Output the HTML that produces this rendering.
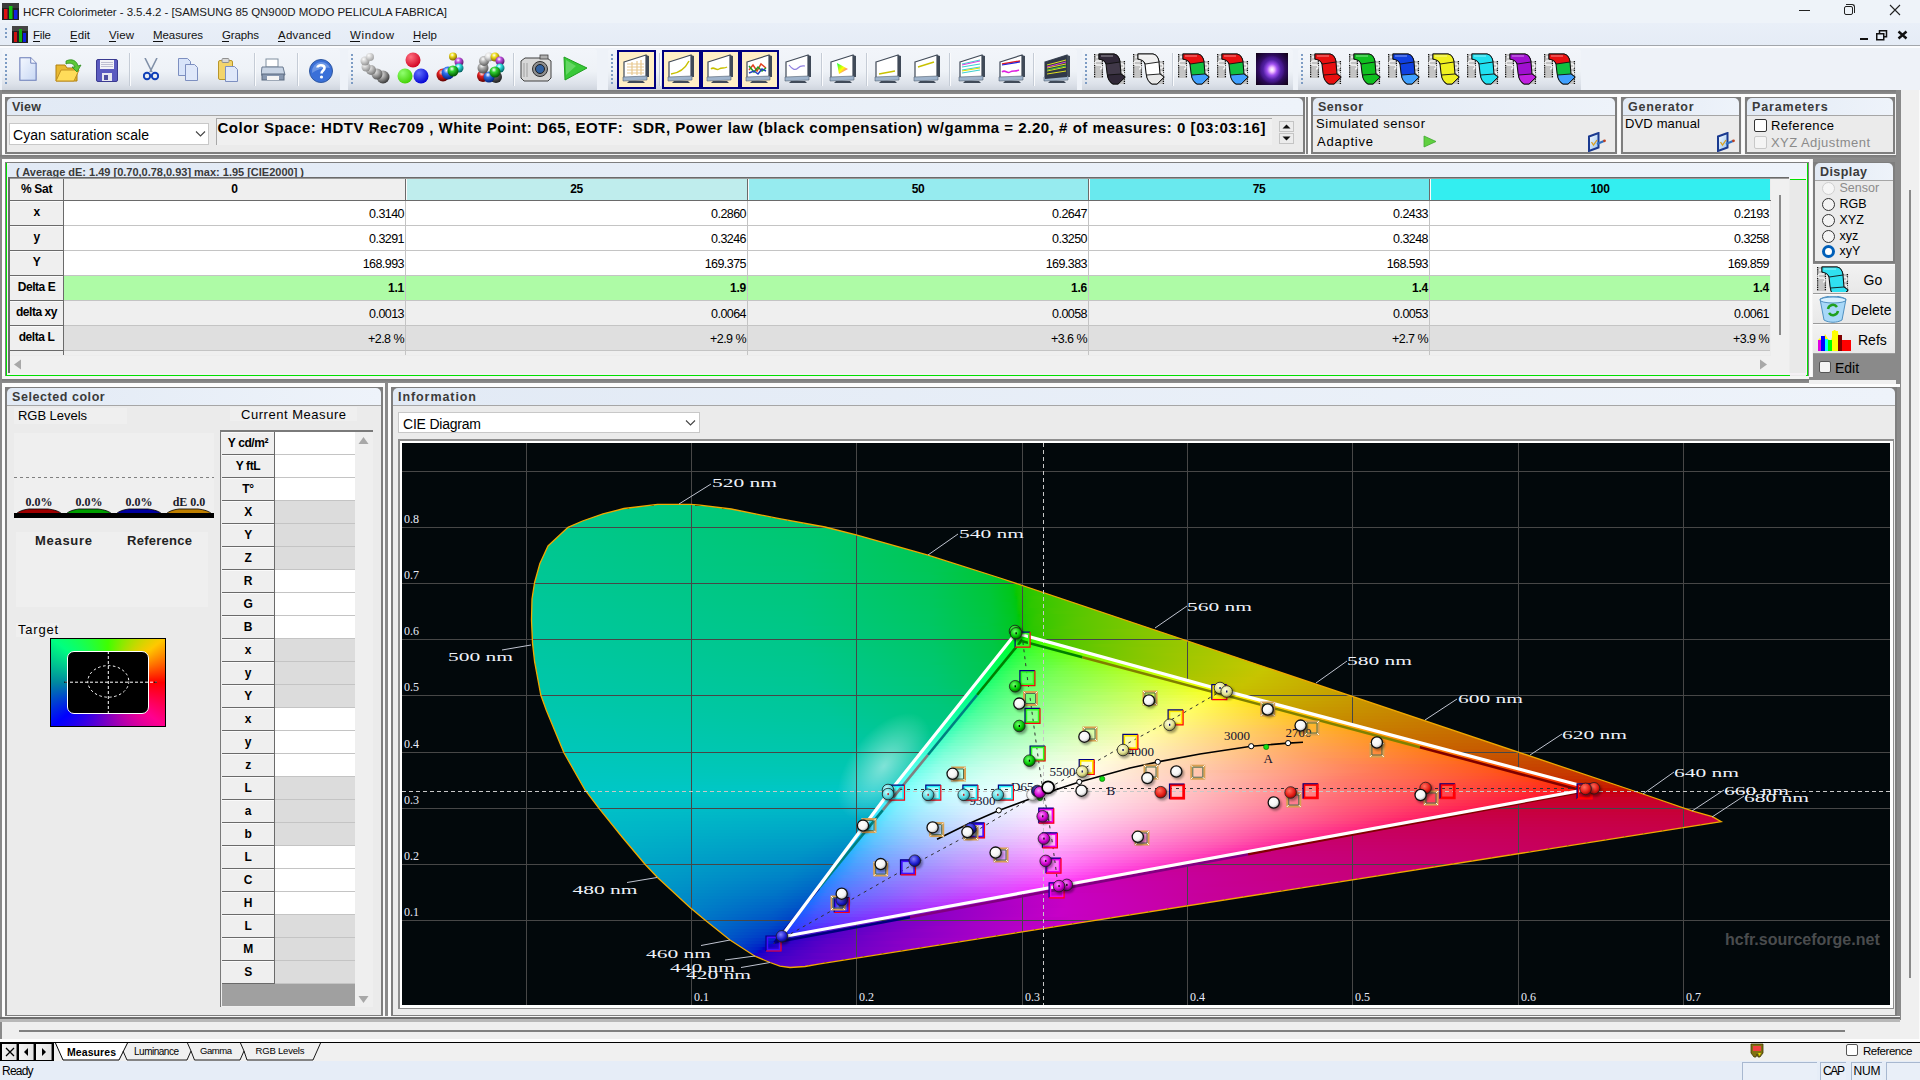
<!DOCTYPE html>
<html><head><meta charset="utf-8"><style>
html,body{margin:0;padding:0;}
body{width:1920px;height:1080px;overflow:hidden;position:relative;background:#f0f0f0;font-family:"Liberation Sans",sans-serif;}
</style></head><body>
<div style="position:absolute;left:0px;top:0px;width:1920px;height:23px;background:#eef3f9"></div><svg style="position:absolute;left:2px;top:3px" width="17" height="17" viewBox="0 0 17 17"><rect x="0" y="0" width="17" height="17" fill="#202020"/><rect x="0" y="0" width="17" height="5" fill="#3a3a3a"/><rect x="2" y="6" width="3.5" height="10" fill="#e01010"/><rect x="7" y="3" width="3.5" height="13" fill="#10c010"/><rect x="12" y="7" width="3.5" height="9" fill="#1020e0"/></svg><div style="position:absolute;left:23px;top:6.09px;white-space:nowrap;font-family:'Liberation Sans', sans-serif;font-size:11.5px;color:#1a1a1a;letter-spacing:-0.060px;line-height:13.22px;">HCFR Colorimeter - 3.5.4.2 - [SAMSUNG 85 QN900D MODO PELICULA FABRICA]</div><div style="position:absolute;left:1799px;top:10px;width:11px;height:1px;background:#222"></div><div style="position:absolute;left:1844px;top:6px;width:8px;height:8px;border:1px solid #222;border-radius:2px;box-sizing:border-box;width:9px;height:9px"></div><div style="position:absolute;left:1846px;top:4px;width:9px;height:9px;border-top:1px solid #222;border-right:1px solid #222;border-radius:0 3px 0 0;box-sizing:border-box"></div><svg style="position:absolute;left:1889px;top:4px" width="12" height="12" viewBox="0 0 12 12"><path d="M1 1L11 11M11 1L1 11" stroke="#222" stroke-width="1.1"/></svg><div style="position:absolute;left:0px;top:23px;width:1920px;height:22px;background:linear-gradient(#e9eff8,#e5ecf6)"></div><div style="position:absolute;left:5px;top:28px;width:2px;height:2px;background:#7d9cc4"></div><div style="position:absolute;left:5px;top:32px;width:2px;height:2px;background:#7d9cc4"></div><div style="position:absolute;left:5px;top:36px;width:2px;height:2px;background:#7d9cc4"></div><svg style="position:absolute;left:12px;top:26px" width="16" height="17" viewBox="0 0 16 17"><rect width="16" height="17" fill="#202020"/><rect x="0" y="0" width="16" height="5" fill="#444"/><rect x="2" y="6" width="3" height="10" fill="#d01010"/><rect x="7" y="3" width="3" height="13" fill="#10b010"/><rect x="11" y="7" width="3" height="9" fill="#1020e0"/></svg><div style="position:absolute;left:33px;top:28.59px;white-space:nowrap;font-family:'Liberation Sans', sans-serif;font-size:11.5px;color:#111;letter-spacing:-0.177px;line-height:13.22px;">File</div><div style="position:absolute;left:33px;top:41px;width:7px;height:1px;background:#111"></div><div style="position:absolute;left:70px;top:28.59px;white-space:nowrap;font-family:'Liberation Sans', sans-serif;font-size:11.5px;color:#111;letter-spacing:0.061px;line-height:13.22px;">Edit</div><div style="position:absolute;left:70px;top:41px;width:7px;height:1px;background:#111"></div><div style="position:absolute;left:109px;top:28.59px;white-space:nowrap;font-family:'Liberation Sans', sans-serif;font-size:11.5px;color:#111;letter-spacing:0.094px;line-height:13.22px;">View</div><div style="position:absolute;left:109px;top:41px;width:7px;height:1px;background:#111"></div><div style="position:absolute;left:153px;top:28.59px;white-space:nowrap;font-family:'Liberation Sans', sans-serif;font-size:11.5px;color:#111;letter-spacing:-0.070px;line-height:13.22px;">Measures</div><div style="position:absolute;left:153px;top:41px;width:10px;height:1px;background:#111"></div><div style="position:absolute;left:222px;top:28.59px;white-space:nowrap;font-family:'Liberation Sans', sans-serif;font-size:11.5px;color:#111;letter-spacing:-0.142px;line-height:13.22px;">Graphs</div><div style="position:absolute;left:222px;top:41px;width:7px;height:1px;background:#111"></div><div style="position:absolute;left:278px;top:28.59px;white-space:nowrap;font-family:'Liberation Sans', sans-serif;font-size:11.5px;color:#111;letter-spacing:0.265px;line-height:13.22px;">Advanced</div><div style="position:absolute;left:278px;top:41px;width:7px;height:1px;background:#111"></div><div style="position:absolute;left:350px;top:28.59px;white-space:nowrap;font-family:'Liberation Sans', sans-serif;font-size:11.5px;color:#111;letter-spacing:0.620px;line-height:13.22px;">Window</div><div style="position:absolute;left:350px;top:41px;width:10px;height:1px;background:#111"></div><div style="position:absolute;left:413px;top:28.59px;white-space:nowrap;font-family:'Liberation Sans', sans-serif;font-size:11.5px;color:#111;letter-spacing:0.117px;line-height:13.22px;">Help</div><div style="position:absolute;left:413px;top:41px;width:7px;height:1px;background:#111"></div><div style="position:absolute;left:1860px;top:38px;width:8px;height:2px;background:#111"></div><svg style="position:absolute;left:1876px;top:30px" width="12" height="11" viewBox="0 0 12 11"><rect x="0.75" y="3.75" width="7" height="6" fill="none" stroke="#111" stroke-width="1.5"/><path d="M3.5 3.5V0.75h7v6H8" fill="none" stroke="#111" stroke-width="1.5"/></svg><svg style="position:absolute;left:1897px;top:30px" width="11" height="10" viewBox="0 0 11 10"><path d="M1.5 1.5L9.5 8.5M9.5 1.5L1.5 8.5" stroke="#111" stroke-width="2.4"/></svg><div style="position:absolute;left:0px;top:45px;width:1920px;height:1px;background:#a2a6ab"></div><div style="position:absolute;left:0px;top:46px;width:1920px;height:2px;background:#fbfcfe"></div><div style="position:absolute;left:0px;top:48px;width:1920px;height:42px;background:#eef2f8"></div><div style="position:absolute;left:2px;top:49px;width:338px;height:41px;background:linear-gradient(#f2f5fa 0%,#eef2f7 55%,#dde2ea 85%,#cfd5de 100%);border-radius:3px 3px 0 0"></div><div style="position:absolute;left:5px;top:54px;width:2px;height:2px;background:#7d9cc4"></div><div style="position:absolute;left:5px;top:58px;width:2px;height:2px;background:#7d9cc4"></div><div style="position:absolute;left:5px;top:62px;width:2px;height:2px;background:#7d9cc4"></div><div style="position:absolute;left:5px;top:66px;width:2px;height:2px;background:#7d9cc4"></div><div style="position:absolute;left:5px;top:70px;width:2px;height:2px;background:#7d9cc4"></div><div style="position:absolute;left:5px;top:74px;width:2px;height:2px;background:#7d9cc4"></div><div style="position:absolute;left:5px;top:78px;width:2px;height:2px;background:#7d9cc4"></div><div style="position:absolute;left:5px;top:82px;width:2px;height:2px;background:#7d9cc4"></div><div style="position:absolute;left:348px;top:49px;width:249px;height:41px;background:linear-gradient(#f2f5fa 0%,#eef2f7 55%,#dde2ea 85%,#cfd5de 100%);border-radius:3px 3px 0 0"></div><div style="position:absolute;left:351px;top:54px;width:2px;height:2px;background:#7d9cc4"></div><div style="position:absolute;left:351px;top:58px;width:2px;height:2px;background:#7d9cc4"></div><div style="position:absolute;left:351px;top:62px;width:2px;height:2px;background:#7d9cc4"></div><div style="position:absolute;left:351px;top:66px;width:2px;height:2px;background:#7d9cc4"></div><div style="position:absolute;left:351px;top:70px;width:2px;height:2px;background:#7d9cc4"></div><div style="position:absolute;left:351px;top:74px;width:2px;height:2px;background:#7d9cc4"></div><div style="position:absolute;left:351px;top:78px;width:2px;height:2px;background:#7d9cc4"></div><div style="position:absolute;left:351px;top:82px;width:2px;height:2px;background:#7d9cc4"></div><div style="position:absolute;left:608px;top:49px;width:469px;height:41px;background:linear-gradient(#f2f5fa 0%,#eef2f7 55%,#dde2ea 85%,#cfd5de 100%);border-radius:3px 3px 0 0"></div><div style="position:absolute;left:611px;top:54px;width:2px;height:2px;background:#7d9cc4"></div><div style="position:absolute;left:611px;top:58px;width:2px;height:2px;background:#7d9cc4"></div><div style="position:absolute;left:611px;top:62px;width:2px;height:2px;background:#7d9cc4"></div><div style="position:absolute;left:611px;top:66px;width:2px;height:2px;background:#7d9cc4"></div><div style="position:absolute;left:611px;top:70px;width:2px;height:2px;background:#7d9cc4"></div><div style="position:absolute;left:611px;top:74px;width:2px;height:2px;background:#7d9cc4"></div><div style="position:absolute;left:611px;top:78px;width:2px;height:2px;background:#7d9cc4"></div><div style="position:absolute;left:611px;top:82px;width:2px;height:2px;background:#7d9cc4"></div><div style="position:absolute;left:1082px;top:49px;width:211px;height:41px;background:linear-gradient(#f2f5fa 0%,#eef2f7 55%,#dde2ea 85%,#cfd5de 100%);border-radius:3px 3px 0 0"></div><div style="position:absolute;left:1085px;top:54px;width:2px;height:2px;background:#7d9cc4"></div><div style="position:absolute;left:1085px;top:58px;width:2px;height:2px;background:#7d9cc4"></div><div style="position:absolute;left:1085px;top:62px;width:2px;height:2px;background:#7d9cc4"></div><div style="position:absolute;left:1085px;top:66px;width:2px;height:2px;background:#7d9cc4"></div><div style="position:absolute;left:1085px;top:70px;width:2px;height:2px;background:#7d9cc4"></div><div style="position:absolute;left:1085px;top:74px;width:2px;height:2px;background:#7d9cc4"></div><div style="position:absolute;left:1085px;top:78px;width:2px;height:2px;background:#7d9cc4"></div><div style="position:absolute;left:1085px;top:82px;width:2px;height:2px;background:#7d9cc4"></div><div style="position:absolute;left:1298px;top:49px;width:283px;height:41px;background:linear-gradient(#f2f5fa 0%,#eef2f7 55%,#dde2ea 85%,#cfd5de 100%);border-radius:3px 3px 0 0"></div><div style="position:absolute;left:1301px;top:54px;width:2px;height:2px;background:#7d9cc4"></div><div style="position:absolute;left:1301px;top:58px;width:2px;height:2px;background:#7d9cc4"></div><div style="position:absolute;left:1301px;top:62px;width:2px;height:2px;background:#7d9cc4"></div><div style="position:absolute;left:1301px;top:66px;width:2px;height:2px;background:#7d9cc4"></div><div style="position:absolute;left:1301px;top:70px;width:2px;height:2px;background:#7d9cc4"></div><div style="position:absolute;left:1301px;top:74px;width:2px;height:2px;background:#7d9cc4"></div><div style="position:absolute;left:1301px;top:78px;width:2px;height:2px;background:#7d9cc4"></div><div style="position:absolute;left:1301px;top:82px;width:2px;height:2px;background:#7d9cc4"></div><div style="position:absolute;left:129px;top:53px;width:1px;height:33px;background:#c5ccd6"></div><div style="position:absolute;left:130px;top:53px;width:1px;height:33px;background:#fafbfd"></div><div style="position:absolute;left:254px;top:53px;width:1px;height:33px;background:#c5ccd6"></div><div style="position:absolute;left:255px;top:53px;width:1px;height:33px;background:#fafbfd"></div><div style="position:absolute;left:297px;top:53px;width:1px;height:33px;background:#c5ccd6"></div><div style="position:absolute;left:298px;top:53px;width:1px;height:33px;background:#fafbfd"></div><div style="position:absolute;left:513px;top:53px;width:1px;height:33px;background:#c5ccd6"></div><div style="position:absolute;left:514px;top:53px;width:1px;height:33px;background:#fafbfd"></div><div style="position:absolute;left:659px;top:53px;width:1px;height:33px;background:#c5ccd6"></div><div style="position:absolute;left:660px;top:53px;width:1px;height:33px;background:#fafbfd"></div><div style="position:absolute;left:821px;top:53px;width:1px;height:33px;background:#c5ccd6"></div><div style="position:absolute;left:822px;top:53px;width:1px;height:33px;background:#fafbfd"></div><div style="position:absolute;left:866px;top:53px;width:1px;height:33px;background:#c5ccd6"></div><div style="position:absolute;left:867px;top:53px;width:1px;height:33px;background:#fafbfd"></div><div style="position:absolute;left:949px;top:53px;width:1px;height:33px;background:#c5ccd6"></div><div style="position:absolute;left:950px;top:53px;width:1px;height:33px;background:#fafbfd"></div><div style="position:absolute;left:1033px;top:53px;width:1px;height:33px;background:#c5ccd6"></div><div style="position:absolute;left:1034px;top:53px;width:1px;height:33px;background:#fafbfd"></div><div style="position:absolute;left:1172px;top:53px;width:1px;height:33px;background:#c5ccd6"></div><div style="position:absolute;left:1173px;top:53px;width:1px;height:33px;background:#fafbfd"></div><svg style="position:absolute;left:18px;top:57px" width="20" height="24" viewBox="0 0 23 31"><defs><linearGradient id="pg" x1="0" y1="0" x2="1" y2="1"><stop offset="0" stop-color="#f4f8ff"/><stop offset="1" stop-color="#c8d8f4"/></linearGradient></defs><path d="M1 1h14l7 7v22H1z" fill="url(#pg)" stroke="#6a7cb8" stroke-width="1.4"/><path d="M15 1v7h7" fill="#f4f7fd" stroke="#6a7cb8" stroke-width="1.2"/></svg><svg style="position:absolute;left:55px;top:57px" width="28" height="26" viewBox="0 0 28 26"><path d="M1 8h9l2 3h10v13H1z" fill="#e8b830" stroke="#b08010"/><path d="M1 24l5-11h18l-5 11z" fill="#ffdc5a" stroke="#c09020"/><path d="M11 4c6-3 11 0 12 5l3-1-4 7-5-5 3 0c-1-3-5-5-9-3z" fill="#5cc838" stroke="#2e8a20" stroke-width="0.8"/></svg><svg style="position:absolute;left:96px;top:59px" width="22" height="23" viewBox="0 0 22 23"><rect x="0.5" y="0.5" width="21" height="22" rx="1.5" fill="#5b5bc0" stroke="#3a3a90"/><rect x="4" y="1" width="14" height="9" fill="#f2f2f8"/><path d="M5 3.5h12M5 5.5h12M5 7.5h12" stroke="#b0b0c8" stroke-width="0.8"/><rect x="6" y="14" width="10" height="8" fill="#e8e8f0"/><rect x="8" y="16" width="4" height="5" fill="#5050a0"/></svg><svg style="position:absolute;left:143px;top:58px" width="16" height="23" viewBox="0 0 16 23"><path d="M2 0l7 14M14 0L7 14" stroke="#8090a8" stroke-width="1.6"/><circle cx="4" cy="18" r="3.2" fill="none" stroke="#1040b8" stroke-width="2"/><circle cx="12" cy="18" r="3.2" fill="none" stroke="#1040b8" stroke-width="2"/></svg><svg style="position:absolute;left:178px;top:58px" width="21" height="24" viewBox="0 0 21 24"><path d="M0.5 0.5h9l3 3v14H0.5z" fill="#d8e4fa" stroke="#7d8fc0"/><path d="M7.5 6.5h9l3 3v13H7.5z" fill="#dfe8fa" stroke="#7d8fc0"/></svg><svg style="position:absolute;left:218px;top:58px" width="20" height="25" viewBox="0 0 20 25"><rect x="0.5" y="2.5" width="14" height="19" rx="1.5" fill="#f3d46a" stroke="#b8962a"/><rect x="4" y="0.5" width="7" height="4" rx="1" fill="#d8d8d8" stroke="#909090"/><path d="M7.5 8.5h9l3 3v12H7.5z" fill="#dfe8fa" stroke="#7d8fc0"/></svg><svg style="position:absolute;left:261px;top:58px" width="25" height="24" viewBox="0 0 25 24"><rect x="5" y="1" width="12" height="8" fill="#fff" stroke="#8090a0"/><path d="M1 9h21l2 8H0z" fill="#c8d4e4" stroke="#6a7a90"/><rect x="1" y="16" width="22" height="6" fill="#8898b0" stroke="#5a6a80"/><rect x="6" y="18" width="12" height="4" fill="#f4f4f4"/></svg><svg style="position:absolute;left:309px;top:59px" width="24" height="24" viewBox="0 0 24 24"><circle cx="12" cy="12" r="11.5" fill="#3a70d8" stroke="#3058a0"/><path d="M12 3 a10 9 0 0 1 9 6 c-6 -1 -12 1 -18 5 a10 10 0 0 1 9 -11z" fill="#8eb0ee" opacity="0.6"/><path d="M8.5 8.5c0-3 7-3 7 0.5 0 2.5-3 2.5-3 5.5" fill="none" stroke="#fff" stroke-width="2.6"/><circle cx="12.5" cy="18" r="1.6" fill="#fff"/></svg><svg style="position:absolute;left:357px;top:53px" width="33" height="32" viewBox="0 0 33 32"><defs><radialGradient id="gb0" cx="0.35" cy="0.3" r="0.75"><stop offset="0" stop-color="#f0f0f0"/><stop offset="1" stop-color="#303030"/></radialGradient></defs><circle cx="26" cy="24" r="6.5" fill="url(#gb0)"/><defs><radialGradient id="gb1" cx="0.35" cy="0.3" r="0.75"><stop offset="0" stop-color="#e8e8e8"/><stop offset="1" stop-color="#505050"/></radialGradient></defs><circle cx="20" cy="21" r="5.5" fill="url(#gb1)"/><defs><radialGradient id="gb2" cx="0.35" cy="0.3" r="0.75"><stop offset="0" stop-color="#f4f4f4"/><stop offset="1" stop-color="#707070"/></radialGradient></defs><circle cx="14" cy="17" r="5" fill="url(#gb2)"/><defs><radialGradient id="gb3" cx="0.35" cy="0.3" r="0.75"><stop offset="0" stop-color="#fafafa"/><stop offset="1" stop-color="#8a8a8a"/></radialGradient></defs><circle cx="9" cy="14" r="4.5" fill="url(#gb3)"/><defs><radialGradient id="gb4" cx="0.35" cy="0.3" r="0.75"><stop offset="0" stop-color="#fafafa"/><stop offset="1" stop-color="#909090"/></radialGradient></defs><circle cx="8" cy="8" r="4.5" fill="url(#gb4)"/><defs><radialGradient id="gb5" cx="0.35" cy="0.3" r="0.75"><stop offset="0" stop-color="#fcfcfc"/><stop offset="1" stop-color="#a0a0a0"/></radialGradient></defs><circle cx="13" cy="4" r="4" fill="url(#gb5)"/></svg><svg style="position:absolute;left:397px;top:52px" width="32" height="32" viewBox="0 0 32 32"><defs><radialGradient id="rg1" cx="0.35" cy="0.3" r="0.75"><stop offset="0" stop-color="#ff7080"/><stop offset="1" stop-color="#d00020"/></radialGradient></defs><circle cx="16" cy="8" r="7.5" fill="url(#rg1)"/><defs><radialGradient id="rg2" cx="0.35" cy="0.3" r="0.75"><stop offset="0" stop-color="#90ff70"/><stop offset="1" stop-color="#40d000"/></radialGradient></defs><circle cx="8" cy="24" r="7.5" fill="url(#rg2)"/><defs><radialGradient id="rg3" cx="0.35" cy="0.3" r="0.75"><stop offset="0" stop-color="#6070ff"/><stop offset="1" stop-color="#0000d0"/></radialGradient></defs><circle cx="24" cy="24" r="7.5" fill="url(#rg3)"/></svg><svg style="position:absolute;left:436px;top:52px" width="32" height="32" viewBox="0 0 32 32"><defs><radialGradient id="m10" cx="0.4" cy="0.3" r="0.7"><stop offset="0" stop-color="#ffffff"/><stop offset="0.35" stop-color="#f0e020"/><stop offset="1" stop-color="#806000"/></radialGradient></defs><circle cx="17" cy="4.5" r="4" fill="url(#m10)"/><defs><radialGradient id="m11" cx="0.4" cy="0.3" r="0.7"><stop offset="0" stop-color="#ffffff"/><stop offset="0.35" stop-color="#c050e0"/><stop offset="1" stop-color="#501060"/></radialGradient></defs><circle cx="23" cy="10" r="4.5" fill="url(#m11)"/><defs><radialGradient id="m12" cx="0.4" cy="0.3" r="0.7"><stop offset="0" stop-color="#ffffff"/><stop offset="0.35" stop-color="#30e0e0"/><stop offset="1" stop-color="#006060"/></radialGradient></defs><circle cx="23" cy="16" r="4.5" fill="url(#m12)"/><defs><radialGradient id="m13" cx="0.4" cy="0.3" r="0.7"><stop offset="0" stop-color="#ffffff"/><stop offset="0.35" stop-color="#e02020"/><stop offset="1" stop-color="#600000"/></radialGradient></defs><circle cx="7" cy="23" r="6.5" fill="url(#m13)"/><defs><radialGradient id="m14" cx="0.4" cy="0.3" r="0.7"><stop offset="0" stop-color="#ffffff"/><stop offset="0.35" stop-color="#3070f0"/><stop offset="1" stop-color="#002080"/></radialGradient></defs><circle cx="12" cy="21" r="6.5" fill="url(#m14)"/><defs><radialGradient id="m15" cx="0.4" cy="0.3" r="0.7"><stop offset="0" stop-color="#ffffff"/><stop offset="0.35" stop-color="#30d030"/><stop offset="1" stop-color="#005000"/></radialGradient></defs><circle cx="17" cy="19" r="5.5" fill="url(#m15)"/></svg><svg style="position:absolute;left:475px;top:52px" width="32" height="32" viewBox="0 0 32 32"><defs><radialGradient id="m20" cx="0.4" cy="0.3" r="0.7"><stop offset="0" stop-color="#ffffff"/><stop offset="0.35" stop-color="#e02020"/><stop offset="1" stop-color="#600000"/></radialGradient></defs><circle cx="8" cy="24" r="6" fill="url(#m20)"/><defs><radialGradient id="m21" cx="0.4" cy="0.3" r="0.7"><stop offset="0" stop-color="#ffffff"/><stop offset="0.35" stop-color="#606060"/><stop offset="1" stop-color="#202020"/></radialGradient></defs><circle cx="21" cy="25" r="6" fill="url(#m21)"/><defs><radialGradient id="m22" cx="0.4" cy="0.3" r="0.7"><stop offset="0" stop-color="#ffffff"/><stop offset="0.35" stop-color="#3070e0"/><stop offset="1" stop-color="#002080"/></radialGradient></defs><circle cx="14" cy="25" r="5.5" fill="url(#m22)"/><defs><radialGradient id="m23" cx="0.4" cy="0.3" r="0.7"><stop offset="0" stop-color="#ffffff"/><stop offset="0.35" stop-color="#b0b0b0"/><stop offset="1" stop-color="#505050"/></radialGradient></defs><circle cx="8" cy="16" r="5.5" fill="url(#m23)"/><defs><radialGradient id="m24" cx="0.4" cy="0.3" r="0.7"><stop offset="0" stop-color="#ffffff"/><stop offset="0.35" stop-color="#c0c0c0"/><stop offset="1" stop-color="#606060"/></radialGradient></defs><circle cx="9" cy="9" r="5" fill="url(#m24)"/><defs><radialGradient id="m25" cx="0.4" cy="0.3" r="0.7"><stop offset="0" stop-color="#ffffff"/><stop offset="0.35" stop-color="#e8e8e8"/><stop offset="1" stop-color="#909090"/></radialGradient></defs><circle cx="14" cy="5" r="4.5" fill="url(#m25)"/><defs><radialGradient id="m26" cx="0.4" cy="0.3" r="0.7"><stop offset="0" stop-color="#ffffff"/><stop offset="0.35" stop-color="#f0e020"/><stop offset="1" stop-color="#806000"/></radialGradient></defs><circle cx="20" cy="5" r="4.5" fill="url(#m26)"/><defs><radialGradient id="m27" cx="0.4" cy="0.3" r="0.7"><stop offset="0" stop-color="#ffffff"/><stop offset="0.35" stop-color="#c050e0"/><stop offset="1" stop-color="#501060"/></radialGradient></defs><circle cx="25" cy="9" r="4.5" fill="url(#m27)"/><defs><radialGradient id="m28" cx="0.4" cy="0.3" r="0.7"><stop offset="0" stop-color="#ffffff"/><stop offset="0.35" stop-color="#30e0e0"/><stop offset="1" stop-color="#006060"/></radialGradient></defs><circle cx="25" cy="16" r="4.5" fill="url(#m28)"/><defs><radialGradient id="m29" cx="0.4" cy="0.3" r="0.7"><stop offset="0" stop-color="#ffffff"/><stop offset="0.35" stop-color="#30d030"/><stop offset="1" stop-color="#005000"/></radialGradient></defs><circle cx="20" cy="20" r="5.5" fill="url(#m29)"/></svg><svg style="position:absolute;left:520px;top:53px" width="32" height="30" viewBox="0 0 32 30"><path d="M1 8l4-3h22l4 3v17l-3 3H4l-3-3z" fill="#d8d8d8" stroke="#404040"/><rect x="20" y="2" width="8" height="4" fill="#b0b0b0" stroke="#404040" stroke-width="0.8"/><circle cx="20" cy="16" r="7.5" fill="#909090" stroke="#303030"/><circle cx="20" cy="16" r="4.5" fill="#3060a0" stroke="#202020"/><path d="M4 10v14M7 10v14" stroke="#a0a0a0"/></svg><svg style="position:absolute;left:562px;top:55px" width="27" height="27" viewBox="0 0 27 27"><path d="M2 2L25 13L3 25z" fill="#38c838" stroke="#20a020"/><path d="M4 5L14 11L4 20z" fill="#80e080" opacity="0.6"/></svg><svg width="0" height="0" style="position:absolute"><defs><linearGradient id="ciegrad" x1="0" y1="0" x2="1" y2="1"><stop offset="0" stop-color="#00ff40"/><stop offset="0.5" stop-color="#ffff00"/><stop offset="1" stop-color="#ff00ff"/></linearGradient></defs></svg><div style="position:absolute;left:617px;top:50px;width:39px;height:39px;background:#ffefc6;border:2px solid #000080;box-sizing:border-box"></div><div style="position:absolute;left:662px;top:50px;width:39px;height:39px;background:#ffefc6;border:2px solid #000080;box-sizing:border-box"></div><div style="position:absolute;left:701px;top:50px;width:39px;height:39px;background:#ffefc6;border:2px solid #000080;box-sizing:border-box"></div><div style="position:absolute;left:740px;top:50px;width:39px;height:39px;background:#ffefc6;border:2px solid #000080;box-sizing:border-box"></div><svg style="position:absolute;left:620px;top:53px" width="32" height="32" viewBox="0 0 32 32"><path d="M4 9l22-7v22l-22 2z" fill="#fff" stroke="#404a58" stroke-width="1.2"/><path d="M26 2l3 1v21l-3 0z" fill="#404a58"/><path d="M3 24l24-1v4l-24 1z" fill="#9fb4cc" stroke="#506070" stroke-width="0.6"/><path d="M9 28h14l2 2H7z" fill="#404a58"/><path d="M7 11h17M7 14h17M7 17h17M7 20h17M12 9v13M17 8v14M21 7v15" stroke="#e8c890" stroke-width="1.2"/></svg><svg style="position:absolute;left:665px;top:53px" width="32" height="32" viewBox="0 0 32 32"><path d="M4 9l22-7v22l-22 2z" fill="#fff" stroke="#404a58" stroke-width="1.2"/><path d="M26 2l3 1v21l-3 0z" fill="#404a58"/><path d="M3 24l24-1v4l-24 1z" fill="#9fb4cc" stroke="#506070" stroke-width="0.6"/><path d="M9 28h14l2 2H7z" fill="#404a58"/><path d="M6 21c8-1 14-5 18-13" fill="none" stroke="#c8c000" stroke-width="1.5"/></svg><svg style="position:absolute;left:704px;top:53px" width="32" height="32" viewBox="0 0 32 32"><path d="M4 9l22-7v22l-22 2z" fill="#fff" stroke="#404a58" stroke-width="1.2"/><path d="M26 2l3 1v21l-3 0z" fill="#404a58"/><path d="M3 24l24-1v4l-24 1z" fill="#9fb4cc" stroke="#506070" stroke-width="0.6"/><path d="M9 28h14l2 2H7z" fill="#404a58"/><path d="M7 16c3-3 5 2 8 0 3-2 5 0 8-2" fill="none" stroke="#c8c000" stroke-width="1.5"/></svg><svg style="position:absolute;left:743px;top:53px" width="32" height="32" viewBox="0 0 32 32"><path d="M4 9l22-7v22l-22 2z" fill="#fff" stroke="#404a58" stroke-width="1.2"/><path d="M26 2l3 1v21l-3 0z" fill="#404a58"/><path d="M3 24l24-1v4l-24 1z" fill="#9fb4cc" stroke="#506070" stroke-width="0.6"/><path d="M9 28h14l2 2H7z" fill="#404a58"/><path d="M6 17l4-5 4 6 4-7 5 4" fill="none" stroke="#e04020" stroke-width="1.5"/><path d="M6 13l5 6 4-5 4 4 4-3" fill="none" stroke="#20a020" stroke-width="1.5"/><path d="M6 20l5-2 4 3 4-5 4 2" fill="none" stroke="#2040c0" stroke-width="1.5"/></svg><svg style="position:absolute;left:782px;top:53px" width="32" height="32" viewBox="0 0 32 32"><path d="M4 9l22-7v22l-22 2z" fill="#fff" stroke="#404a58" stroke-width="1.2"/><path d="M26 2l3 1v21l-3 0z" fill="#404a58"/><path d="M3 24l24-1v4l-24 1z" fill="#9fb4cc" stroke="#506070" stroke-width="0.6"/><path d="M9 28h14l2 2H7z" fill="#404a58"/><path d="M7 12c3 4 6 6 9 3 3-3 5-2 7-2" fill="none" stroke="#9080e0" stroke-width="1.2"/></svg><svg style="position:absolute;left:827px;top:53px" width="32" height="32" viewBox="0 0 32 32"><path d="M4 9l22-7v22l-22 2z" fill="#fff" stroke="#404a58" stroke-width="1.2"/><path d="M26 2l3 1v21l-3 0z" fill="#404a58"/><path d="M3 24l24-1v4l-24 1z" fill="#9fb4cc" stroke="#506070" stroke-width="0.6"/><path d="M9 28h14l2 2H7z" fill="#404a58"/><path d="M10 10l11 6-9 5z" fill="url(#ciegrad)"/></svg><svg style="position:absolute;left:872px;top:53px" width="32" height="32" viewBox="0 0 32 32"><path d="M4 9l22-7v22l-22 2z" fill="#fff" stroke="#404a58" stroke-width="1.2"/><path d="M26 2l3 1v21l-3 0z" fill="#404a58"/><path d="M3 24l24-1v4l-24 1z" fill="#9fb4cc" stroke="#506070" stroke-width="0.6"/><path d="M9 28h14l2 2H7z" fill="#404a58"/><path d="M7 21l16-3" fill="none" stroke="#c8c000" stroke-width="1.5"/></svg><svg style="position:absolute;left:911px;top:53px" width="32" height="32" viewBox="0 0 32 32"><path d="M4 9l22-7v22l-22 2z" fill="#fff" stroke="#404a58" stroke-width="1.2"/><path d="M26 2l3 1v21l-3 0z" fill="#404a58"/><path d="M3 24l24-1v4l-24 1z" fill="#9fb4cc" stroke="#506070" stroke-width="0.6"/><path d="M9 28h14l2 2H7z" fill="#404a58"/><path d="M7 14l16-5" fill="none" stroke="#c8c000" stroke-width="1.5"/></svg><svg style="position:absolute;left:956px;top:53px" width="32" height="32" viewBox="0 0 32 32"><path d="M4 9l22-7v22l-22 2z" fill="#fff" stroke="#404a58" stroke-width="1.2"/><path d="M26 2l3 1v21l-3 0z" fill="#404a58"/><path d="M3 24l24-1v4l-24 1z" fill="#9fb4cc" stroke="#506070" stroke-width="0.6"/><path d="M9 28h14l2 2H7z" fill="#404a58"/><path d="M6 11l18-4M6 14l18-3M6 17l18-3M6 20l18-3" stroke="#40d0d0" stroke-width="1.2"/><path d="M6 12l18-4" stroke="#e040e0"/><path d="M6 18l18-3" stroke="#e0e000"/></svg><svg style="position:absolute;left:996px;top:53px" width="32" height="32" viewBox="0 0 32 32"><path d="M4 9l22-7v22l-22 2z" fill="#fff" stroke="#404a58" stroke-width="1.2"/><path d="M26 2l3 1v21l-3 0z" fill="#404a58"/><path d="M3 24l24-1v4l-24 1z" fill="#9fb4cc" stroke="#506070" stroke-width="0.6"/><path d="M9 28h14l2 2H7z" fill="#404a58"/><path d="M6 11l18-3" stroke="#e02020" stroke-width="1.5"/><path d="M6 12l18-3" stroke="#2020e0" stroke-width="1.2"/><path d="M6 19c3-3 5 2 8 0 3-2 5 0 9-2" fill="none" stroke="#e020e0" stroke-width="1.5"/></svg><svg style="position:absolute;left:1041px;top:53px" width="32" height="32" viewBox="0 0 32 32"><path d="M4 9l22-7v22l-22 2z" fill="#fff" stroke="#404a58" stroke-width="1.2"/><path d="M26 2l3 1v21l-3 0z" fill="#404a58"/><path d="M3 24l24-1v4l-24 1z" fill="#9fb4cc" stroke="#506070" stroke-width="0.6"/><path d="M9 28h14l2 2H7z" fill="#404a58"/><path d="M4 9l22-7v22l-22 2z" fill="#303848"/><path d="M6 12l19-5M6 15l19-4M6 18l19-4M6 21l19-3" stroke="#e0e020"/><path d="M6 14l19-5" stroke="#e040e0"/><path d="M6 17l19-4" stroke="#40c040"/></svg><svg style="position:absolute;left:1094px;top:53px" width="32" height="32" viewBox="0 0 32 32"><rect x="0" y="1" width="9" height="24" fill="#c4c4c4"/><path d="M0.6 1v24M8.4 1v24" stroke="#101010" stroke-width="1.3" stroke-dasharray="1.2 1"/><path d="M2 4h4a2 2 0 0 1 0 4h-3a2 2 0 0 0 0 4h3a2 2 0 0 1 0 4" fill="none" stroke="#f4f4f4" stroke-width="1.3"/><rect x="22" y="8" width="9" height="23" fill="#c4c4c4"/><path d="M22.6 8v23M30.4 8v23" stroke="#101010" stroke-width="1.3" stroke-dasharray="1.2 1"/><path d="M24 11h4a2 2 0 0 1 0 4h-3a2 2 0 0 0 0 4h3a2 2 0 0 1 0 4" fill="none" stroke="#f4f4f4" stroke-width="1.3"/><path d="M5 1 H20 Q25 2 26 9 L27 21 L31 24 L24 31 H19 Q14 28 13 20 L12 11 Q11 7 5 6 Z" fill="#403848" stroke="#101010" stroke-width="1.1"/><path d="M5 1 H20 Q25 2 26 9 L12.3 11 Q11 7 5 6 Z" fill="#302838" stroke="#101010" stroke-width="0.9"/><path d="M27 21 L31 24 L24 31 H19 Q14 28 13.5 22 Z" fill="#302838" stroke="#101010" stroke-width="0.9"/><path d="M7 3 H19" stroke="#ffffff" stroke-opacity="0.35" stroke-width="1.5"/></svg><svg style="position:absolute;left:1133px;top:53px" width="32" height="32" viewBox="0 0 32 32"><rect x="0" y="1" width="9" height="24" fill="#c4c4c4"/><path d="M0.6 1v24M8.4 1v24" stroke="#101010" stroke-width="1.3" stroke-dasharray="1.2 1"/><path d="M2 4h4a2 2 0 0 1 0 4h-3a2 2 0 0 0 0 4h3a2 2 0 0 1 0 4" fill="none" stroke="#f4f4f4" stroke-width="1.3"/><rect x="22" y="8" width="9" height="23" fill="#c4c4c4"/><path d="M22.6 8v23M30.4 8v23" stroke="#101010" stroke-width="1.3" stroke-dasharray="1.2 1"/><path d="M24 11h4a2 2 0 0 1 0 4h-3a2 2 0 0 0 0 4h3a2 2 0 0 1 0 4" fill="none" stroke="#f4f4f4" stroke-width="1.3"/><path d="M5 1 H20 Q25 2 26 9 L27 21 L31 24 L24 31 H19 Q14 28 13 20 L12 11 Q11 7 5 6 Z" fill="#ffffff" stroke="#101010" stroke-width="1.1"/><path d="M5 1 H20 Q25 2 26 9 L12.3 11 Q11 7 5 6 Z" fill="#f0f0f0" stroke="#101010" stroke-width="0.9"/><path d="M27 21 L31 24 L24 31 H19 Q14 28 13.5 22 Z" fill="#e8e8e8" stroke="#101010" stroke-width="0.9"/><path d="M7 3 H19" stroke="#ffffff" stroke-opacity="0.35" stroke-width="1.5"/></svg><svg style="position:absolute;left:1178px;top:53px" width="32" height="32" viewBox="0 0 32 32"><rect x="0" y="1" width="9" height="24" fill="#c4c4c4"/><path d="M0.6 1v24M8.4 1v24" stroke="#101010" stroke-width="1.3" stroke-dasharray="1.2 1"/><path d="M2 4h4a2 2 0 0 1 0 4h-3a2 2 0 0 0 0 4h3a2 2 0 0 1 0 4" fill="none" stroke="#f4f4f4" stroke-width="1.3"/><rect x="22" y="8" width="9" height="23" fill="#c4c4c4"/><path d="M22.6 8v23M30.4 8v23" stroke="#101010" stroke-width="1.3" stroke-dasharray="1.2 1"/><path d="M24 11h4a2 2 0 0 1 0 4h-3a2 2 0 0 0 0 4h3a2 2 0 0 1 0 4" fill="none" stroke="#f4f4f4" stroke-width="1.3"/><path d="M5 1 H20 Q25 2 26 9 L27 21 L31 24 L24 31 H19 Q14 28 13 20 L12 11 Q11 7 5 6 Z" fill="#10c040" stroke="#101010" stroke-width="1.1"/><path d="M5 1 H20 Q25 2 26 9 L12.3 11 Q11 7 5 6 Z" fill="#e81010" stroke="#101010" stroke-width="0.9"/><path d="M27 21 L31 24 L24 31 H19 Q14 28 13.5 22 Z" fill="#40a0ff" stroke="#101010" stroke-width="0.9"/><path d="M7 3 H19" stroke="#ffffff" stroke-opacity="0.35" stroke-width="1.5"/></svg><svg style="position:absolute;left:1217px;top:53px" width="32" height="32" viewBox="0 0 32 32"><rect x="0" y="1" width="9" height="24" fill="#c4c4c4"/><path d="M0.6 1v24M8.4 1v24" stroke="#101010" stroke-width="1.3" stroke-dasharray="1.2 1"/><path d="M2 4h4a2 2 0 0 1 0 4h-3a2 2 0 0 0 0 4h3a2 2 0 0 1 0 4" fill="none" stroke="#f4f4f4" stroke-width="1.3"/><rect x="22" y="8" width="9" height="23" fill="#c4c4c4"/><path d="M22.6 8v23M30.4 8v23" stroke="#101010" stroke-width="1.3" stroke-dasharray="1.2 1"/><path d="M24 11h4a2 2 0 0 1 0 4h-3a2 2 0 0 0 0 4h3a2 2 0 0 1 0 4" fill="none" stroke="#f4f4f4" stroke-width="1.3"/><path d="M5 1 H20 Q25 2 26 9 L27 21 L31 24 L24 31 H19 Q14 28 13 20 L12 11 Q11 7 5 6 Z" fill="#10c040" stroke="#101010" stroke-width="1.1"/><path d="M5 1 H20 Q25 2 26 9 L12.3 11 Q11 7 5 6 Z" fill="#e81010" stroke="#101010" stroke-width="0.9"/><path d="M27 21 L31 24 L24 31 H19 Q14 28 13.5 22 Z" fill="#40a0ff" stroke="#101010" stroke-width="0.9"/><path d="M7 3 H19" stroke="#ffffff" stroke-opacity="0.35" stroke-width="1.5"/></svg><div style="position:absolute;left:1256px;top:53px;width:32px;height:32px;background:radial-gradient(ellipse 40% 45% at 50% 52%,#ffffff 0,#f0c0ff 18%,#a050f0 40%,#5020a0 70%,transparent 100%),radial-gradient(circle at 50% 50%,#7030c0 0,#401080 45%,#200840 75%,#100010 100%)"></div><svg style="position:absolute;left:1310px;top:53px" width="32" height="32" viewBox="0 0 32 32"><rect x="0" y="1" width="9" height="24" fill="#c4c4c4"/><path d="M0.6 1v24M8.4 1v24" stroke="#101010" stroke-width="1.3" stroke-dasharray="1.2 1"/><path d="M2 4h4a2 2 0 0 1 0 4h-3a2 2 0 0 0 0 4h3a2 2 0 0 1 0 4" fill="none" stroke="#f4f4f4" stroke-width="1.3"/><rect x="22" y="8" width="9" height="23" fill="#c4c4c4"/><path d="M22.6 8v23M30.4 8v23" stroke="#101010" stroke-width="1.3" stroke-dasharray="1.2 1"/><path d="M24 11h4a2 2 0 0 1 0 4h-3a2 2 0 0 0 0 4h3a2 2 0 0 1 0 4" fill="none" stroke="#f4f4f4" stroke-width="1.3"/><path d="M5 1 H20 Q25 2 26 9 L27 21 L31 24 L24 31 H19 Q14 28 13 20 L12 11 Q11 7 5 6 Z" fill="#e81010" stroke="#101010" stroke-width="1.1"/><path d="M5 1 H20 Q25 2 26 9 L12.3 11 Q11 7 5 6 Z" fill="#e81010" stroke="#101010" stroke-width="0.9"/><path d="M27 21 L31 24 L24 31 H19 Q14 28 13.5 22 Z" fill="#e81010" stroke="#101010" stroke-width="0.9"/><path d="M7 3 H19" stroke="#ffffff" stroke-opacity="0.35" stroke-width="1.5"/></svg><svg style="position:absolute;left:1349px;top:53px" width="32" height="32" viewBox="0 0 32 32"><rect x="0" y="1" width="9" height="24" fill="#c4c4c4"/><path d="M0.6 1v24M8.4 1v24" stroke="#101010" stroke-width="1.3" stroke-dasharray="1.2 1"/><path d="M2 4h4a2 2 0 0 1 0 4h-3a2 2 0 0 0 0 4h3a2 2 0 0 1 0 4" fill="none" stroke="#f4f4f4" stroke-width="1.3"/><rect x="22" y="8" width="9" height="23" fill="#c4c4c4"/><path d="M22.6 8v23M30.4 8v23" stroke="#101010" stroke-width="1.3" stroke-dasharray="1.2 1"/><path d="M24 11h4a2 2 0 0 1 0 4h-3a2 2 0 0 0 0 4h3a2 2 0 0 1 0 4" fill="none" stroke="#f4f4f4" stroke-width="1.3"/><path d="M5 1 H20 Q25 2 26 9 L27 21 L31 24 L24 31 H19 Q14 28 13 20 L12 11 Q11 7 5 6 Z" fill="#10c020" stroke="#101010" stroke-width="1.1"/><path d="M5 1 H20 Q25 2 26 9 L12.3 11 Q11 7 5 6 Z" fill="#10c020" stroke="#101010" stroke-width="0.9"/><path d="M27 21 L31 24 L24 31 H19 Q14 28 13.5 22 Z" fill="#10c020" stroke="#101010" stroke-width="0.9"/><path d="M7 3 H19" stroke="#ffffff" stroke-opacity="0.35" stroke-width="1.5"/></svg><svg style="position:absolute;left:1388px;top:53px" width="32" height="32" viewBox="0 0 32 32"><rect x="0" y="1" width="9" height="24" fill="#c4c4c4"/><path d="M0.6 1v24M8.4 1v24" stroke="#101010" stroke-width="1.3" stroke-dasharray="1.2 1"/><path d="M2 4h4a2 2 0 0 1 0 4h-3a2 2 0 0 0 0 4h3a2 2 0 0 1 0 4" fill="none" stroke="#f4f4f4" stroke-width="1.3"/><rect x="22" y="8" width="9" height="23" fill="#c4c4c4"/><path d="M22.6 8v23M30.4 8v23" stroke="#101010" stroke-width="1.3" stroke-dasharray="1.2 1"/><path d="M24 11h4a2 2 0 0 1 0 4h-3a2 2 0 0 0 0 4h3a2 2 0 0 1 0 4" fill="none" stroke="#f4f4f4" stroke-width="1.3"/><path d="M5 1 H20 Q25 2 26 9 L27 21 L31 24 L24 31 H19 Q14 28 13 20 L12 11 Q11 7 5 6 Z" fill="#1040e0" stroke="#101010" stroke-width="1.1"/><path d="M5 1 H20 Q25 2 26 9 L12.3 11 Q11 7 5 6 Z" fill="#1040e0" stroke="#101010" stroke-width="0.9"/><path d="M27 21 L31 24 L24 31 H19 Q14 28 13.5 22 Z" fill="#40a0ff" stroke="#101010" stroke-width="0.9"/><path d="M7 3 H19" stroke="#ffffff" stroke-opacity="0.35" stroke-width="1.5"/></svg><svg style="position:absolute;left:1428px;top:53px" width="32" height="32" viewBox="0 0 32 32"><rect x="0" y="1" width="9" height="24" fill="#c4c4c4"/><path d="M0.6 1v24M8.4 1v24" stroke="#101010" stroke-width="1.3" stroke-dasharray="1.2 1"/><path d="M2 4h4a2 2 0 0 1 0 4h-3a2 2 0 0 0 0 4h3a2 2 0 0 1 0 4" fill="none" stroke="#f4f4f4" stroke-width="1.3"/><rect x="22" y="8" width="9" height="23" fill="#c4c4c4"/><path d="M22.6 8v23M30.4 8v23" stroke="#101010" stroke-width="1.3" stroke-dasharray="1.2 1"/><path d="M24 11h4a2 2 0 0 1 0 4h-3a2 2 0 0 0 0 4h3a2 2 0 0 1 0 4" fill="none" stroke="#f4f4f4" stroke-width="1.3"/><path d="M5 1 H20 Q25 2 26 9 L27 21 L31 24 L24 31 H19 Q14 28 13 20 L12 11 Q11 7 5 6 Z" fill="#f0f020" stroke="#101010" stroke-width="1.1"/><path d="M5 1 H20 Q25 2 26 9 L12.3 11 Q11 7 5 6 Z" fill="#f0f020" stroke="#101010" stroke-width="0.9"/><path d="M27 21 L31 24 L24 31 H19 Q14 28 13.5 22 Z" fill="#f0f020" stroke="#101010" stroke-width="0.9"/><path d="M7 3 H19" stroke="#ffffff" stroke-opacity="0.35" stroke-width="1.5"/></svg><svg style="position:absolute;left:1467px;top:53px" width="32" height="32" viewBox="0 0 32 32"><rect x="0" y="1" width="9" height="24" fill="#c4c4c4"/><path d="M0.6 1v24M8.4 1v24" stroke="#101010" stroke-width="1.3" stroke-dasharray="1.2 1"/><path d="M2 4h4a2 2 0 0 1 0 4h-3a2 2 0 0 0 0 4h3a2 2 0 0 1 0 4" fill="none" stroke="#f4f4f4" stroke-width="1.3"/><rect x="22" y="8" width="9" height="23" fill="#c4c4c4"/><path d="M22.6 8v23M30.4 8v23" stroke="#101010" stroke-width="1.3" stroke-dasharray="1.2 1"/><path d="M24 11h4a2 2 0 0 1 0 4h-3a2 2 0 0 0 0 4h3a2 2 0 0 1 0 4" fill="none" stroke="#f4f4f4" stroke-width="1.3"/><path d="M5 1 H20 Q25 2 26 9 L27 21 L31 24 L24 31 H19 Q14 28 13 20 L12 11 Q11 7 5 6 Z" fill="#20e0f0" stroke="#101010" stroke-width="1.1"/><path d="M5 1 H20 Q25 2 26 9 L12.3 11 Q11 7 5 6 Z" fill="#20e0f0" stroke="#101010" stroke-width="0.9"/><path d="M27 21 L31 24 L24 31 H19 Q14 28 13.5 22 Z" fill="#20e0f0" stroke="#101010" stroke-width="0.9"/><path d="M7 3 H19" stroke="#ffffff" stroke-opacity="0.35" stroke-width="1.5"/></svg><svg style="position:absolute;left:1505px;top:53px" width="32" height="32" viewBox="0 0 32 32"><rect x="0" y="1" width="9" height="24" fill="#c4c4c4"/><path d="M0.6 1v24M8.4 1v24" stroke="#101010" stroke-width="1.3" stroke-dasharray="1.2 1"/><path d="M2 4h4a2 2 0 0 1 0 4h-3a2 2 0 0 0 0 4h3a2 2 0 0 1 0 4" fill="none" stroke="#f4f4f4" stroke-width="1.3"/><rect x="22" y="8" width="9" height="23" fill="#c4c4c4"/><path d="M22.6 8v23M30.4 8v23" stroke="#101010" stroke-width="1.3" stroke-dasharray="1.2 1"/><path d="M24 11h4a2 2 0 0 1 0 4h-3a2 2 0 0 0 0 4h3a2 2 0 0 1 0 4" fill="none" stroke="#f4f4f4" stroke-width="1.3"/><path d="M5 1 H20 Q25 2 26 9 L27 21 L31 24 L24 31 H19 Q14 28 13 20 L12 11 Q11 7 5 6 Z" fill="#a010d0" stroke="#101010" stroke-width="1.1"/><path d="M5 1 H20 Q25 2 26 9 L12.3 11 Q11 7 5 6 Z" fill="#a010d0" stroke="#101010" stroke-width="0.9"/><path d="M27 21 L31 24 L24 31 H19 Q14 28 13.5 22 Z" fill="#c020e0" stroke="#101010" stroke-width="0.9"/><path d="M7 3 H19" stroke="#ffffff" stroke-opacity="0.35" stroke-width="1.5"/></svg><svg style="position:absolute;left:1544px;top:53px" width="32" height="32" viewBox="0 0 32 32"><rect x="0" y="1" width="9" height="24" fill="#c4c4c4"/><path d="M0.6 1v24M8.4 1v24" stroke="#101010" stroke-width="1.3" stroke-dasharray="1.2 1"/><path d="M2 4h4a2 2 0 0 1 0 4h-3a2 2 0 0 0 0 4h3a2 2 0 0 1 0 4" fill="none" stroke="#f4f4f4" stroke-width="1.3"/><rect x="22" y="8" width="9" height="23" fill="#c4c4c4"/><path d="M22.6 8v23M30.4 8v23" stroke="#101010" stroke-width="1.3" stroke-dasharray="1.2 1"/><path d="M24 11h4a2 2 0 0 1 0 4h-3a2 2 0 0 0 0 4h3a2 2 0 0 1 0 4" fill="none" stroke="#f4f4f4" stroke-width="1.3"/><path d="M5 1 H20 Q25 2 26 9 L27 21 L31 24 L24 31 H19 Q14 28 13 20 L12 11 Q11 7 5 6 Z" fill="#10c040" stroke="#101010" stroke-width="1.1"/><path d="M5 1 H20 Q25 2 26 9 L12.3 11 Q11 7 5 6 Z" fill="#e81010" stroke="#101010" stroke-width="0.9"/><path d="M27 21 L31 24 L24 31 H19 Q14 28 13.5 22 Z" fill="#40a0ff" stroke="#101010" stroke-width="0.9"/><path d="M7 3 H19" stroke="#ffffff" stroke-opacity="0.35" stroke-width="1.5"/></svg><div style="position:absolute;left:0px;top:90px;width:1920px;height:4px;background:linear-gradient(#7a7a7a,#8c8c8c)"></div><div style="position:absolute;left:0px;top:94px;width:1920px;height:3px;background:#fdfdfd"></div><div style="position:absolute;left:0px;top:90px;width:2px;height:952px;background:#8a8a8a"></div><div style="position:absolute;left:2px;top:94px;width:3px;height:945px;background:#fdfdfd"></div><div style="position:absolute;left:5px;top:97px;width:1300px;height:57px;background:#7e7e7e"></div><div style="position:absolute;left:7px;top:98px;width:1296px;height:17px;background:linear-gradient(90deg,#e2eaf5,#eef3fa);border-radius:5px 5px 0 0"></div><div style="position:absolute;left:7px;top:115px;width:1296px;height:1px;background:#a6a6a6"></div><div style="position:absolute;left:7px;top:116px;width:1296px;height:36px;background:#ebebeb"></div><div style="position:absolute;left:12px;top:100.4px;white-space:nowrap;font-family:'Liberation Sans', sans-serif;font-size:12.5px;font-weight:bold;color:#3a3a3a;letter-spacing:0.247px;line-height:14.37px;">View</div><div style="position:absolute;left:9px;top:123px;width:200px;height:22px;background:#fff;border:1px solid #c8c8c8;box-sizing:border-box"></div><div style="position:absolute;left:13px;top:126.7px;white-space:nowrap;font-family:'Liberation Sans', sans-serif;font-size:14px;color:#000;letter-spacing:0.069px;line-height:16.1px;">Cyan saturation scale</div><svg style="position:absolute;left:195px;top:130px" width="11" height="8" viewBox="0 0 11 8"><path d="M1 1.5L5.5 6L10 1.5" fill="none" stroke="#444" stroke-width="1.1"/></svg><div style="position:absolute;left:216px;top:118px;width:1056px;height:27px;background:#f0f0f0;border-left:1px solid #a8a8a8;border-top:1px solid #a8a8a8;box-sizing:border-box"></div><div style="position:absolute;left:217.5px;top:118.81px;white-space:nowrap;font-family:'Liberation Sans', sans-serif;font-size:15px;font-weight:bold;color:#000;line-height:17.25px;letter-spacing:0.53px">Color Space: HDTV Rec709 , White Point: D65, EOTF:&nbsp; SDR, Power law (black compensation) w/gamma = 2.20, # of measures: 0 [03:03:16]</div><div style="position:absolute;left:1279px;top:121px;width:15px;height:11px;background:#ececec;border:1px solid #c4c4c4;box-sizing:border-box"></div><div style="position:absolute;left:1279px;top:133px;width:15px;height:11px;background:#ececec;border:1px solid #c4c4c4;box-sizing:border-box"></div><svg style="position:absolute;left:1282px;top:124px" width="9" height="5" viewBox="0 0 9 5"><path d="M0.5 4.5L4.5 0.5L8.5 4.5z" fill="#111"/></svg><svg style="position:absolute;left:1282px;top:136px" width="9" height="5" viewBox="0 0 9 5"><path d="M0.5 0.5L4.5 4.5L8.5 0.5z" fill="#111"/></svg><div style="position:absolute;left:1305px;top:97px;width:6px;height:57px;background:linear-gradient(90deg,#f6f6f6 0,#f6f6f6 1px,#858585 1px,#858585 3px,#fdfdfd 3px)"></div><div style="position:absolute;left:1311px;top:97px;width:306px;height:57px;background:#7e7e7e"></div><div style="position:absolute;left:1313px;top:98px;width:302px;height:17px;background:linear-gradient(90deg,#e2eaf5,#eef3fa);border-radius:5px 5px 0 0"></div><div style="position:absolute;left:1313px;top:115px;width:302px;height:1px;background:#a6a6a6"></div><div style="position:absolute;left:1313px;top:116px;width:302px;height:36px;background:#ebebeb"></div><div style="position:absolute;left:1318px;top:100.4px;white-space:nowrap;font-family:'Liberation Sans', sans-serif;font-size:12.5px;font-weight:bold;color:#3a3a3a;letter-spacing:0.525px;line-height:14.37px;">Sensor</div><div style="position:absolute;left:1316px;top:116.9px;white-space:nowrap;font-family:'Liberation Sans', sans-serif;font-size:13px;color:#000;letter-spacing:0.571px;line-height:14.95px;">Simulated sensor</div><div style="position:absolute;left:1317px;top:134.7px;white-space:nowrap;font-family:'Liberation Sans', sans-serif;font-size:13px;color:#000;letter-spacing:0.773px;line-height:14.95px;">Adaptive</div><svg style="position:absolute;left:1423px;top:135px" width="14" height="13" viewBox="0 0 14 13"><path d="M1 1L13 6.5L1 12z" fill="#60d040" stroke="#40a830" stroke-width="0.8"/></svg><svg style="position:absolute;left:1587px;top:132px" width="20" height="20" viewBox="0 0 20 20"><defs><linearGradient id="eg" x1="0" y1="0" x2="1" y2="1"><stop offset="0" stop-color="#ffffff"/><stop offset="1" stop-color="#90c0f0"/></linearGradient></defs><path d="M2 4.5l9.5-3.5v14.5l-9.5 3.5z" fill="url(#eg)" stroke="#1a3a90" stroke-width="2"/><path d="M4.5 10l2 3 3.5-5" fill="none" stroke="#d8a020" stroke-width="1.3"/><path d="M10 12l7-3" stroke="#3070c0" stroke-width="2.2"/><circle cx="17.5" cy="8.8" r="1.4" fill="#c04020"/></svg><div style="position:absolute;left:1617px;top:97px;width:4px;height:57px;background:linear-gradient(90deg,#f2f2f2,#fff,#f2f2f2)"></div><div style="position:absolute;left:1621px;top:97px;width:120px;height:57px;background:#7e7e7e"></div><div style="position:absolute;left:1623px;top:98px;width:116px;height:17px;background:linear-gradient(90deg,#e2eaf5,#eef3fa);border-radius:5px 5px 0 0"></div><div style="position:absolute;left:1623px;top:115px;width:116px;height:1px;background:#a6a6a6"></div><div style="position:absolute;left:1623px;top:116px;width:116px;height:36px;background:#ebebeb"></div><div style="position:absolute;left:1628px;top:100.4px;white-space:nowrap;font-family:'Liberation Sans', sans-serif;font-size:12.5px;font-weight:bold;color:#3a3a3a;letter-spacing:0.732px;line-height:14.37px;">Generator</div><div style="position:absolute;left:1625px;top:116.9px;white-space:nowrap;font-family:'Liberation Sans', sans-serif;font-size:13px;color:#000;letter-spacing:0.145px;line-height:14.95px;">DVD manual</div><svg style="position:absolute;left:1716px;top:132px" width="20" height="20" viewBox="0 0 20 20"><defs><linearGradient id="eg" x1="0" y1="0" x2="1" y2="1"><stop offset="0" stop-color="#ffffff"/><stop offset="1" stop-color="#90c0f0"/></linearGradient></defs><path d="M2 4.5l9.5-3.5v14.5l-9.5 3.5z" fill="url(#eg)" stroke="#1a3a90" stroke-width="2"/><path d="M4.5 10l2 3 3.5-5" fill="none" stroke="#d8a020" stroke-width="1.3"/><path d="M10 12l7-3" stroke="#3070c0" stroke-width="2.2"/><circle cx="17.5" cy="8.8" r="1.4" fill="#c04020"/></svg><div style="position:absolute;left:1741px;top:97px;width:4px;height:57px;background:linear-gradient(90deg,#f2f2f2,#fff,#f2f2f2)"></div><div style="position:absolute;left:1745px;top:97px;width:150px;height:57px;background:#7e7e7e"></div><div style="position:absolute;left:1747px;top:98px;width:146px;height:17px;background:linear-gradient(90deg,#e2eaf5,#eef3fa);border-radius:5px 5px 0 0"></div><div style="position:absolute;left:1747px;top:115px;width:146px;height:1px;background:#a6a6a6"></div><div style="position:absolute;left:1747px;top:116px;width:146px;height:36px;background:#ebebeb"></div><div style="position:absolute;left:1752px;top:100.4px;white-space:nowrap;font-family:'Liberation Sans', sans-serif;font-size:12.5px;font-weight:bold;color:#3a3a3a;letter-spacing:0.844px;line-height:14.37px;">Parameters</div><div style="position:absolute;left:1754px;top:119px;width:13px;height:13px;background:#fff;border:1px solid #333;border-radius:2px;box-sizing:border-box"></div><div style="position:absolute;left:1771px;top:119.0px;white-space:nowrap;font-family:'Liberation Sans', sans-serif;font-size:13px;color:#000;letter-spacing:0.378px;line-height:14.95px;">Reference</div><div style="position:absolute;left:1754px;top:136px;width:13px;height:13px;background:#f4f4f4;border:1px solid #c8c8c8;border-radius:2px;box-sizing:border-box"></div><div style="position:absolute;left:1771px;top:136.0px;white-space:nowrap;font-family:'Liberation Sans', sans-serif;font-size:13px;color:#8a8a8a;letter-spacing:0.446px;line-height:14.95px;">XYZ Adjustment</div><div style="position:absolute;left:2px;top:154px;width:1898px;height:2px;background:#f4f4f4"></div><div style="position:absolute;left:0px;top:155px;width:1900px;height:4px;background:linear-gradient(#7a7a7a,#8e8e8e)"></div><div style="position:absolute;left:2px;top:159px;width:1898px;height:3px;background:#fdfdfd"></div><div style="position:absolute;left:1896px;top:90px;width:5px;height:930px;background:#8a8a8a"></div><div style="position:absolute;left:1901px;top:90px;width:19px;height:950px;background:#f0f0f0"></div><div style="position:absolute;left:1909px;top:190px;width:2px;height:788px;background:#8a8a8a"></div><div style="position:absolute;left:1919px;top:90px;width:1px;height:950px;background:#fafafa"></div><div style="position:absolute;left:5px;top:162px;width:1804px;height:215px;background:#7e7e7e"></div><div style="position:absolute;left:6px;top:163px;width:1802px;height:213px;background:#00e000"></div><div style="position:absolute;left:7px;top:163px;width:1800px;height:212px;background:#f6f2f6"></div><div style="position:absolute;left:7px;top:163px;width:1800px;height:14px;background:linear-gradient(90deg,#e2eaf5,#eef3fa);border-radius:5px 5px 0 0"></div><div style="position:absolute;left:16px;top:165.88px;white-space:nowrap;font-family:'Liberation Sans', sans-serif;font-size:11px;font-weight:bold;color:#3a3a3a;letter-spacing:-0.007px;line-height:12.65px;">( Average dE: 1.49 [0.70,0.78,0.93] max: 1.95 [CIE2000] )</div><div style="position:absolute;left:8px;top:177px;width:1798px;height:198px;background:#ececec"></div><div style="position:absolute;left:8px;top:177px;width:1781px;height:1px;background:#6a6a6a"></div><div style="position:absolute;left:8px;top:178px;width:1781px;height:1px;background:#9a9a9a"></div><div style="position:absolute;left:8px;top:177px;width:2px;height:196px;background:#6a6a6a"></div><div style="position:absolute;left:10px;top:179px;width:53px;height:174px;background:#efefef"></div><div style="position:absolute;left:63px;top:179px;width:1px;height:174px;background:#6a6a6a"></div><div style="position:absolute;left:10px;top:182.69px;white-space:nowrap;font-family:'Liberation Sans', sans-serif;font-size:12px;font-weight:bold;color:#000;line-height:13.8px;"><div style="width:53px;text-align:center;letter-spacing:-0.3px">% Sat</div></div><div style="position:absolute;left:64px;top:179px;width:341px;height:21px;background:#efefef"></div><div style="position:absolute;left:64px;top:182.69px;white-space:nowrap;font-family:'Liberation Sans', sans-serif;font-size:12px;font-weight:bold;color:#000;line-height:13.8px;"><div style="width:341px;text-align:center;letter-spacing:-0.3px">0</div></div><div style="position:absolute;left:406px;top:179px;width:341px;height:21px;background:#bfeded"></div><div style="position:absolute;left:405px;top:179px;width:1px;height:22px;background:#6a6a6a"></div><div style="position:absolute;left:406px;top:179px;width:1px;height:21px;background:#fafafa"></div><div style="position:absolute;left:406px;top:182.69px;white-space:nowrap;font-family:'Liberation Sans', sans-serif;font-size:12px;font-weight:bold;color:#000;line-height:13.8px;"><div style="width:341px;text-align:center;letter-spacing:-0.3px">25</div></div><div style="position:absolute;left:748px;top:179px;width:340px;height:21px;background:#96ebef"></div><div style="position:absolute;left:747px;top:179px;width:1px;height:22px;background:#6a6a6a"></div><div style="position:absolute;left:748px;top:179px;width:1px;height:21px;background:#fafafa"></div><div style="position:absolute;left:748px;top:182.69px;white-space:nowrap;font-family:'Liberation Sans', sans-serif;font-size:12px;font-weight:bold;color:#000;line-height:13.8px;"><div style="width:340px;text-align:center;letter-spacing:-0.3px">50</div></div><div style="position:absolute;left:1089px;top:179px;width:340px;height:21px;background:#69e9ee"></div><div style="position:absolute;left:1088px;top:179px;width:1px;height:22px;background:#6a6a6a"></div><div style="position:absolute;left:1089px;top:179px;width:1px;height:21px;background:#fafafa"></div><div style="position:absolute;left:1089px;top:182.69px;white-space:nowrap;font-family:'Liberation Sans', sans-serif;font-size:12px;font-weight:bold;color:#000;line-height:13.8px;"><div style="width:340px;text-align:center;letter-spacing:-0.3px">75</div></div><div style="position:absolute;left:1430px;top:179px;width:340px;height:21px;background:#33eef0"></div><div style="position:absolute;left:1429px;top:179px;width:1px;height:22px;background:#6a6a6a"></div><div style="position:absolute;left:1430px;top:179px;width:1px;height:21px;background:#fafafa"></div><div style="position:absolute;left:1430px;top:182.69px;white-space:nowrap;font-family:'Liberation Sans', sans-serif;font-size:12px;font-weight:bold;color:#000;line-height:13.8px;"><div style="width:340px;text-align:center;letter-spacing:-0.3px">100</div></div><div style="position:absolute;left:10px;top:200px;width:1761px;height:1px;background:#6a6a6a"></div><div style="position:absolute;left:64px;top:201px;width:1706px;height:24px;background:#ffffff"></div><div style="position:absolute;left:10px;top:201px;width:53px;height:1px;background:#fafafa"></div><div style="position:absolute;left:10px;top:225px;width:53px;height:1px;background:#6a6a6a"></div><div style="position:absolute;left:64px;top:225px;width:1706px;height:1px;background:#c4c4c4"></div><div style="position:absolute;left:10px;top:205.69px;white-space:nowrap;font-family:'Liberation Sans', sans-serif;font-size:12px;font-weight:bold;color:#000;line-height:13.8px;"><div style="width:53px;text-align:center;letter-spacing:-0.45px">x</div></div><div style="position:absolute;left:63px;top:206.6px;white-space:nowrap;font-family:'Liberation Sans', sans-serif;font-size:12.5px;color:#000;line-height:14.37px;"><div style="width:341px;text-align:right;letter-spacing:-0.55px">0.3140</div></div><div style="position:absolute;left:405px;top:201px;width:1px;height:25px;background:#c4c4c4"></div><div style="position:absolute;left:405px;top:206.6px;white-space:nowrap;font-family:'Liberation Sans', sans-serif;font-size:12.5px;color:#000;line-height:14.37px;"><div style="width:341px;text-align:right;letter-spacing:-0.55px">0.2860</div></div><div style="position:absolute;left:747px;top:201px;width:1px;height:25px;background:#c4c4c4"></div><div style="position:absolute;left:747px;top:206.6px;white-space:nowrap;font-family:'Liberation Sans', sans-serif;font-size:12.5px;color:#000;line-height:14.37px;"><div style="width:340px;text-align:right;letter-spacing:-0.55px">0.2647</div></div><div style="position:absolute;left:1088px;top:201px;width:1px;height:25px;background:#c4c4c4"></div><div style="position:absolute;left:1088px;top:206.6px;white-space:nowrap;font-family:'Liberation Sans', sans-serif;font-size:12.5px;color:#000;line-height:14.37px;"><div style="width:340px;text-align:right;letter-spacing:-0.55px">0.2433</div></div><div style="position:absolute;left:1429px;top:201px;width:1px;height:25px;background:#c4c4c4"></div><div style="position:absolute;left:1429px;top:206.6px;white-space:nowrap;font-family:'Liberation Sans', sans-serif;font-size:12.5px;color:#000;line-height:14.37px;"><div style="width:340px;text-align:right;letter-spacing:-0.55px">0.2193</div></div><div style="position:absolute;left:64px;top:226px;width:1706px;height:24px;background:#ffffff"></div><div style="position:absolute;left:10px;top:226px;width:53px;height:1px;background:#fafafa"></div><div style="position:absolute;left:10px;top:250px;width:53px;height:1px;background:#6a6a6a"></div><div style="position:absolute;left:64px;top:250px;width:1706px;height:1px;background:#c4c4c4"></div><div style="position:absolute;left:10px;top:230.69px;white-space:nowrap;font-family:'Liberation Sans', sans-serif;font-size:12px;font-weight:bold;color:#000;line-height:13.8px;"><div style="width:53px;text-align:center;letter-spacing:-0.45px">y</div></div><div style="position:absolute;left:63px;top:231.6px;white-space:nowrap;font-family:'Liberation Sans', sans-serif;font-size:12.5px;color:#000;line-height:14.37px;"><div style="width:341px;text-align:right;letter-spacing:-0.55px">0.3291</div></div><div style="position:absolute;left:405px;top:226px;width:1px;height:25px;background:#c4c4c4"></div><div style="position:absolute;left:405px;top:231.6px;white-space:nowrap;font-family:'Liberation Sans', sans-serif;font-size:12.5px;color:#000;line-height:14.37px;"><div style="width:341px;text-align:right;letter-spacing:-0.55px">0.3246</div></div><div style="position:absolute;left:747px;top:226px;width:1px;height:25px;background:#c4c4c4"></div><div style="position:absolute;left:747px;top:231.6px;white-space:nowrap;font-family:'Liberation Sans', sans-serif;font-size:12.5px;color:#000;line-height:14.37px;"><div style="width:340px;text-align:right;letter-spacing:-0.55px">0.3250</div></div><div style="position:absolute;left:1088px;top:226px;width:1px;height:25px;background:#c4c4c4"></div><div style="position:absolute;left:1088px;top:231.6px;white-space:nowrap;font-family:'Liberation Sans', sans-serif;font-size:12.5px;color:#000;line-height:14.37px;"><div style="width:340px;text-align:right;letter-spacing:-0.55px">0.3248</div></div><div style="position:absolute;left:1429px;top:226px;width:1px;height:25px;background:#c4c4c4"></div><div style="position:absolute;left:1429px;top:231.6px;white-space:nowrap;font-family:'Liberation Sans', sans-serif;font-size:12.5px;color:#000;line-height:14.37px;"><div style="width:340px;text-align:right;letter-spacing:-0.55px">0.3258</div></div><div style="position:absolute;left:64px;top:251px;width:1706px;height:24px;background:#ffffff"></div><div style="position:absolute;left:10px;top:251px;width:53px;height:1px;background:#fafafa"></div><div style="position:absolute;left:10px;top:275px;width:53px;height:1px;background:#6a6a6a"></div><div style="position:absolute;left:64px;top:275px;width:1706px;height:1px;background:#c4c4c4"></div><div style="position:absolute;left:10px;top:255.69px;white-space:nowrap;font-family:'Liberation Sans', sans-serif;font-size:12px;font-weight:bold;color:#000;line-height:13.8px;"><div style="width:53px;text-align:center;letter-spacing:-0.45px">Y</div></div><div style="position:absolute;left:63px;top:256.6px;white-space:nowrap;font-family:'Liberation Sans', sans-serif;font-size:12.5px;color:#000;line-height:14.37px;"><div style="width:341px;text-align:right;letter-spacing:-0.55px">168.993</div></div><div style="position:absolute;left:405px;top:251px;width:1px;height:25px;background:#c4c4c4"></div><div style="position:absolute;left:405px;top:256.6px;white-space:nowrap;font-family:'Liberation Sans', sans-serif;font-size:12.5px;color:#000;line-height:14.37px;"><div style="width:341px;text-align:right;letter-spacing:-0.55px">169.375</div></div><div style="position:absolute;left:747px;top:251px;width:1px;height:25px;background:#c4c4c4"></div><div style="position:absolute;left:747px;top:256.6px;white-space:nowrap;font-family:'Liberation Sans', sans-serif;font-size:12.5px;color:#000;line-height:14.37px;"><div style="width:340px;text-align:right;letter-spacing:-0.55px">169.383</div></div><div style="position:absolute;left:1088px;top:251px;width:1px;height:25px;background:#c4c4c4"></div><div style="position:absolute;left:1088px;top:256.6px;white-space:nowrap;font-family:'Liberation Sans', sans-serif;font-size:12.5px;color:#000;line-height:14.37px;"><div style="width:340px;text-align:right;letter-spacing:-0.55px">168.593</div></div><div style="position:absolute;left:1429px;top:251px;width:1px;height:25px;background:#c4c4c4"></div><div style="position:absolute;left:1429px;top:256.6px;white-space:nowrap;font-family:'Liberation Sans', sans-serif;font-size:12.5px;color:#000;line-height:14.37px;"><div style="width:340px;text-align:right;letter-spacing:-0.55px">169.859</div></div><div style="position:absolute;left:64px;top:276px;width:1706px;height:24px;background:#aefba6"></div><div style="position:absolute;left:10px;top:276px;width:53px;height:1px;background:#fafafa"></div><div style="position:absolute;left:10px;top:300px;width:53px;height:1px;background:#6a6a6a"></div><div style="position:absolute;left:64px;top:300px;width:1706px;height:1px;background:#c4c4c4"></div><div style="position:absolute;left:10px;top:280.69px;white-space:nowrap;font-family:'Liberation Sans', sans-serif;font-size:12px;font-weight:bold;color:#000;line-height:13.8px;"><div style="width:53px;text-align:center;letter-spacing:-0.45px">Delta E</div></div><div style="position:absolute;left:63px;top:281.69px;white-space:nowrap;font-family:'Liberation Sans', sans-serif;font-size:12px;font-weight:bold;color:#000;line-height:13.8px;"><div style="width:341px;text-align:right;letter-spacing:-0.2px">1.1</div></div><div style="position:absolute;left:405px;top:276px;width:1px;height:25px;background:#c4c4c4"></div><div style="position:absolute;left:405px;top:281.69px;white-space:nowrap;font-family:'Liberation Sans', sans-serif;font-size:12px;font-weight:bold;color:#000;line-height:13.8px;"><div style="width:341px;text-align:right;letter-spacing:-0.2px">1.9</div></div><div style="position:absolute;left:747px;top:276px;width:1px;height:25px;background:#c4c4c4"></div><div style="position:absolute;left:747px;top:281.69px;white-space:nowrap;font-family:'Liberation Sans', sans-serif;font-size:12px;font-weight:bold;color:#000;line-height:13.8px;"><div style="width:340px;text-align:right;letter-spacing:-0.2px">1.6</div></div><div style="position:absolute;left:1088px;top:276px;width:1px;height:25px;background:#c4c4c4"></div><div style="position:absolute;left:1088px;top:281.69px;white-space:nowrap;font-family:'Liberation Sans', sans-serif;font-size:12px;font-weight:bold;color:#000;line-height:13.8px;"><div style="width:340px;text-align:right;letter-spacing:-0.2px">1.4</div></div><div style="position:absolute;left:1429px;top:276px;width:1px;height:25px;background:#c4c4c4"></div><div style="position:absolute;left:1429px;top:281.69px;white-space:nowrap;font-family:'Liberation Sans', sans-serif;font-size:12px;font-weight:bold;color:#000;line-height:13.8px;"><div style="width:340px;text-align:right;letter-spacing:-0.2px">1.4</div></div><div style="position:absolute;left:64px;top:301px;width:1706px;height:24px;background:#efefef"></div><div style="position:absolute;left:10px;top:301px;width:53px;height:1px;background:#fafafa"></div><div style="position:absolute;left:10px;top:325px;width:53px;height:1px;background:#6a6a6a"></div><div style="position:absolute;left:64px;top:325px;width:1706px;height:1px;background:#c4c4c4"></div><div style="position:absolute;left:10px;top:305.69px;white-space:nowrap;font-family:'Liberation Sans', sans-serif;font-size:12px;font-weight:bold;color:#000;line-height:13.8px;"><div style="width:53px;text-align:center;letter-spacing:-0.45px">delta xy</div></div><div style="position:absolute;left:63px;top:306.6px;white-space:nowrap;font-family:'Liberation Sans', sans-serif;font-size:12.5px;color:#000;line-height:14.37px;"><div style="width:341px;text-align:right;letter-spacing:-0.55px">0.0013</div></div><div style="position:absolute;left:405px;top:301px;width:1px;height:25px;background:#c4c4c4"></div><div style="position:absolute;left:405px;top:306.6px;white-space:nowrap;font-family:'Liberation Sans', sans-serif;font-size:12.5px;color:#000;line-height:14.37px;"><div style="width:341px;text-align:right;letter-spacing:-0.55px">0.0064</div></div><div style="position:absolute;left:747px;top:301px;width:1px;height:25px;background:#c4c4c4"></div><div style="position:absolute;left:747px;top:306.6px;white-space:nowrap;font-family:'Liberation Sans', sans-serif;font-size:12.5px;color:#000;line-height:14.37px;"><div style="width:340px;text-align:right;letter-spacing:-0.55px">0.0058</div></div><div style="position:absolute;left:1088px;top:301px;width:1px;height:25px;background:#c4c4c4"></div><div style="position:absolute;left:1088px;top:306.6px;white-space:nowrap;font-family:'Liberation Sans', sans-serif;font-size:12.5px;color:#000;line-height:14.37px;"><div style="width:340px;text-align:right;letter-spacing:-0.55px">0.0053</div></div><div style="position:absolute;left:1429px;top:301px;width:1px;height:25px;background:#c4c4c4"></div><div style="position:absolute;left:1429px;top:306.6px;white-space:nowrap;font-family:'Liberation Sans', sans-serif;font-size:12.5px;color:#000;line-height:14.37px;"><div style="width:340px;text-align:right;letter-spacing:-0.55px">0.0061</div></div><div style="position:absolute;left:64px;top:326px;width:1706px;height:24px;background:#dfdfdf"></div><div style="position:absolute;left:10px;top:326px;width:53px;height:1px;background:#fafafa"></div><div style="position:absolute;left:10px;top:350px;width:53px;height:1px;background:#6a6a6a"></div><div style="position:absolute;left:64px;top:350px;width:1706px;height:1px;background:#c4c4c4"></div><div style="position:absolute;left:10px;top:330.69px;white-space:nowrap;font-family:'Liberation Sans', sans-serif;font-size:12px;font-weight:bold;color:#000;line-height:13.8px;"><div style="width:53px;text-align:center;letter-spacing:-0.45px">delta L</div></div><div style="position:absolute;left:63px;top:331.6px;white-space:nowrap;font-family:'Liberation Sans', sans-serif;font-size:12.5px;color:#000;line-height:14.37px;"><div style="width:341px;text-align:right;letter-spacing:-0.55px">+2.8 %</div></div><div style="position:absolute;left:405px;top:326px;width:1px;height:25px;background:#c4c4c4"></div><div style="position:absolute;left:405px;top:331.6px;white-space:nowrap;font-family:'Liberation Sans', sans-serif;font-size:12.5px;color:#000;line-height:14.37px;"><div style="width:341px;text-align:right;letter-spacing:-0.55px">+2.9 %</div></div><div style="position:absolute;left:747px;top:326px;width:1px;height:25px;background:#c4c4c4"></div><div style="position:absolute;left:747px;top:331.6px;white-space:nowrap;font-family:'Liberation Sans', sans-serif;font-size:12.5px;color:#000;line-height:14.37px;"><div style="width:340px;text-align:right;letter-spacing:-0.55px">+3.6 %</div></div><div style="position:absolute;left:1088px;top:326px;width:1px;height:25px;background:#c4c4c4"></div><div style="position:absolute;left:1088px;top:331.6px;white-space:nowrap;font-family:'Liberation Sans', sans-serif;font-size:12.5px;color:#000;line-height:14.37px;"><div style="width:340px;text-align:right;letter-spacing:-0.55px">+2.7 %</div></div><div style="position:absolute;left:1429px;top:326px;width:1px;height:25px;background:#c4c4c4"></div><div style="position:absolute;left:1429px;top:331.6px;white-space:nowrap;font-family:'Liberation Sans', sans-serif;font-size:12.5px;color:#000;line-height:14.37px;"><div style="width:340px;text-align:right;letter-spacing:-0.55px">+3.9 %</div></div><div style="position:absolute;left:64px;top:351px;width:1706px;height:4px;background:#efefef"></div><div style="position:absolute;left:10px;top:351px;width:53px;height:4px;background:#efefef"></div><div style="position:absolute;left:63px;top:351px;width:1px;height:4px;background:#6a6a6a"></div><div style="position:absolute;left:405px;top:351px;width:1px;height:4px;background:#c4c4c4"></div><div style="position:absolute;left:747px;top:351px;width:1px;height:4px;background:#c4c4c4"></div><div style="position:absolute;left:1088px;top:351px;width:1px;height:4px;background:#c4c4c4"></div><div style="position:absolute;left:1429px;top:351px;width:1px;height:4px;background:#c4c4c4"></div><div style="position:absolute;left:10px;top:356px;width:1761px;height:17px;background:#f0f0f0"></div><svg style="position:absolute;left:13px;top:359px" width="9" height="11" viewBox="0 0 9 11"><path d="M8 0.5L1 5.5L8 10.5z" fill="#a8a8a8"/></svg><svg style="position:absolute;left:1759px;top:359px" width="9" height="11" viewBox="0 0 9 11"><path d="M1 0.5L8 5.5L1 10.5z" fill="#a8a8a8"/></svg><div style="position:absolute;left:1771px;top:179px;width:18px;height:194px;background:#f0f0f0"></div><div style="position:absolute;left:1779px;top:195px;width:2px;height:140px;background:#8a8a8a"></div><div style="position:absolute;left:1789px;top:177px;width:18px;height:2px;background:#f6f6f6"></div><div style="position:absolute;left:1790px;top:179px;width:16px;height:1px;background:#00e000"></div><div style="position:absolute;left:1790px;top:180px;width:16px;height:196px;background:#e9e9e9"></div><div style="position:absolute;left:7px;top:373px;width:1800px;height:2px;background:#f4f0f4"></div><div style="position:absolute;left:1809px;top:159px;width:91px;height:221px;background:#8a8a8a"></div><div style="position:absolute;left:1809px;top:159px;width:4px;height:218px;background:linear-gradient(90deg,#f0f0f0,#fff,#f0f0f0)"></div><div style="position:absolute;left:1813px;top:162px;width:82px;height:101px;background:#7e7e7e"></div><div style="position:absolute;left:1815px;top:163px;width:78px;height:17px;background:linear-gradient(90deg,#e2eaf5,#eef3fa);border-radius:5px 5px 0 0"></div><div style="position:absolute;left:1815px;top:180px;width:78px;height:1px;background:#a6a6a6"></div><div style="position:absolute;left:1815px;top:181px;width:78px;height:80px;background:#ebebeb"></div><div style="position:absolute;left:1820px;top:165.4px;white-space:nowrap;font-family:'Liberation Sans', sans-serif;font-size:12.5px;font-weight:bold;color:#3a3a3a;letter-spacing:0.423px;line-height:14.37px;">Display</div><div style="position:absolute;left:1822px;top:182px;width:13px;height:13px;background:#f6f6f6;border:1px solid #cfcfcf;border-radius:50%;box-sizing:border-box"></div><div style="position:absolute;left:1839.5px;top:181.3px;white-space:nowrap;font-family:'Liberation Sans', sans-serif;font-size:12.5px;color:#8c8c8c;line-height:14.37px;">Sensor</div><div style="position:absolute;left:1822px;top:197.5px;width:13px;height:13px;background:#f4f4f4;border:1px solid #333;border-radius:50%;box-sizing:border-box"></div><div style="position:absolute;left:1839.5px;top:196.8px;white-space:nowrap;font-family:'Liberation Sans', sans-serif;font-size:12.5px;color:#000;line-height:14.37px;">RGB</div><div style="position:absolute;left:1822px;top:213.5px;width:13px;height:13px;background:#f4f4f4;border:1px solid #333;border-radius:50%;box-sizing:border-box"></div><div style="position:absolute;left:1839.5px;top:212.8px;white-space:nowrap;font-family:'Liberation Sans', sans-serif;font-size:12.5px;color:#000;line-height:14.37px;">XYZ</div><div style="position:absolute;left:1822px;top:229.5px;width:13px;height:13px;background:#f4f4f4;border:1px solid #333;border-radius:50%;box-sizing:border-box"></div><div style="position:absolute;left:1839.5px;top:228.8px;white-space:nowrap;font-family:'Liberation Sans', sans-serif;font-size:12.5px;color:#000;line-height:14.37px;">xyz</div><div style="position:absolute;left:1822px;top:245px;width:13px;height:13px;background:#fff;border:3.5px solid #005fb8;border-radius:50%;box-sizing:border-box"></div><div style="position:absolute;left:1839.5px;top:244.3px;white-space:nowrap;font-family:'Liberation Sans', sans-serif;font-size:12.5px;color:#000;line-height:14.37px;">xyY</div><div style="position:absolute;left:1813px;top:264px;width:82px;height:30px;background:linear-gradient(#f2f2f2,#e8e8e8);border-top:1px solid #fafafa;border-bottom:1px solid #9a9a9a;box-sizing:border-box"></div><div style="position:absolute;left:1863.5px;top:272.31px;white-space:nowrap;font-family:'Liberation Sans', sans-serif;font-size:14px;color:#000;line-height:16.1px;">Go</div><div style="position:absolute;left:1813px;top:294px;width:82px;height:30px;background:linear-gradient(#f2f2f2,#e8e8e8);border-top:1px solid #fafafa;border-bottom:1px solid #9a9a9a;box-sizing:border-box"></div><div style="position:absolute;left:1851px;top:302.31px;white-space:nowrap;font-family:'Liberation Sans', sans-serif;font-size:14px;color:#000;line-height:16.1px;">Delete</div><div style="position:absolute;left:1813px;top:324px;width:82px;height:30px;background:linear-gradient(#f2f2f2,#e8e8e8);border-top:1px solid #fafafa;border-bottom:1px solid #9a9a9a;box-sizing:border-box"></div><div style="position:absolute;left:1858px;top:332.31px;white-space:nowrap;font-family:'Liberation Sans', sans-serif;font-size:14px;color:#000;line-height:16.1px;">Refs</div><svg style="position:absolute;left:1817px;top:266px" width="32" height="26" viewBox="0 0 32 26"><rect x="0" y="1" width="9" height="24" fill="#c4c4c4"/><path d="M0.6 1v24M8.4 1v24" stroke="#101010" stroke-width="1.3" stroke-dasharray="1.2 1"/><path d="M2 4h4a2 2 0 0 1 0 4h-3a2 2 0 0 0 0 4h3a2 2 0 0 1 0 4" fill="none" stroke="#f4f4f4" stroke-width="1.3"/><rect x="22" y="8" width="9" height="23" fill="#c4c4c4"/><path d="M22.6 8v23M30.4 8v23" stroke="#101010" stroke-width="1.3" stroke-dasharray="1.2 1"/><path d="M24 11h4a2 2 0 0 1 0 4h-3a2 2 0 0 0 0 4h3a2 2 0 0 1 0 4" fill="none" stroke="#f4f4f4" stroke-width="1.3"/><path d="M5 1 H20 Q25 2 26 9 L27 21 L31 24 L24 31 H19 Q14 28 13 20 L12 11 Q11 7 5 6 Z" fill="#30e0f0" stroke="#101010" stroke-width="1.1"/><path d="M5 1 H20 Q25 2 26 9 L12.3 11 Q11 7 5 6 Z" fill="#30e0f0" stroke="#101010" stroke-width="0.9"/><path d="M27 21 L31 24 L24 31 H19 Q14 28 13.5 22 Z" fill="#30e0f0" stroke="#101010" stroke-width="0.9"/><path d="M7 3 H19" stroke="#ffffff" stroke-opacity="0.35" stroke-width="1.5"/></svg><svg style="position:absolute;left:1819px;top:296px" width="28" height="27" viewBox="0 0 28 27"><path d="M1 3c8-4 18-4 26 0l-4 21c-5 3-13 3-18 0z" fill="#a8d8f8" stroke="#5090c0"/><ellipse cx="14" cy="4" rx="13" ry="3" fill="#d8f0ff" stroke="#5090c0"/><path d="M9 13a5 5 0 0 1 9-2M19 15a5 5 0 0 1-9 2" fill="none" stroke="#20a020" stroke-width="2.5"/></svg><svg style="position:absolute;left:1818px;top:330px" width="33" height="21" viewBox="0 0 33 21"><path d="M0 21V10l2-2 3 3 2-7 3 5 3 2 3-12 4 4 2 6 3 3 4 0 3 2v7z" fill="#ffff00"/><rect x="0" y="10" width="3" height="11" fill="#e000e0"/><rect x="3" y="6" width="4" height="15" fill="#0000ff"/><rect x="7" y="9" width="3" height="12" fill="#00ffff"/><rect x="10" y="10" width="4" height="11" fill="#00ff00"/><rect x="14" y="1" width="6" height="20" fill="#ffff00"/><rect x="20" y="5" width="4" height="16" fill="#800000"/><rect x="24" y="10" width="9" height="11" fill="#ff0000"/></svg><div style="position:absolute;left:1819px;top:361px;width:12px;height:12px;background:#f4f4f4;border:1px solid #555;border-radius:2px;box-sizing:border-box"></div><div style="position:absolute;left:1835px;top:360.31px;white-space:nowrap;font-family:'Liberation Sans', sans-serif;font-size:14px;color:#000;line-height:16.1px;">Edit</div><div style="position:absolute;left:2px;top:376px;width:1807px;height:8px;background:linear-gradient(#f4f4f4 0,#f4f4f4 3px,#7a7a7a 3px,#8e8e8e 7px,#fdfdfd 7px)"></div><div style="position:absolute;left:2px;top:384px;width:1898px;height:3px;background:#fdfdfd"></div><div style="position:absolute;left:5px;top:387px;width:378px;height:630px;background:#7e7e7e"></div><div style="position:absolute;left:7px;top:388px;width:374px;height:17px;background:linear-gradient(90deg,#e2eaf5,#eef3fa);border-radius:5px 5px 0 0"></div><div style="position:absolute;left:7px;top:405px;width:374px;height:1px;background:#a6a6a6"></div><div style="position:absolute;left:7px;top:406px;width:374px;height:609px;background:#ebebeb"></div><div style="position:absolute;left:12px;top:390.4px;white-space:nowrap;font-family:'Liberation Sans', sans-serif;font-size:12.5px;font-weight:bold;color:#3a3a3a;letter-spacing:0.558px;line-height:14.37px;">Selected color</div><div style="position:absolute;left:383px;top:387px;width:2px;height:630px;background:#f8f8f8"></div><div style="position:absolute;left:385px;top:383px;width:3px;height:638px;background:#8a8a8a"></div><div style="position:absolute;left:388px;top:387px;width:3px;height:630px;background:#fdfdfd"></div><div style="position:absolute;left:14px;top:408px;width:113px;height:16px;background:#efefef"></div><div style="position:absolute;left:18px;top:409.0px;white-space:nowrap;font-family:'Liberation Sans', sans-serif;font-size:13px;color:#000;letter-spacing:-0.040px;line-height:14.95px;">RGB Levels</div><div style="position:absolute;left:230px;top:407px;width:127px;height:14px;background:#efefef"></div><div style="position:absolute;left:241px;top:407.7px;white-space:nowrap;font-family:'Liberation Sans', sans-serif;font-size:13px;color:#000;letter-spacing:0.533px;line-height:14.95px;">Current Measure</div><div style="position:absolute;left:14px;top:433px;width:200px;height:87px;background:#efefef"></div><div style="position:absolute;left:16px;top:532px;width:192px;height:75px;background:#efefef"></div><div style="position:absolute;left:14px;top:477px;width:200px;height:1px;background:repeating-linear-gradient(90deg,#808080 0,#808080 3px,transparent 3px,transparent 6px)"></div><div style="position:absolute;left:25.5px;top:494.5px;white-space:nowrap;font-family:'Liberation Serif', serif;font-size:12px;font-weight:bold;color:#1a1a2a;line-height:14px;">0.0%</div><svg style="position:absolute;left:14px;top:508px" width="50" height="6" viewBox="0 0 50 6"><path d="M2 6 Q6 2 15 1 H34 Q44 2 48 6z" fill="#a00000" stroke="#000" stroke-width="0.8"/></svg><div style="position:absolute;left:75.5px;top:494.5px;white-space:nowrap;font-family:'Liberation Serif', serif;font-size:12px;font-weight:bold;color:#1a1a2a;line-height:14px;">0.0%</div><svg style="position:absolute;left:64px;top:508px" width="50" height="6" viewBox="0 0 50 6"><path d="M2 6 Q6 2 15 1 H34 Q44 2 48 6z" fill="#00a000" stroke="#000" stroke-width="0.8"/></svg><div style="position:absolute;left:125.5px;top:494.5px;white-space:nowrap;font-family:'Liberation Serif', serif;font-size:12px;font-weight:bold;color:#1a1a2a;line-height:14px;">0.0%</div><svg style="position:absolute;left:114px;top:508px" width="50" height="6" viewBox="0 0 50 6"><path d="M2 6 Q6 2 15 1 H34 Q44 2 48 6z" fill="#0000a0" stroke="#000" stroke-width="0.8"/></svg><div style="position:absolute;left:172.6609375px;top:494.5px;white-space:nowrap;font-family:'Liberation Serif', serif;font-size:12px;font-weight:bold;color:#1a1a2a;line-height:14px;">dE 0.0</div><svg style="position:absolute;left:164px;top:508px" width="50" height="6" viewBox="0 0 50 6"><path d="M2 6 Q6 2 15 1 H34 Q44 2 48 6z" fill="#c08000" stroke="#000" stroke-width="0.8"/></svg><div style="position:absolute;left:14px;top:513px;width:200px;height:5px;background:#000"></div><div style="position:absolute;left:35px;top:534.0px;white-space:nowrap;font-family:'Liberation Sans', sans-serif;font-size:13px;font-weight:bold;color:#222;letter-spacing:0.709px;line-height:14.95px;">Measure</div><div style="position:absolute;left:127px;top:534.0px;white-space:nowrap;font-family:'Liberation Sans', sans-serif;font-size:13px;font-weight:bold;color:#222;letter-spacing:0.267px;line-height:14.95px;">Reference</div><div style="position:absolute;left:16px;top:623px;width:43px;height:14px;background:#efefef"></div><div style="position:absolute;left:18px;top:622.5px;white-space:nowrap;font-family:'Liberation Sans', sans-serif;font-size:13px;color:#000;letter-spacing:0.774px;line-height:14.95px;">Target</div><div style="position:absolute;left:50px;top:638px;width:116px;height:89px;background:conic-gradient(from 0deg at 50% 50%, #40ff00 0deg,#ffc800 52deg,#ff0000 90deg,#ff0090 128deg,#8000c0 180deg,#0000ff 232deg,#0088a0 270deg,#00ff80 308deg,#40ff00 360deg);border:1px solid #000;box-sizing:border-box"></div><div style="position:absolute;left:67px;top:651px;width:82px;height:63px;background:#000;border:1px solid #fff;border-radius:7px;box-sizing:border-box"></div><svg style="position:absolute;left:50px;top:638px" width="116" height="89" viewBox="0 0 116 89"><ellipse cx="58.3" cy="43.4" rx="20.5" ry="15.8" fill="none" stroke="#fff" stroke-width="1" stroke-dasharray="2.5 2.5"/><path d="M15 44.2h92" stroke="#fff" stroke-width="1" stroke-dasharray="3 2"/><path d="M58.3 13v63" stroke="#fff" stroke-width="1" stroke-dasharray="3 2"/><path d="M14 44.2h3M104 44.2h3" stroke="#000" stroke-width="1"/></svg><div style="position:absolute;left:220px;top:430px;width:153px;height:577px;background:#7a7a7a"></div><div style="position:absolute;left:221px;top:432px;width:152px;height:575px;background:#efefef"></div><div style="position:absolute;left:275px;top:432px;width:80px;height:22px;background:#ffffff"></div><div style="position:absolute;left:275px;top:454px;width:80px;height:1px;background:#c4c4c4"></div><div style="position:absolute;left:222px;top:432px;width:52px;height:1px;background:#fafafa"></div><div style="position:absolute;left:222px;top:454px;width:52px;height:1px;background:#6a6a6a"></div><div style="position:absolute;left:222px;top:436.69px;white-space:nowrap;font-family:'Liberation Sans', sans-serif;font-size:12px;font-weight:bold;color:#000;line-height:13.8px;"><div style="width:52px;text-align:center;letter-spacing:-0.4px">Y cd/m&sup2;</div></div><div style="position:absolute;left:275px;top:455px;width:80px;height:22px;background:#ffffff"></div><div style="position:absolute;left:275px;top:477px;width:80px;height:1px;background:#c4c4c4"></div><div style="position:absolute;left:222px;top:455px;width:52px;height:1px;background:#fafafa"></div><div style="position:absolute;left:222px;top:477px;width:52px;height:1px;background:#6a6a6a"></div><div style="position:absolute;left:222px;top:459.69px;white-space:nowrap;font-family:'Liberation Sans', sans-serif;font-size:12px;font-weight:bold;color:#000;line-height:13.8px;"><div style="width:52px;text-align:center;letter-spacing:-0.4px">Y ftL</div></div><div style="position:absolute;left:275px;top:478px;width:80px;height:22px;background:#ffffff"></div><div style="position:absolute;left:275px;top:500px;width:80px;height:1px;background:#c4c4c4"></div><div style="position:absolute;left:222px;top:478px;width:52px;height:1px;background:#fafafa"></div><div style="position:absolute;left:222px;top:500px;width:52px;height:1px;background:#6a6a6a"></div><div style="position:absolute;left:222px;top:482.69px;white-space:nowrap;font-family:'Liberation Sans', sans-serif;font-size:12px;font-weight:bold;color:#000;line-height:13.8px;"><div style="width:52px;text-align:center;letter-spacing:-0.4px">T&deg;</div></div><div style="position:absolute;left:275px;top:501px;width:80px;height:22px;background:#dcdcdc"></div><div style="position:absolute;left:275px;top:523px;width:80px;height:1px;background:#c4c4c4"></div><div style="position:absolute;left:222px;top:501px;width:52px;height:1px;background:#fafafa"></div><div style="position:absolute;left:222px;top:523px;width:52px;height:1px;background:#6a6a6a"></div><div style="position:absolute;left:222px;top:505.69px;white-space:nowrap;font-family:'Liberation Sans', sans-serif;font-size:12px;font-weight:bold;color:#000;line-height:13.8px;"><div style="width:52px;text-align:center;letter-spacing:-0.4px">X</div></div><div style="position:absolute;left:275px;top:524px;width:80px;height:22px;background:#dcdcdc"></div><div style="position:absolute;left:275px;top:546px;width:80px;height:1px;background:#c4c4c4"></div><div style="position:absolute;left:222px;top:524px;width:52px;height:1px;background:#fafafa"></div><div style="position:absolute;left:222px;top:546px;width:52px;height:1px;background:#6a6a6a"></div><div style="position:absolute;left:222px;top:528.69px;white-space:nowrap;font-family:'Liberation Sans', sans-serif;font-size:12px;font-weight:bold;color:#000;line-height:13.8px;"><div style="width:52px;text-align:center;letter-spacing:-0.4px">Y</div></div><div style="position:absolute;left:275px;top:547px;width:80px;height:22px;background:#dcdcdc"></div><div style="position:absolute;left:275px;top:569px;width:80px;height:1px;background:#c4c4c4"></div><div style="position:absolute;left:222px;top:547px;width:52px;height:1px;background:#fafafa"></div><div style="position:absolute;left:222px;top:569px;width:52px;height:1px;background:#6a6a6a"></div><div style="position:absolute;left:222px;top:551.69px;white-space:nowrap;font-family:'Liberation Sans', sans-serif;font-size:12px;font-weight:bold;color:#000;line-height:13.8px;"><div style="width:52px;text-align:center;letter-spacing:-0.4px">Z</div></div><div style="position:absolute;left:275px;top:570px;width:80px;height:22px;background:#ffffff"></div><div style="position:absolute;left:275px;top:592px;width:80px;height:1px;background:#c4c4c4"></div><div style="position:absolute;left:222px;top:570px;width:52px;height:1px;background:#fafafa"></div><div style="position:absolute;left:222px;top:592px;width:52px;height:1px;background:#6a6a6a"></div><div style="position:absolute;left:222px;top:574.69px;white-space:nowrap;font-family:'Liberation Sans', sans-serif;font-size:12px;font-weight:bold;color:#000;line-height:13.8px;"><div style="width:52px;text-align:center;letter-spacing:-0.4px">R</div></div><div style="position:absolute;left:275px;top:593px;width:80px;height:22px;background:#ffffff"></div><div style="position:absolute;left:275px;top:615px;width:80px;height:1px;background:#c4c4c4"></div><div style="position:absolute;left:222px;top:593px;width:52px;height:1px;background:#fafafa"></div><div style="position:absolute;left:222px;top:615px;width:52px;height:1px;background:#6a6a6a"></div><div style="position:absolute;left:222px;top:597.69px;white-space:nowrap;font-family:'Liberation Sans', sans-serif;font-size:12px;font-weight:bold;color:#000;line-height:13.8px;"><div style="width:52px;text-align:center;letter-spacing:-0.4px">G</div></div><div style="position:absolute;left:275px;top:616px;width:80px;height:22px;background:#ffffff"></div><div style="position:absolute;left:275px;top:638px;width:80px;height:1px;background:#c4c4c4"></div><div style="position:absolute;left:222px;top:616px;width:52px;height:1px;background:#fafafa"></div><div style="position:absolute;left:222px;top:638px;width:52px;height:1px;background:#6a6a6a"></div><div style="position:absolute;left:222px;top:620.69px;white-space:nowrap;font-family:'Liberation Sans', sans-serif;font-size:12px;font-weight:bold;color:#000;line-height:13.8px;"><div style="width:52px;text-align:center;letter-spacing:-0.4px">B</div></div><div style="position:absolute;left:275px;top:639px;width:80px;height:22px;background:#dcdcdc"></div><div style="position:absolute;left:275px;top:661px;width:80px;height:1px;background:#c4c4c4"></div><div style="position:absolute;left:222px;top:639px;width:52px;height:1px;background:#fafafa"></div><div style="position:absolute;left:222px;top:661px;width:52px;height:1px;background:#6a6a6a"></div><div style="position:absolute;left:222px;top:643.69px;white-space:nowrap;font-family:'Liberation Sans', sans-serif;font-size:12px;font-weight:bold;color:#000;line-height:13.8px;"><div style="width:52px;text-align:center;letter-spacing:-0.4px">x</div></div><div style="position:absolute;left:275px;top:662px;width:80px;height:22px;background:#dcdcdc"></div><div style="position:absolute;left:275px;top:684px;width:80px;height:1px;background:#c4c4c4"></div><div style="position:absolute;left:222px;top:662px;width:52px;height:1px;background:#fafafa"></div><div style="position:absolute;left:222px;top:684px;width:52px;height:1px;background:#6a6a6a"></div><div style="position:absolute;left:222px;top:666.69px;white-space:nowrap;font-family:'Liberation Sans', sans-serif;font-size:12px;font-weight:bold;color:#000;line-height:13.8px;"><div style="width:52px;text-align:center;letter-spacing:-0.4px">y</div></div><div style="position:absolute;left:275px;top:685px;width:80px;height:22px;background:#dcdcdc"></div><div style="position:absolute;left:275px;top:707px;width:80px;height:1px;background:#c4c4c4"></div><div style="position:absolute;left:222px;top:685px;width:52px;height:1px;background:#fafafa"></div><div style="position:absolute;left:222px;top:707px;width:52px;height:1px;background:#6a6a6a"></div><div style="position:absolute;left:222px;top:689.69px;white-space:nowrap;font-family:'Liberation Sans', sans-serif;font-size:12px;font-weight:bold;color:#000;line-height:13.8px;"><div style="width:52px;text-align:center;letter-spacing:-0.4px">Y</div></div><div style="position:absolute;left:275px;top:708px;width:80px;height:22px;background:#ffffff"></div><div style="position:absolute;left:275px;top:730px;width:80px;height:1px;background:#c4c4c4"></div><div style="position:absolute;left:222px;top:708px;width:52px;height:1px;background:#fafafa"></div><div style="position:absolute;left:222px;top:730px;width:52px;height:1px;background:#6a6a6a"></div><div style="position:absolute;left:222px;top:712.69px;white-space:nowrap;font-family:'Liberation Sans', sans-serif;font-size:12px;font-weight:bold;color:#000;line-height:13.8px;"><div style="width:52px;text-align:center;letter-spacing:-0.4px">x</div></div><div style="position:absolute;left:275px;top:731px;width:80px;height:22px;background:#ffffff"></div><div style="position:absolute;left:275px;top:753px;width:80px;height:1px;background:#c4c4c4"></div><div style="position:absolute;left:222px;top:731px;width:52px;height:1px;background:#fafafa"></div><div style="position:absolute;left:222px;top:753px;width:52px;height:1px;background:#6a6a6a"></div><div style="position:absolute;left:222px;top:735.69px;white-space:nowrap;font-family:'Liberation Sans', sans-serif;font-size:12px;font-weight:bold;color:#000;line-height:13.8px;"><div style="width:52px;text-align:center;letter-spacing:-0.4px">y</div></div><div style="position:absolute;left:275px;top:754px;width:80px;height:22px;background:#ffffff"></div><div style="position:absolute;left:275px;top:776px;width:80px;height:1px;background:#c4c4c4"></div><div style="position:absolute;left:222px;top:754px;width:52px;height:1px;background:#fafafa"></div><div style="position:absolute;left:222px;top:776px;width:52px;height:1px;background:#6a6a6a"></div><div style="position:absolute;left:222px;top:758.69px;white-space:nowrap;font-family:'Liberation Sans', sans-serif;font-size:12px;font-weight:bold;color:#000;line-height:13.8px;"><div style="width:52px;text-align:center;letter-spacing:-0.4px">z</div></div><div style="position:absolute;left:275px;top:777px;width:80px;height:22px;background:#dcdcdc"></div><div style="position:absolute;left:275px;top:799px;width:80px;height:1px;background:#c4c4c4"></div><div style="position:absolute;left:222px;top:777px;width:52px;height:1px;background:#fafafa"></div><div style="position:absolute;left:222px;top:799px;width:52px;height:1px;background:#6a6a6a"></div><div style="position:absolute;left:222px;top:781.69px;white-space:nowrap;font-family:'Liberation Sans', sans-serif;font-size:12px;font-weight:bold;color:#000;line-height:13.8px;"><div style="width:52px;text-align:center;letter-spacing:-0.4px">L</div></div><div style="position:absolute;left:275px;top:800px;width:80px;height:22px;background:#dcdcdc"></div><div style="position:absolute;left:275px;top:822px;width:80px;height:1px;background:#c4c4c4"></div><div style="position:absolute;left:222px;top:800px;width:52px;height:1px;background:#fafafa"></div><div style="position:absolute;left:222px;top:822px;width:52px;height:1px;background:#6a6a6a"></div><div style="position:absolute;left:222px;top:804.69px;white-space:nowrap;font-family:'Liberation Sans', sans-serif;font-size:12px;font-weight:bold;color:#000;line-height:13.8px;"><div style="width:52px;text-align:center;letter-spacing:-0.4px">a</div></div><div style="position:absolute;left:275px;top:823px;width:80px;height:22px;background:#dcdcdc"></div><div style="position:absolute;left:275px;top:845px;width:80px;height:1px;background:#c4c4c4"></div><div style="position:absolute;left:222px;top:823px;width:52px;height:1px;background:#fafafa"></div><div style="position:absolute;left:222px;top:845px;width:52px;height:1px;background:#6a6a6a"></div><div style="position:absolute;left:222px;top:827.69px;white-space:nowrap;font-family:'Liberation Sans', sans-serif;font-size:12px;font-weight:bold;color:#000;line-height:13.8px;"><div style="width:52px;text-align:center;letter-spacing:-0.4px">b</div></div><div style="position:absolute;left:275px;top:846px;width:80px;height:22px;background:#ffffff"></div><div style="position:absolute;left:275px;top:868px;width:80px;height:1px;background:#c4c4c4"></div><div style="position:absolute;left:222px;top:846px;width:52px;height:1px;background:#fafafa"></div><div style="position:absolute;left:222px;top:868px;width:52px;height:1px;background:#6a6a6a"></div><div style="position:absolute;left:222px;top:850.69px;white-space:nowrap;font-family:'Liberation Sans', sans-serif;font-size:12px;font-weight:bold;color:#000;line-height:13.8px;"><div style="width:52px;text-align:center;letter-spacing:-0.4px">L</div></div><div style="position:absolute;left:275px;top:869px;width:80px;height:22px;background:#ffffff"></div><div style="position:absolute;left:275px;top:891px;width:80px;height:1px;background:#c4c4c4"></div><div style="position:absolute;left:222px;top:869px;width:52px;height:1px;background:#fafafa"></div><div style="position:absolute;left:222px;top:891px;width:52px;height:1px;background:#6a6a6a"></div><div style="position:absolute;left:222px;top:873.69px;white-space:nowrap;font-family:'Liberation Sans', sans-serif;font-size:12px;font-weight:bold;color:#000;line-height:13.8px;"><div style="width:52px;text-align:center;letter-spacing:-0.4px">C</div></div><div style="position:absolute;left:275px;top:892px;width:80px;height:22px;background:#ffffff"></div><div style="position:absolute;left:275px;top:914px;width:80px;height:1px;background:#c4c4c4"></div><div style="position:absolute;left:222px;top:892px;width:52px;height:1px;background:#fafafa"></div><div style="position:absolute;left:222px;top:914px;width:52px;height:1px;background:#6a6a6a"></div><div style="position:absolute;left:222px;top:896.69px;white-space:nowrap;font-family:'Liberation Sans', sans-serif;font-size:12px;font-weight:bold;color:#000;line-height:13.8px;"><div style="width:52px;text-align:center;letter-spacing:-0.4px">H</div></div><div style="position:absolute;left:275px;top:915px;width:80px;height:22px;background:#dcdcdc"></div><div style="position:absolute;left:275px;top:937px;width:80px;height:1px;background:#c4c4c4"></div><div style="position:absolute;left:222px;top:915px;width:52px;height:1px;background:#fafafa"></div><div style="position:absolute;left:222px;top:937px;width:52px;height:1px;background:#6a6a6a"></div><div style="position:absolute;left:222px;top:919.69px;white-space:nowrap;font-family:'Liberation Sans', sans-serif;font-size:12px;font-weight:bold;color:#000;line-height:13.8px;"><div style="width:52px;text-align:center;letter-spacing:-0.4px">L</div></div><div style="position:absolute;left:275px;top:938px;width:80px;height:22px;background:#dcdcdc"></div><div style="position:absolute;left:275px;top:960px;width:80px;height:1px;background:#c4c4c4"></div><div style="position:absolute;left:222px;top:938px;width:52px;height:1px;background:#fafafa"></div><div style="position:absolute;left:222px;top:960px;width:52px;height:1px;background:#6a6a6a"></div><div style="position:absolute;left:222px;top:942.69px;white-space:nowrap;font-family:'Liberation Sans', sans-serif;font-size:12px;font-weight:bold;color:#000;line-height:13.8px;"><div style="width:52px;text-align:center;letter-spacing:-0.4px">M</div></div><div style="position:absolute;left:275px;top:961px;width:80px;height:22px;background:#dcdcdc"></div><div style="position:absolute;left:275px;top:983px;width:80px;height:1px;background:#c4c4c4"></div><div style="position:absolute;left:222px;top:961px;width:52px;height:1px;background:#fafafa"></div><div style="position:absolute;left:222px;top:983px;width:52px;height:1px;background:#6a6a6a"></div><div style="position:absolute;left:222px;top:965.69px;white-space:nowrap;font-family:'Liberation Sans', sans-serif;font-size:12px;font-weight:bold;color:#000;line-height:13.8px;"><div style="width:52px;text-align:center;letter-spacing:-0.4px">S</div></div><div style="position:absolute;left:274px;top:432px;width:1px;height:552px;background:#6a6a6a"></div><div style="position:absolute;left:222px;top:984px;width:133px;height:22px;background:#a0a0a0"></div><div style="position:absolute;left:355px;top:432px;width:18px;height:575px;background:#efefef"></div><svg style="position:absolute;left:358px;top:436px" width="11" height="9" viewBox="0 0 11 9"><path d="M0.5 8L5.5 1L10.5 8z" fill="#a8a8a8"/></svg><svg style="position:absolute;left:358px;top:995px" width="11" height="9" viewBox="0 0 11 9"><path d="M0.5 1L5.5 8L10.5 1z" fill="#a8a8a8"/></svg><div style="position:absolute;left:391px;top:387px;width:1506px;height:630px;background:#7e7e7e"></div><div style="position:absolute;left:393px;top:388px;width:1502px;height:17px;background:linear-gradient(90deg,#e2eaf5,#eef3fa);border-radius:5px 5px 0 0"></div><div style="position:absolute;left:393px;top:405px;width:1502px;height:1px;background:#a6a6a6"></div><div style="position:absolute;left:393px;top:406px;width:1502px;height:609px;background:#ebebeb"></div><div style="position:absolute;left:398px;top:390.4px;white-space:nowrap;font-family:'Liberation Sans', sans-serif;font-size:12.5px;font-weight:bold;color:#3a3a3a;letter-spacing:0.925px;line-height:14.37px;">Information</div><div style="position:absolute;left:398px;top:412px;width:302px;height:21px;background:#fff;border:1px solid #c8c8c8;box-sizing:border-box"></div><div style="position:absolute;left:403px;top:415.81px;white-space:nowrap;font-family:'Liberation Sans', sans-serif;font-size:14px;color:#000;letter-spacing:-0.213px;line-height:16.1px;">CIE Diagram</div><svg style="position:absolute;left:685px;top:419px" width="11" height="8" viewBox="0 0 11 8"><path d="M1 1.5L5.5 6L10 1.5" fill="none" stroke="#444" stroke-width="1.1"/></svg><div style="position:absolute;left:398px;top:439px;width:1496px;height:570px;background:#8e8e8e"></div><div style="position:absolute;left:400px;top:441px;width:1493px;height:567px;background:#fff"></div><svg style="position:absolute;left:402px;top:443px" width="1488" height="562" viewBox="402 443 1488 562"><defs><filter id="blur1" x="-50%" y="-50%" width="200%" height="200%"><feGaussianBlur stdDeviation="1.2"/></filter><radialGradient id="sc" cx="0.4" cy="0.35" r="0.7"><stop offset="0" stop-color="#c8ffff"/><stop offset="0.6" stop-color="#58d8e0"/><stop offset="1" stop-color="#1a7880"/></radialGradient><radialGradient id="sg" cx="0.4" cy="0.35" r="0.7"><stop offset="0" stop-color="#70ff70"/><stop offset="0.6" stop-color="#00c800"/><stop offset="1" stop-color="#004800"/></radialGradient><radialGradient id="sy" cx="0.4" cy="0.35" r="0.7"><stop offset="0" stop-color="#ffffe0"/><stop offset="0.6" stop-color="#e0e090"/><stop offset="1" stop-color="#808040"/></radialGradient><radialGradient id="sr" cx="0.4" cy="0.35" r="0.7"><stop offset="0" stop-color="#ff7060"/><stop offset="0.6" stop-color="#e82018"/><stop offset="1" stop-color="#900000"/></radialGradient><radialGradient id="sb" cx="0.4" cy="0.35" r="0.7"><stop offset="0" stop-color="#8080ff"/><stop offset="0.6" stop-color="#2020d0"/><stop offset="1" stop-color="#000060"/></radialGradient><radialGradient id="sm" cx="0.4" cy="0.35" r="0.7"><stop offset="0" stop-color="#ff90ff"/><stop offset="0.6" stop-color="#d000d0"/><stop offset="1" stop-color="#600060"/></radialGradient><radialGradient id="sw" cx="0.4" cy="0.35" r="0.7"><stop offset="0" stop-color="#ffffff"/><stop offset="0.6" stop-color="#f4f4f4"/><stop offset="1" stop-color="#a0a0a0"/></radialGradient><radialGradient id="sn" cx="0.4" cy="0.35" r="0.7"><stop offset="0" stop-color="#6060c0"/><stop offset="0.6" stop-color="#101080"/><stop offset="1" stop-color="#000030"/></radialGradient><radialGradient id="glow" cx="0.5" cy="0.5" r="0.5"><stop offset="0" stop-color="#fff" stop-opacity="0.5"/><stop offset="1" stop-color="#fff" stop-opacity="0"/></radialGradient><clipPath id="clipL"><polygon points="790.0,967.5 780.0,966.2 770.0,962.5 755.0,956.2 730.0,940.0 705.0,920.0 690.0,907.5 657.5,877.5 645.0,864.2 622.5,837.5 598.8,808.2 585.0,790.0 563.8,752.5 546.2,710.0 540.8,695.0 534.6,661.7 532.5,643.0 531.5,620.0 532.0,599.0 534.6,582.5 539.8,563.8 548.0,546.0 568.0,527.3 582.5,521.0 603.0,513.8 624.0,508.5 657.5,504.4 690.8,504.4 700.0,505.2 731.2,509.0 778.0,518.4 825.0,527.0 856.2,534.8 928.0,555.2 1000.0,578.0 1643.0,794.0 1692.0,810.9 1712.4,816.6 1721.2,821.7 820.0,963.8 805.0,966.5"/></clipPath><clipPath id="clipT"><polygon points="1016.0,633.0 1226.7,691.2 1592.0,788.5 1063.0,885.3 781.0,937.0 887.5,794.5"/></clipPath><linearGradient id="o0" gradientUnits="userSpaceOnUse" x1="653.7" y1="0" x2="695.0" y2="0"><stop offset="0.000" stop-color="#00c781"/><stop offset="1.000" stop-color="#00c77d"/></linearGradient><linearGradient id="o1" gradientUnits="userSpaceOnUse" x1="629.2" y1="0" x2="721.9" y2="0"><stop offset="0.000" stop-color="#00c784"/><stop offset="1.000" stop-color="#00c77a"/></linearGradient><linearGradient id="o2" gradientUnits="userSpaceOnUse" x1="613.0" y1="0" x2="741.7" y2="0"><stop offset="0.000" stop-color="#00c786"/><stop offset="1.000" stop-color="#00c778"/></linearGradient><linearGradient id="o3" gradientUnits="userSpaceOnUse" x1="601.0" y1="0" x2="756.6" y2="0"><stop offset="0.000" stop-color="#00c788"/><stop offset="1.000" stop-color="#00c776"/></linearGradient><linearGradient id="o4" gradientUnits="userSpaceOnUse" x1="592.2" y1="0" x2="771.6" y2="0"><stop offset="0.000" stop-color="#00c789"/><stop offset="1.000" stop-color="#00c774"/></linearGradient><linearGradient id="o5" gradientUnits="userSpaceOnUse" x1="583.7" y1="0" x2="787.0" y2="0"><stop offset="0.000" stop-color="#00c78a"/><stop offset="1.000" stop-color="#00c772"/></linearGradient><linearGradient id="o6" gradientUnits="userSpaceOnUse" x1="576.0" y1="0" x2="803.4" y2="0"><stop offset="0.000" stop-color="#00c78b"/><stop offset="1.000" stop-color="#00c770"/></linearGradient><linearGradient id="o7" gradientUnits="userSpaceOnUse" x1="569.1" y1="0" x2="819.8" y2="0"><stop offset="0.000" stop-color="#00c78c"/><stop offset="1.000" stop-color="#00c76d"/></linearGradient><linearGradient id="o8" gradientUnits="userSpaceOnUse" x1="563.7" y1="0" x2="834.0" y2="0"><stop offset="0.000" stop-color="#00c78d"/><stop offset="0.945" stop-color="#00c76e"/><stop offset="1.000" stop-color="#00c76b"/></linearGradient><linearGradient id="o9" gradientUnits="userSpaceOnUse" x1="560.5" y1="0" x2="846.0" y2="0"><stop offset="0.000" stop-color="#00c78d"/><stop offset="0.875" stop-color="#00c770"/><stop offset="1.000" stop-color="#00c769"/></linearGradient><linearGradient id="o10" gradientUnits="userSpaceOnUse" x1="557.3" y1="0" x2="858.0" y2="0"><stop offset="0.000" stop-color="#00c78e"/><stop offset="0.832" stop-color="#00c771"/><stop offset="1.000" stop-color="#00c766"/></linearGradient><linearGradient id="o11" gradientUnits="userSpaceOnUse" x1="554.1" y1="0" x2="868.7" y2="0"><stop offset="0.000" stop-color="#00c78f"/><stop offset="0.838" stop-color="#00c770"/><stop offset="1.000" stop-color="#00c764"/></linearGradient><linearGradient id="o12" gradientUnits="userSpaceOnUse" x1="550.9" y1="0" x2="879.3" y2="0"><stop offset="0.000" stop-color="#00c78f"/><stop offset="0.782" stop-color="#00c772"/><stop offset="1.000" stop-color="#00c762"/></linearGradient><linearGradient id="o13" gradientUnits="userSpaceOnUse" x1="547.7" y1="0" x2="889.8" y2="0"><stop offset="0.000" stop-color="#00c790"/><stop offset="0.783" stop-color="#00c771"/><stop offset="1.000" stop-color="#00c760"/></linearGradient><linearGradient id="o14" gradientUnits="userSpaceOnUse" x1="544.8" y1="0" x2="900.4" y2="0"><stop offset="0.000" stop-color="#00c791"/><stop offset="0.739" stop-color="#00c773"/><stop offset="1.000" stop-color="#00c75d"/></linearGradient><linearGradient id="o15" gradientUnits="userSpaceOnUse" x1="543.4" y1="0" x2="911.0" y2="0"><stop offset="0.000" stop-color="#00c791"/><stop offset="0.715" stop-color="#00c774"/><stop offset="1.000" stop-color="#00c75a"/></linearGradient><linearGradient id="o16" gradientUnits="userSpaceOnUse" x1="542.0" y1="0" x2="921.5" y2="0"><stop offset="0.000" stop-color="#00c792"/><stop offset="0.701" stop-color="#00c774"/><stop offset="1.000" stop-color="#00c757"/></linearGradient><linearGradient id="o17" gradientUnits="userSpaceOnUse" x1="540.6" y1="0" x2="931.9" y2="0"><stop offset="0.000" stop-color="#00c792"/><stop offset="0.695" stop-color="#00c774"/><stop offset="1.000" stop-color="#00c753"/></linearGradient><linearGradient id="o18" gradientUnits="userSpaceOnUse" x1="539.2" y1="0" x2="941.4" y2="0"><stop offset="0.000" stop-color="#00c793"/><stop offset="0.674" stop-color="#00c775"/><stop offset="0.985" stop-color="#00c753"/><stop offset="1.000" stop-color="#00c750"/></linearGradient><linearGradient id="o19" gradientUnits="userSpaceOnUse" x1="537.8" y1="0" x2="950.9" y2="0"><stop offset="0.000" stop-color="#00c793"/><stop offset="0.638" stop-color="#00c777"/><stop offset="0.949" stop-color="#00c755"/><stop offset="1.000" stop-color="#00c74c"/></linearGradient><linearGradient id="o20" gradientUnits="userSpaceOnUse" x1="536.6" y1="0" x2="960.4" y2="0"><stop offset="0.000" stop-color="#00c794"/><stop offset="0.655" stop-color="#00c775"/><stop offset="0.937" stop-color="#00c755"/><stop offset="1.000" stop-color="#00c748"/></linearGradient><linearGradient id="o21" gradientUnits="userSpaceOnUse" x1="535.8" y1="0" x2="969.8" y2="0"><stop offset="0.000" stop-color="#00c794"/><stop offset="0.614" stop-color="#00c778"/><stop offset="0.910" stop-color="#00c756"/><stop offset="1.000" stop-color="#00c742"/></linearGradient><linearGradient id="o22" gradientUnits="userSpaceOnUse" x1="534.9" y1="0" x2="979.3" y2="0"><stop offset="0.000" stop-color="#00c795"/><stop offset="0.624" stop-color="#00c777"/><stop offset="0.913" stop-color="#00c753"/><stop offset="1.000" stop-color="#00c73c"/></linearGradient><linearGradient id="o23" gradientUnits="userSpaceOnUse" x1="534.1" y1="0" x2="988.8" y2="0"><stop offset="0.000" stop-color="#00c795"/><stop offset="0.579" stop-color="#00c77a"/><stop offset="0.868" stop-color="#00c758"/><stop offset="0.993" stop-color="#00c738"/><stop offset="1.000" stop-color="#00c735"/></linearGradient><linearGradient id="o24" gradientUnits="userSpaceOnUse" x1="533.3" y1="0" x2="998.3" y2="0"><stop offset="0.000" stop-color="#00c796"/><stop offset="0.574" stop-color="#00c77a"/><stop offset="0.858" stop-color="#00c758"/><stop offset="0.981" stop-color="#00c735"/><stop offset="1.000" stop-color="#00c72c"/></linearGradient><linearGradient id="o25" gradientUnits="userSpaceOnUse" x1="532.4" y1="0" x2="1007.5" y2="0"><stop offset="0.000" stop-color="#00c796"/><stop offset="0.560" stop-color="#00c77b"/><stop offset="0.836" stop-color="#00c759"/><stop offset="0.956" stop-color="#00c739"/><stop offset="1.000" stop-color="#00c71e"/></linearGradient><linearGradient id="o26" gradientUnits="userSpaceOnUse" x1="531.6" y1="0" x2="1016.4" y2="0"><stop offset="0.000" stop-color="#00c797"/><stop offset="0.556" stop-color="#00c77b"/><stop offset="0.827" stop-color="#00c759"/><stop offset="0.944" stop-color="#00c737"/><stop offset="0.981" stop-color="#00c71f"/><stop offset="0.994" stop-color="#00c70d"/><stop offset="1.000" stop-color="#12c700"/></linearGradient><linearGradient id="o27" gradientUnits="userSpaceOnUse" x1="531.1" y1="0" x2="1025.3" y2="0"><stop offset="0.000" stop-color="#00c797"/><stop offset="0.545" stop-color="#00c77c"/><stop offset="0.806" stop-color="#00c75b"/><stop offset="0.921" stop-color="#00c73a"/><stop offset="0.964" stop-color="#00c720"/><stop offset="0.976" stop-color="#00c710"/><stop offset="0.982" stop-color="#10c700"/><stop offset="1.000" stop-color="#26c700"/></linearGradient><linearGradient id="o28" gradientUnits="userSpaceOnUse" x1="530.7" y1="0" x2="1034.3" y2="0"><stop offset="0.000" stop-color="#00c798"/><stop offset="0.542" stop-color="#00c77c"/><stop offset="0.804" stop-color="#00c759"/><stop offset="0.911" stop-color="#00c738"/><stop offset="0.952" stop-color="#00c71b"/><stop offset="0.958" stop-color="#00c712"/><stop offset="0.964" stop-color="#0dc700"/><stop offset="0.982" stop-color="#26c700"/><stop offset="1.000" stop-color="#32c700"/></linearGradient><linearGradient id="o29" gradientUnits="userSpaceOnUse" x1="530.2" y1="0" x2="1043.2" y2="0"><stop offset="0.000" stop-color="#00c798"/><stop offset="0.529" stop-color="#00c77d"/><stop offset="0.785" stop-color="#00c75b"/><stop offset="0.895" stop-color="#00c739"/><stop offset="0.936" stop-color="#00c71c"/><stop offset="0.942" stop-color="#00c713"/><stop offset="0.948" stop-color="#0bc700"/><stop offset="0.959" stop-color="#1fc700"/><stop offset="1.000" stop-color="#3cc700"/></linearGradient><linearGradient id="o30" gradientUnits="userSpaceOnUse" x1="529.7" y1="0" x2="1052.1" y2="0"><stop offset="0.000" stop-color="#00c799"/><stop offset="0.526" stop-color="#00c77d"/><stop offset="0.771" stop-color="#00c75b"/><stop offset="0.880" stop-color="#00c73a"/><stop offset="0.920" stop-color="#00c71d"/><stop offset="0.926" stop-color="#00c715"/><stop offset="0.931" stop-color="#07c700"/><stop offset="0.943" stop-color="#1fc700"/><stop offset="0.994" stop-color="#42c700"/><stop offset="1.000" stop-color="#44c700"/></linearGradient><linearGradient id="o31" gradientUnits="userSpaceOnUse" x1="529.2" y1="0" x2="1061.0" y2="0"><stop offset="0.000" stop-color="#00c79a"/><stop offset="0.511" stop-color="#00c77e"/><stop offset="0.753" stop-color="#00c75d"/><stop offset="0.865" stop-color="#00c73b"/><stop offset="0.904" stop-color="#00c71f"/><stop offset="0.910" stop-color="#00c717"/><stop offset="0.916" stop-color="#00c707"/><stop offset="0.921" stop-color="#15c700"/><stop offset="0.949" stop-color="#32c700"/><stop offset="1.000" stop-color="#4cc700"/></linearGradient><linearGradient id="o32" gradientUnits="userSpaceOnUse" x1="529.0" y1="0" x2="1070.0" y2="0"><stop offset="0.000" stop-color="#00c79a"/><stop offset="0.514" stop-color="#00c77e"/><stop offset="0.751" stop-color="#00c75c"/><stop offset="0.856" stop-color="#00c739"/><stop offset="0.895" stop-color="#00c719"/><stop offset="0.901" stop-color="#00c70c"/><stop offset="0.906" stop-color="#14c700"/><stop offset="0.934" stop-color="#31c700"/><stop offset="1.000" stop-color="#53c700"/></linearGradient><linearGradient id="o33" gradientUnits="userSpaceOnUse" x1="528.9" y1="0" x2="1078.9" y2="0"><stop offset="0.000" stop-color="#00c79b"/><stop offset="0.511" stop-color="#00c77e"/><stop offset="0.734" stop-color="#00c75d"/><stop offset="0.837" stop-color="#00c73c"/><stop offset="0.875" stop-color="#00c721"/><stop offset="0.886" stop-color="#00c70f"/><stop offset="0.891" stop-color="#12c700"/><stop offset="0.913" stop-color="#2dc700"/><stop offset="0.989" stop-color="#55c700"/><stop offset="1.000" stop-color="#59c700"/></linearGradient><linearGradient id="o34" gradientUnits="userSpaceOnUse" x1="528.8" y1="0" x2="1087.8" y2="0"><stop offset="0.000" stop-color="#00c79b"/><stop offset="0.487" stop-color="#00c780"/><stop offset="0.717" stop-color="#00c75f"/><stop offset="0.824" stop-color="#00c73d"/><stop offset="0.861" stop-color="#00c722"/><stop offset="0.872" stop-color="#00c711"/><stop offset="0.877" stop-color="#10c700"/><stop offset="0.898" stop-color="#2dc700"/><stop offset="0.973" stop-color="#55c700"/><stop offset="1.000" stop-color="#5fc700"/></linearGradient><linearGradient id="o35" gradientUnits="userSpaceOnUse" x1="528.8" y1="0" x2="1096.8" y2="0"><stop offset="0.000" stop-color="#00c79c"/><stop offset="0.489" stop-color="#00c780"/><stop offset="0.716" stop-color="#00c75e"/><stop offset="0.816" stop-color="#00c73b"/><stop offset="0.853" stop-color="#00c71d"/><stop offset="0.858" stop-color="#00c713"/><stop offset="0.863" stop-color="#0dc700"/><stop offset="0.874" stop-color="#21c700"/><stop offset="0.916" stop-color="#42c700"/><stop offset="1.000" stop-color="#65c700"/></linearGradient><linearGradient id="o36" gradientUnits="userSpaceOnUse" x1="528.7" y1="0" x2="1105.7" y2="0"><stop offset="0.000" stop-color="#00c79c"/><stop offset="0.466" stop-color="#00c782"/><stop offset="0.699" stop-color="#00c760"/><stop offset="0.803" stop-color="#00c73c"/><stop offset="0.839" stop-color="#00c71e"/><stop offset="0.845" stop-color="#00c715"/><stop offset="0.850" stop-color="#0ac700"/><stop offset="0.860" stop-color="#21c700"/><stop offset="0.912" stop-color="#48c700"/><stop offset="1.000" stop-color="#6bc700"/></linearGradient><linearGradient id="o37" gradientUnits="userSpaceOnUse" x1="528.6" y1="0" x2="1114.6" y2="0"><stop offset="0.000" stop-color="#00c79d"/><stop offset="0.464" stop-color="#00c782"/><stop offset="0.689" stop-color="#00c761"/><stop offset="0.791" stop-color="#00c73d"/><stop offset="0.827" stop-color="#00c720"/><stop offset="0.832" stop-color="#00c717"/><stop offset="0.837" stop-color="#00c702"/><stop offset="0.842" stop-color="#17c700"/><stop offset="0.872" stop-color="#38c700"/><stop offset="0.964" stop-color="#64c700"/><stop offset="1.000" stop-color="#70c700"/></linearGradient><linearGradient id="o38" gradientUnits="userSpaceOnUse" x1="528.5" y1="0" x2="1123.6" y2="0"><stop offset="0.000" stop-color="#00c79d"/><stop offset="0.457" stop-color="#00c783"/><stop offset="0.673" stop-color="#00c762"/><stop offset="0.769" stop-color="#00c743"/><stop offset="0.809" stop-color="#00c727"/><stop offset="0.819" stop-color="#00c719"/><stop offset="0.824" stop-color="#00c70a"/><stop offset="0.829" stop-color="#16c700"/><stop offset="0.854" stop-color="#34c700"/><stop offset="0.930" stop-color="#5dc700"/><stop offset="1.000" stop-color="#75c700"/></linearGradient><linearGradient id="o39" gradientUnits="userSpaceOnUse" x1="528.6" y1="0" x2="1132.5" y2="0"><stop offset="0.000" stop-color="#00c79e"/><stop offset="0.455" stop-color="#00c783"/><stop offset="0.668" stop-color="#00c762"/><stop offset="0.767" stop-color="#00c73f"/><stop offset="0.802" stop-color="#00c722"/><stop offset="0.812" stop-color="#00c70e"/><stop offset="0.817" stop-color="#14c700"/><stop offset="0.837" stop-color="#30c700"/><stop offset="0.906" stop-color="#59c700"/><stop offset="1.000" stop-color="#7bc700"/></linearGradient><linearGradient id="o40" gradientUnits="userSpaceOnUse" x1="528.7" y1="0" x2="1141.4" y2="0"><stop offset="0.000" stop-color="#00c79e"/><stop offset="0.434" stop-color="#00c785"/><stop offset="0.649" stop-color="#00c765"/><stop offset="0.746" stop-color="#00c745"/><stop offset="0.790" stop-color="#00c723"/><stop offset="0.800" stop-color="#00c710"/><stop offset="0.805" stop-color="#12c700"/><stop offset="0.824" stop-color="#2fc700"/><stop offset="0.888" stop-color="#57c700"/><stop offset="1.000" stop-color="#80c700"/></linearGradient><linearGradient id="o41" gradientUnits="userSpaceOnUse" x1="528.8" y1="0" x2="1150.4" y2="0"><stop offset="0.000" stop-color="#00c79f"/><stop offset="0.447" stop-color="#00c784"/><stop offset="0.649" stop-color="#00c764"/><stop offset="0.745" stop-color="#00c740"/><stop offset="0.779" stop-color="#00c724"/><stop offset="0.788" stop-color="#00c713"/><stop offset="0.793" stop-color="#10c700"/><stop offset="0.808" stop-color="#2ac700"/><stop offset="0.865" stop-color="#53c700"/><stop offset="1.000" stop-color="#85c700"/></linearGradient><linearGradient id="o42" gradientUnits="userSpaceOnUse" x1="529.0" y1="0" x2="1159.3" y2="0"><stop offset="0.000" stop-color="#00c79f"/><stop offset="0.427" stop-color="#00c786"/><stop offset="0.635" stop-color="#00c766"/><stop offset="0.730" stop-color="#00c744"/><stop offset="0.768" stop-color="#00c726"/><stop offset="0.777" stop-color="#00c715"/><stop offset="0.782" stop-color="#0dc700"/><stop offset="0.791" stop-color="#23c700"/><stop offset="0.829" stop-color="#46c700"/><stop offset="0.938" stop-color="#77c700"/><stop offset="1.000" stop-color="#8ac700"/></linearGradient><linearGradient id="o43" gradientUnits="userSpaceOnUse" x1="529.1" y1="0" x2="1168.2" y2="0"><stop offset="0.000" stop-color="#00c7a0"/><stop offset="0.439" stop-color="#00c785"/><stop offset="0.640" stop-color="#00c763"/><stop offset="0.724" stop-color="#00c742"/><stop offset="0.757" stop-color="#00c727"/><stop offset="0.766" stop-color="#00c717"/><stop offset="0.771" stop-color="#0ac700"/><stop offset="0.780" stop-color="#22c700"/><stop offset="0.822" stop-color="#49c700"/><stop offset="0.944" stop-color="#7ec700"/><stop offset="1.000" stop-color="#8fc700"/></linearGradient><linearGradient id="o44" gradientUnits="userSpaceOnUse" x1="529.2" y1="0" x2="1177.1" y2="0"><stop offset="0.000" stop-color="#00c7a0"/><stop offset="0.421" stop-color="#00c787"/><stop offset="0.620" stop-color="#00c767"/><stop offset="0.713" stop-color="#00c744"/><stop offset="0.750" stop-color="#00c723"/><stop offset="0.759" stop-color="#00c70d"/><stop offset="0.764" stop-color="#16c700"/><stop offset="0.782" stop-color="#32c700"/><stop offset="0.847" stop-color="#5dc700"/><stop offset="0.995" stop-color="#93c700"/><stop offset="1.000" stop-color="#94c700"/></linearGradient><linearGradient id="o45" gradientUnits="userSpaceOnUse" x1="529.3" y1="0" x2="1186.1" y2="0"><stop offset="0.000" stop-color="#00c7a1"/><stop offset="0.420" stop-color="#00c787"/><stop offset="0.607" stop-color="#00c769"/><stop offset="0.703" stop-color="#00c745"/><stop offset="0.740" stop-color="#00c724"/><stop offset="0.749" stop-color="#00c710"/><stop offset="0.753" stop-color="#14c700"/><stop offset="0.772" stop-color="#32c700"/><stop offset="0.826" stop-color="#59c700"/><stop offset="0.959" stop-color="#8dc700"/><stop offset="1.000" stop-color="#99c700"/></linearGradient><linearGradient id="o46" gradientUnits="userSpaceOnUse" x1="529.5" y1="0" x2="1195.0" y2="0"><stop offset="0.000" stop-color="#00c7a1"/><stop offset="0.405" stop-color="#00c789"/><stop offset="0.604" stop-color="#00c768"/><stop offset="0.694" stop-color="#00c746"/><stop offset="0.730" stop-color="#00c726"/><stop offset="0.734" stop-color="#00c71e"/><stop offset="0.748" stop-color="#21c711"/><stop offset="0.757" stop-color="#2cc700"/><stop offset="0.802" stop-color="#52c700"/><stop offset="0.923" stop-color="#87c700"/><stop offset="1.000" stop-color="#9ec700"/></linearGradient><linearGradient id="o47" gradientUnits="userSpaceOnUse" x1="529.8" y1="0" x2="1203.9" y2="0"><stop offset="0.000" stop-color="#00c7a2"/><stop offset="0.404" stop-color="#00c789"/><stop offset="0.600" stop-color="#00c768"/><stop offset="0.689" stop-color="#00c744"/><stop offset="0.720" stop-color="#00c727"/><stop offset="0.733" stop-color="#20c71d"/><stop offset="0.760" stop-color="#3bc70a"/><stop offset="0.764" stop-color="#3fc700"/><stop offset="0.849" stop-color="#70c700"/><stop offset="1.000" stop-color="#a3c700"/></linearGradient><linearGradient id="o48" gradientUnits="userSpaceOnUse" x1="530.1" y1="0" x2="1212.9" y2="0"><stop offset="0.000" stop-color="#00c7a3"/><stop offset="0.417" stop-color="#00c788"/><stop offset="0.596" stop-color="#00c768"/><stop offset="0.680" stop-color="#00c745"/><stop offset="0.706" stop-color="#00c72e"/><stop offset="0.711" stop-color="#07c728"/><stop offset="0.719" stop-color="#1fc726"/><stop offset="0.750" stop-color="#3ec719"/><stop offset="0.768" stop-color="#4ac708"/><stop offset="0.776" stop-color="#50c700"/><stop offset="0.882" stop-color="#82c700"/><stop offset="1.000" stop-color="#a8c700"/></linearGradient><linearGradient id="o49" gradientUnits="userSpaceOnUse" x1="530.5" y1="0" x2="1221.8" y2="0"><stop offset="0.000" stop-color="#00c7a3"/><stop offset="0.390" stop-color="#00c78b"/><stop offset="0.580" stop-color="#00c76b"/><stop offset="0.667" stop-color="#00c748"/><stop offset="0.697" stop-color="#00c72f"/><stop offset="0.701" stop-color="#16c72d"/><stop offset="0.727" stop-color="#37c725"/><stop offset="0.771" stop-color="#53c70d"/><stop offset="0.779" stop-color="#58c700"/><stop offset="0.896" stop-color="#8dc700"/><stop offset="1.000" stop-color="#adc700"/></linearGradient><linearGradient id="o50" gradientUnits="userSpaceOnUse" x1="530.8" y1="0" x2="1230.7" y2="0"><stop offset="0.000" stop-color="#00c7a4"/><stop offset="0.402" stop-color="#00c78a"/><stop offset="0.577" stop-color="#00c76b"/><stop offset="0.658" stop-color="#00c749"/><stop offset="0.684" stop-color="#00c735"/><stop offset="0.688" stop-color="#14c733"/><stop offset="0.709" stop-color="#33c72d"/><stop offset="0.769" stop-color="#5ac714"/><stop offset="0.778" stop-color="#5ec70c"/><stop offset="0.782" stop-color="#61c700"/><stop offset="0.910" stop-color="#97c700"/><stop offset="1.000" stop-color="#b2c700"/></linearGradient><linearGradient id="o51" gradientUnits="userSpaceOnUse" x1="531.1" y1="0" x2="1239.7" y2="0"><stop offset="0.000" stop-color="#00c7a4"/><stop offset="0.388" stop-color="#00c78c"/><stop offset="0.570" stop-color="#00c76c"/><stop offset="0.650" stop-color="#00c74a"/><stop offset="0.671" stop-color="#00c73a"/><stop offset="0.679" stop-color="#1cc737"/><stop offset="0.709" stop-color="#3dc730"/><stop offset="0.776" stop-color="#65c714"/><stop offset="0.789" stop-color="#6bc700"/><stop offset="0.937" stop-color="#a5c700"/><stop offset="1.000" stop-color="#b7c700"/></linearGradient><linearGradient id="o52" gradientUnits="userSpaceOnUse" x1="531.5" y1="0" x2="1248.6" y2="0"><stop offset="0.000" stop-color="#00c7a5"/><stop offset="0.388" stop-color="#00c78c"/><stop offset="0.562" stop-color="#00c76d"/><stop offset="0.642" stop-color="#00c74b"/><stop offset="0.658" stop-color="#00c73f"/><stop offset="0.667" stop-color="#1bc73b"/><stop offset="0.692" stop-color="#3ac736"/><stop offset="0.775" stop-color="#6bc719"/><stop offset="0.792" stop-color="#72c706"/><stop offset="0.804" stop-color="#78c700"/><stop offset="0.967" stop-color="#b3c700"/><stop offset="1.000" stop-color="#bcc700"/></linearGradient><linearGradient id="o53" gradientUnits="userSpaceOnUse" x1="531.9" y1="0" x2="1257.5" y2="0"><stop offset="0.000" stop-color="#00c7a5"/><stop offset="0.372" stop-color="#00c78e"/><stop offset="0.545" stop-color="#00c770"/><stop offset="0.628" stop-color="#00c750"/><stop offset="0.649" stop-color="#00c741"/><stop offset="0.653" stop-color="#17c740"/><stop offset="0.674" stop-color="#34c73c"/><stop offset="0.736" stop-color="#5ec72d"/><stop offset="0.789" stop-color="#77c713"/><stop offset="0.802" stop-color="#7dc700"/><stop offset="0.979" stop-color="#bcc700"/><stop offset="1.000" stop-color="#c2c700"/></linearGradient><linearGradient id="o54" gradientUnits="userSpaceOnUse" x1="532.5" y1="0" x2="1266.5" y2="0"><stop offset="0.000" stop-color="#00c7a6"/><stop offset="0.376" stop-color="#00c78e"/><stop offset="0.551" stop-color="#00c76e"/><stop offset="0.629" stop-color="#00c74b"/><stop offset="0.637" stop-color="#00c745"/><stop offset="0.641" stop-color="#16c744"/><stop offset="0.665" stop-color="#38c740"/><stop offset="0.743" stop-color="#69c72d"/><stop offset="0.792" stop-color="#7ec715"/><stop offset="0.800" stop-color="#82c70c"/><stop offset="0.804" stop-color="#83c700"/><stop offset="0.971" stop-color="#bfc700"/><stop offset="1.000" stop-color="#c7c700"/></linearGradient><linearGradient id="o55" gradientUnits="userSpaceOnUse" x1="533.1" y1="0" x2="1275.4" y2="0"><stop offset="0.000" stop-color="#00c7a7"/><stop offset="0.379" stop-color="#00c78e"/><stop offset="0.544" stop-color="#00c76f"/><stop offset="0.621" stop-color="#00c74c"/><stop offset="0.625" stop-color="#00c749"/><stop offset="0.629" stop-color="#14c748"/><stop offset="0.645" stop-color="#2fc745"/><stop offset="0.702" stop-color="#5ac73a"/><stop offset="0.790" stop-color="#84c71b"/><stop offset="0.806" stop-color="#8ac70a"/><stop offset="0.810" stop-color="#8cc700"/><stop offset="0.984" stop-color="#c7c600"/><stop offset="1.000" stop-color="#c7c200"/></linearGradient><linearGradient id="o56" gradientUnits="userSpaceOnUse" x1="533.6" y1="0" x2="1284.3" y2="0"><stop offset="0.000" stop-color="#00c7a7"/><stop offset="0.363" stop-color="#00c790"/><stop offset="0.530" stop-color="#00c772"/><stop offset="0.610" stop-color="#00c750"/><stop offset="0.614" stop-color="#00c74d"/><stop offset="0.618" stop-color="#13c74c"/><stop offset="0.637" stop-color="#34c749"/><stop offset="0.701" stop-color="#61c73c"/><stop offset="0.793" stop-color="#8bc71d"/><stop offset="0.809" stop-color="#91c70f"/><stop offset="0.817" stop-color="#94c700"/><stop offset="0.968" stop-color="#c7c500"/><stop offset="1.000" stop-color="#c7bc00"/></linearGradient><linearGradient id="o57" gradientUnits="userSpaceOnUse" x1="534.2" y1="0" x2="1293.2" y2="0"><stop offset="0.000" stop-color="#00c7a8"/><stop offset="0.366" stop-color="#00c790"/><stop offset="0.531" stop-color="#00c771"/><stop offset="0.602" stop-color="#00c751"/><stop offset="0.610" stop-color="#1cc74f"/><stop offset="0.634" stop-color="#3bc74b"/><stop offset="0.709" stop-color="#6cc73d"/><stop offset="0.795" stop-color="#92c71f"/><stop offset="0.815" stop-color="#99c70d"/><stop offset="0.819" stop-color="#9bc700"/><stop offset="0.953" stop-color="#c7c400"/><stop offset="1.000" stop-color="#c7b800"/></linearGradient><linearGradient id="o58" gradientUnits="userSpaceOnUse" x1="534.7" y1="0" x2="1302.2" y2="0"><stop offset="0.000" stop-color="#00c7a8"/><stop offset="0.352" stop-color="#00c792"/><stop offset="0.516" stop-color="#00c775"/><stop offset="0.594" stop-color="#00c753"/><stop offset="0.598" stop-color="#17c752"/><stop offset="0.617" stop-color="#36c750"/><stop offset="0.680" stop-color="#63c745"/><stop offset="0.789" stop-color="#95c725"/><stop offset="0.820" stop-color="#a1c70c"/><stop offset="0.824" stop-color="#a3c700"/><stop offset="0.934" stop-color="#c7c400"/><stop offset="1.000" stop-color="#c7b300"/></linearGradient><linearGradient id="o59" gradientUnits="userSpaceOnUse" x1="535.3" y1="0" x2="1311.1" y2="0"><stop offset="0.000" stop-color="#00c7a9"/><stop offset="0.355" stop-color="#00c792"/><stop offset="0.510" stop-color="#00c776"/><stop offset="0.583" stop-color="#00c757"/><stop offset="0.587" stop-color="#16c756"/><stop offset="0.602" stop-color="#31c754"/><stop offset="0.660" stop-color="#5fc74a"/><stop offset="0.780" stop-color="#97c72c"/><stop offset="0.822" stop-color="#a8c711"/><stop offset="0.830" stop-color="#abc700"/><stop offset="0.919" stop-color="#c7c300"/><stop offset="1.000" stop-color="#c7ae00"/></linearGradient><linearGradient id="o60" gradientUnits="userSpaceOnUse" x1="535.8" y1="0" x2="1320.0" y2="0"><stop offset="0.000" stop-color="#00c7aa"/><stop offset="0.359" stop-color="#00c792"/><stop offset="0.511" stop-color="#00c774"/><stop offset="0.573" stop-color="#00c75a"/><stop offset="0.576" stop-color="#15c759"/><stop offset="0.592" stop-color="#31c757"/><stop offset="0.649" stop-color="#5fc74e"/><stop offset="0.779" stop-color="#9dc72f"/><stop offset="0.821" stop-color="#adc718"/><stop offset="0.836" stop-color="#b3c700"/><stop offset="0.901" stop-color="#c7c300"/><stop offset="1.000" stop-color="#c7aa00"/></linearGradient><linearGradient id="o61" gradientUnits="userSpaceOnUse" x1="536.4" y1="0" x2="1329.0" y2="0"><stop offset="0.000" stop-color="#00c7aa"/><stop offset="0.347" stop-color="#00c794"/><stop offset="0.502" stop-color="#00c777"/><stop offset="0.562" stop-color="#00c75d"/><stop offset="0.566" stop-color="#14c75c"/><stop offset="0.585" stop-color="#35c75a"/><stop offset="0.645" stop-color="#64c751"/><stop offset="0.789" stop-color="#a6c72e"/><stop offset="0.830" stop-color="#b7c713"/><stop offset="0.834" stop-color="#b8c70e"/><stop offset="0.838" stop-color="#b9c700"/><stop offset="0.891" stop-color="#c7c100"/><stop offset="1.000" stop-color="#c7a500"/></linearGradient><linearGradient id="o62" gradientUnits="userSpaceOnUse" x1="537.0" y1="0" x2="1337.9" y2="0"><stop offset="0.000" stop-color="#00c7ab"/><stop offset="0.352" stop-color="#00c794"/><stop offset="0.506" stop-color="#00c775"/><stop offset="0.551" stop-color="#00c762"/><stop offset="0.554" stop-color="#08c760"/><stop offset="0.562" stop-color="#22c75f"/><stop offset="0.596" stop-color="#49c75a"/><stop offset="0.685" stop-color="#80c74c"/><stop offset="0.801" stop-color="#b1c72b"/><stop offset="0.835" stop-color="#bfc713"/><stop offset="0.843" stop-color="#c1c700"/><stop offset="0.888" stop-color="#c7bc00"/><stop offset="1.000" stop-color="#c7a100"/></linearGradient><linearGradient id="o63" gradientUnits="userSpaceOnUse" x1="537.5" y1="0" x2="1346.8" y2="0"><stop offset="0.000" stop-color="#00c7ac"/><stop offset="0.356" stop-color="#00c794"/><stop offset="0.500" stop-color="#00c776"/><stop offset="0.544" stop-color="#00c763"/><stop offset="0.548" stop-color="#18c762"/><stop offset="0.567" stop-color="#37c760"/><stop offset="0.626" stop-color="#66c758"/><stop offset="0.778" stop-color="#aec737"/><stop offset="0.833" stop-color="#c4c71a"/><stop offset="0.844" stop-color="#c7c60a"/><stop offset="0.848" stop-color="#c7c400"/><stop offset="1.000" stop-color="#c79d00"/></linearGradient><linearGradient id="o64" gradientUnits="userSpaceOnUse" x1="538.3" y1="0" x2="1355.8" y2="0"><stop offset="0.000" stop-color="#00c7ac"/><stop offset="0.344" stop-color="#00c796"/><stop offset="0.487" stop-color="#00c77a"/><stop offset="0.535" stop-color="#00c766"/><stop offset="0.538" stop-color="#17c765"/><stop offset="0.553" stop-color="#33c764"/><stop offset="0.604" stop-color="#5fc75d"/><stop offset="0.733" stop-color="#a1c746"/><stop offset="0.824" stop-color="#c7c725"/><stop offset="0.846" stop-color="#c7bf0f"/><stop offset="0.853" stop-color="#c7bc00"/><stop offset="1.000" stop-color="#c79900"/></linearGradient><linearGradient id="o65" gradientUnits="userSpaceOnUse" x1="539.4" y1="0" x2="1364.7" y2="0"><stop offset="0.000" stop-color="#00c7ad"/><stop offset="0.341" stop-color="#00c797"/><stop offset="0.486" stop-color="#00c779"/><stop offset="0.525" stop-color="#00c769"/><stop offset="0.529" stop-color="#17c768"/><stop offset="0.543" stop-color="#33c767"/><stop offset="0.594" stop-color="#60c761"/><stop offset="0.732" stop-color="#a7c748"/><stop offset="0.819" stop-color="#c7c32a"/><stop offset="0.851" stop-color="#c7b70d"/><stop offset="0.855" stop-color="#c7b600"/><stop offset="1.000" stop-color="#c79500"/></linearGradient><linearGradient id="o66" gradientUnits="userSpaceOnUse" x1="540.5" y1="0" x2="1373.6" y2="0"><stop offset="0.000" stop-color="#00c7ad"/><stop offset="0.327" stop-color="#00c799"/><stop offset="0.475" stop-color="#00c77c"/><stop offset="0.514" stop-color="#00c76d"/><stop offset="0.522" stop-color="#1dc76b"/><stop offset="0.543" stop-color="#3ec769"/><stop offset="0.608" stop-color="#6fc761"/><stop offset="0.770" stop-color="#bdc740"/><stop offset="0.809" stop-color="#c7c130"/><stop offset="0.849" stop-color="#c7b316"/><stop offset="0.860" stop-color="#c7af00"/><stop offset="1.000" stop-color="#c79100"/></linearGradient><linearGradient id="o67" gradientUnits="userSpaceOnUse" x1="541.6" y1="0" x2="1382.5" y2="0"><stop offset="0.000" stop-color="#00c7ae"/><stop offset="0.331" stop-color="#00c799"/><stop offset="0.470" stop-color="#00c77e"/><stop offset="0.505" stop-color="#00c770"/><stop offset="0.512" stop-color="#1dc76e"/><stop offset="0.534" stop-color="#3ec76c"/><stop offset="0.598" stop-color="#70c764"/><stop offset="0.769" stop-color="#c3c743"/><stop offset="0.847" stop-color="#c7ae1b"/><stop offset="0.861" stop-color="#c7aa08"/><stop offset="0.865" stop-color="#c7a900"/><stop offset="1.000" stop-color="#c78d00"/></linearGradient><linearGradient id="o68" gradientUnits="userSpaceOnUse" x1="542.7" y1="0" x2="1391.5" y2="0"><stop offset="0.000" stop-color="#00c7af"/><stop offset="0.336" stop-color="#00c799"/><stop offset="0.477" stop-color="#00c77b"/><stop offset="0.498" stop-color="#00c772"/><stop offset="0.502" stop-color="#18c771"/><stop offset="0.516" stop-color="#34c770"/><stop offset="0.569" stop-color="#64c76a"/><stop offset="0.703" stop-color="#acc755"/><stop offset="0.774" stop-color="#c7c342"/><stop offset="0.852" stop-color="#c7a81a"/><stop offset="0.869" stop-color="#c7a200"/><stop offset="1.000" stop-color="#c78900"/></linearGradient><linearGradient id="o69" gradientUnits="userSpaceOnUse" x1="543.9" y1="0" x2="1400.4" y2="0"><stop offset="0.000" stop-color="#00c7af"/><stop offset="0.325" stop-color="#00c79b"/><stop offset="0.462" stop-color="#00c780"/><stop offset="0.490" stop-color="#00c775"/><stop offset="0.493" stop-color="#18c774"/><stop offset="0.510" stop-color="#39c772"/><stop offset="0.570" stop-color="#6cc76c"/><stop offset="0.727" stop-color="#bdc752"/><stop offset="0.766" stop-color="#c7c046"/><stop offset="0.853" stop-color="#c7a21b"/><stop offset="0.867" stop-color="#c79e0c"/><stop offset="0.871" stop-color="#c79d00"/><stop offset="1.000" stop-color="#c78600"/></linearGradient><linearGradient id="o70" gradientUnits="userSpaceOnUse" x1="545.1" y1="0" x2="1409.3" y2="0"><stop offset="0.000" stop-color="#00c7b0"/><stop offset="0.322" stop-color="#00c79c"/><stop offset="0.460" stop-color="#00c780"/><stop offset="0.481" stop-color="#00c778"/><stop offset="0.484" stop-color="#18c777"/><stop offset="0.502" stop-color="#39c775"/><stop offset="0.557" stop-color="#6ac770"/><stop offset="0.702" stop-color="#b8c75a"/><stop offset="0.747" stop-color="#c7c24e"/><stop offset="0.858" stop-color="#c79c1a"/><stop offset="0.872" stop-color="#c79809"/><stop offset="0.875" stop-color="#c79700"/><stop offset="1.000" stop-color="#c78200"/></linearGradient><linearGradient id="o71" gradientUnits="userSpaceOnUse" x1="546.3" y1="0" x2="1418.3" y2="0"><stop offset="0.000" stop-color="#00c7b1"/><stop offset="0.330" stop-color="#00c79c"/><stop offset="0.457" stop-color="#00c780"/><stop offset="0.471" stop-color="#00c77b"/><stop offset="0.478" stop-color="#1ec77a"/><stop offset="0.498" stop-color="#40c778"/><stop offset="0.560" stop-color="#73c771"/><stop offset="0.722" stop-color="#c7c758"/><stop offset="0.856" stop-color="#c7981e"/><stop offset="0.876" stop-color="#c79307"/><stop offset="0.883" stop-color="#c79100"/><stop offset="1.000" stop-color="#c77e00"/></linearGradient><linearGradient id="o72" gradientUnits="userSpaceOnUse" x1="547.6" y1="0" x2="1427.2" y2="0"><stop offset="0.000" stop-color="#00c7b2"/><stop offset="0.327" stop-color="#00c79d"/><stop offset="0.456" stop-color="#00c781"/><stop offset="0.463" stop-color="#00c77e"/><stop offset="0.469" stop-color="#1ec77d"/><stop offset="0.490" stop-color="#40c77b"/><stop offset="0.544" stop-color="#6fc775"/><stop offset="0.690" stop-color="#bfc761"/><stop offset="0.721" stop-color="#c7c158"/><stop offset="0.861" stop-color="#c7921c"/><stop offset="0.878" stop-color="#c78e0c"/><stop offset="0.881" stop-color="#c78d00"/><stop offset="1.000" stop-color="#c77b00"/></linearGradient><linearGradient id="o73" gradientUnits="userSpaceOnUse" x1="548.8" y1="0" x2="1436.1" y2="0"><stop offset="0.000" stop-color="#00c7b2"/><stop offset="0.318" stop-color="#00c79f"/><stop offset="0.449" stop-color="#00c783"/><stop offset="0.456" stop-color="#00c780"/><stop offset="0.459" stop-color="#19c780"/><stop offset="0.476" stop-color="#3ac77e"/><stop offset="0.527" stop-color="#6ac77a"/><stop offset="0.659" stop-color="#b6c769"/><stop offset="0.703" stop-color="#c7c35f"/><stop offset="0.851" stop-color="#c79023"/><stop offset="0.882" stop-color="#c7890b"/><stop offset="0.885" stop-color="#c78800"/><stop offset="1.000" stop-color="#c77700"/></linearGradient><linearGradient id="o74" gradientUnits="userSpaceOnUse" x1="550.0" y1="0" x2="1445.1" y2="0"><stop offset="0.000" stop-color="#00c7b3"/><stop offset="0.314" stop-color="#00c7a0"/><stop offset="0.438" stop-color="#00c787"/><stop offset="0.448" stop-color="#00c783"/><stop offset="0.452" stop-color="#1ac783"/><stop offset="0.468" stop-color="#3bc781"/><stop offset="0.518" stop-color="#6bc77d"/><stop offset="0.662" stop-color="#bec76b"/><stop offset="0.696" stop-color="#c7c061"/><stop offset="0.846" stop-color="#c78d27"/><stop offset="0.883" stop-color="#c7850e"/><stop offset="0.890" stop-color="#c78300"/><stop offset="1.000" stop-color="#c77400"/></linearGradient><linearGradient id="o75" gradientUnits="userSpaceOnUse" x1="551.3" y1="0" x2="1454.0" y2="0"><stop offset="0.000" stop-color="#00c7b4"/><stop offset="0.322" stop-color="#00c7a0"/><stop offset="0.439" stop-color="#00c786"/><stop offset="0.445" stop-color="#1fc785"/><stop offset="0.465" stop-color="#42c784"/><stop offset="0.522" stop-color="#74c77f"/><stop offset="0.668" stop-color="#c7c76c"/><stop offset="0.801" stop-color="#c7953a"/><stop offset="0.877" stop-color="#c78217"/><stop offset="0.897" stop-color="#c77e00"/><stop offset="1.000" stop-color="#c77000"/></linearGradient><linearGradient id="o76" gradientUnits="userSpaceOnUse" x1="552.5" y1="0" x2="1462.9" y2="0"><stop offset="0.000" stop-color="#00c7b5"/><stop offset="0.319" stop-color="#00c7a1"/><stop offset="0.431" stop-color="#00c789"/><stop offset="0.438" stop-color="#20c788"/><stop offset="0.457" stop-color="#42c787"/><stop offset="0.507" stop-color="#70c783"/><stop offset="0.645" stop-color="#c2c773"/><stop offset="0.694" stop-color="#c7b561"/><stop offset="0.865" stop-color="#c78020"/><stop offset="0.891" stop-color="#c77b0b"/><stop offset="0.895" stop-color="#c77a00"/><stop offset="1.000" stop-color="#c76d00"/></linearGradient><linearGradient id="o77" gradientUnits="userSpaceOnUse" x1="553.8" y1="0" x2="1471.9" y2="0"><stop offset="0.000" stop-color="#00c7b5"/><stop offset="0.313" stop-color="#00c7a3"/><stop offset="0.423" stop-color="#00c78c"/><stop offset="0.430" stop-color="#20c78b"/><stop offset="0.450" stop-color="#43c78a"/><stop offset="0.508" stop-color="#78c785"/><stop offset="0.645" stop-color="#c7c574"/><stop offset="0.779" stop-color="#c79243"/><stop offset="0.883" stop-color="#c77917"/><stop offset="0.896" stop-color="#c77609"/><stop offset="0.899" stop-color="#c77500"/><stop offset="1.000" stop-color="#c76900"/></linearGradient><linearGradient id="o78" gradientUnits="userSpaceOnUse" x1="555.0" y1="0" x2="1480.8" y2="0"><stop offset="0.000" stop-color="#00c7b6"/><stop offset="0.314" stop-color="#00c7a4"/><stop offset="0.414" stop-color="#00c790"/><stop offset="0.417" stop-color="#05c78e"/><stop offset="0.421" stop-color="#1bc78e"/><stop offset="0.437" stop-color="#3dc78d"/><stop offset="0.485" stop-color="#6ec789"/><stop offset="0.618" stop-color="#c1c77c"/><stop offset="0.657" stop-color="#c7b96e"/><stop offset="0.799" stop-color="#c7883c"/><stop offset="0.887" stop-color="#c77416"/><stop offset="0.900" stop-color="#c77107"/><stop offset="0.906" stop-color="#c77000"/><stop offset="1.000" stop-color="#c76600"/></linearGradient><linearGradient id="o79" gradientUnits="userSpaceOnUse" x1="556.2" y1="0" x2="1489.7" y2="0"><stop offset="0.000" stop-color="#00c7b7"/><stop offset="0.314" stop-color="#00c7a5"/><stop offset="0.407" stop-color="#00c792"/><stop offset="0.410" stop-color="#09c791"/><stop offset="0.413" stop-color="#1cc791"/><stop offset="0.429" stop-color="#3dc790"/><stop offset="0.478" stop-color="#6fc78d"/><stop offset="0.615" stop-color="#c6c77f"/><stop offset="0.744" stop-color="#c7944e"/><stop offset="0.885" stop-color="#c7701a"/><stop offset="0.901" stop-color="#c76d0c"/><stop offset="0.907" stop-color="#c76c00"/><stop offset="1.000" stop-color="#c76200"/></linearGradient><linearGradient id="o80" gradientUnits="userSpaceOnUse" x1="557.5" y1="0" x2="1498.6" y2="0"><stop offset="0.000" stop-color="#00c7b8"/><stop offset="0.315" stop-color="#00c7a6"/><stop offset="0.401" stop-color="#00c795"/><stop offset="0.408" stop-color="#21c794"/><stop offset="0.430" stop-color="#49c793"/><stop offset="0.494" stop-color="#82c78e"/><stop offset="0.608" stop-color="#c7c582"/><stop offset="0.726" stop-color="#c79554"/><stop offset="0.885" stop-color="#c76c1b"/><stop offset="0.904" stop-color="#c7690a"/><stop offset="0.908" stop-color="#c76800"/><stop offset="1.000" stop-color="#c75e00"/></linearGradient><linearGradient id="o81" gradientUnits="userSpaceOnUse" x1="558.7" y1="0" x2="1507.6" y2="0"><stop offset="0.000" stop-color="#00c7b9"/><stop offset="0.315" stop-color="#00c7a7"/><stop offset="0.394" stop-color="#00c798"/><stop offset="0.397" stop-color="#16c797"/><stop offset="0.410" stop-color="#37c796"/><stop offset="0.451" stop-color="#67c794"/><stop offset="0.552" stop-color="#aec78c"/><stop offset="0.599" stop-color="#c7c484"/><stop offset="0.719" stop-color="#c79256"/><stop offset="0.886" stop-color="#c7681c"/><stop offset="0.909" stop-color="#c76408"/><stop offset="0.915" stop-color="#c76300"/><stop offset="1.000" stop-color="#c75b00"/></linearGradient><linearGradient id="o82" gradientUnits="userSpaceOnUse" x1="559.9" y1="0" x2="1516.5" y2="0"><stop offset="0.000" stop-color="#00c7b9"/><stop offset="0.310" stop-color="#00c7a9"/><stop offset="0.386" stop-color="#00c79b"/><stop offset="0.389" stop-color="#07c79a"/><stop offset="0.392" stop-color="#1cc79a"/><stop offset="0.404" stop-color="#3ac799"/><stop offset="0.448" stop-color="#6cc797"/><stop offset="0.558" stop-color="#b9c78e"/><stop offset="0.589" stop-color="#c7c388"/><stop offset="0.699" stop-color="#c7945c"/><stop offset="0.887" stop-color="#c7641d"/><stop offset="0.912" stop-color="#c75f07"/><stop offset="0.918" stop-color="#c75f00"/><stop offset="1.000" stop-color="#c75700"/></linearGradient><linearGradient id="o83" gradientUnits="userSpaceOnUse" x1="561.3" y1="0" x2="1525.4" y2="0"><stop offset="0.000" stop-color="#00c7ba"/><stop offset="0.311" stop-color="#00c7aa"/><stop offset="0.379" stop-color="#00c79e"/><stop offset="0.388" stop-color="#27c79d"/><stop offset="0.410" stop-color="#4dc79c"/><stop offset="0.472" stop-color="#86c798"/><stop offset="0.575" stop-color="#c7c48e"/><stop offset="0.696" stop-color="#c7905d"/><stop offset="0.891" stop-color="#c7601c"/><stop offset="0.913" stop-color="#c75b0b"/><stop offset="0.919" stop-color="#c75b00"/><stop offset="1.000" stop-color="#c75400"/></linearGradient><linearGradient id="o84" gradientUnits="userSpaceOnUse" x1="563.0" y1="0" x2="1534.4" y2="0"><stop offset="0.000" stop-color="#00c7bb"/><stop offset="0.306" stop-color="#00c7ac"/><stop offset="0.373" stop-color="#00c7a1"/><stop offset="0.377" stop-color="#18c7a0"/><stop offset="0.389" stop-color="#39c7a0"/><stop offset="0.432" stop-color="#6dc79d"/><stop offset="0.556" stop-color="#c5c794"/><stop offset="0.682" stop-color="#c79061"/><stop offset="0.895" stop-color="#c75b1b"/><stop offset="0.917" stop-color="#c75709"/><stop offset="0.920" stop-color="#c75600"/><stop offset="1.000" stop-color="#c75000"/></linearGradient><linearGradient id="o85" gradientUnits="userSpaceOnUse" x1="564.7" y1="0" x2="1543.3" y2="0"><stop offset="0.000" stop-color="#00c7bc"/><stop offset="0.312" stop-color="#00c7ad"/><stop offset="0.367" stop-color="#00c7a4"/><stop offset="0.370" stop-color="#1ac7a3"/><stop offset="0.382" stop-color="#3ac7a3"/><stop offset="0.419" stop-color="#68c7a1"/><stop offset="0.517" stop-color="#b3c79b"/><stop offset="0.554" stop-color="#c7c395"/><stop offset="0.670" stop-color="#c78f65"/><stop offset="0.896" stop-color="#c7571c"/><stop offset="0.920" stop-color="#c75207"/><stop offset="0.927" stop-color="#c75200"/><stop offset="1.000" stop-color="#c74c00"/></linearGradient><linearGradient id="o86" gradientUnits="userSpaceOnUse" x1="566.4" y1="0" x2="1552.2" y2="0"><stop offset="0.000" stop-color="#00c7bd"/><stop offset="0.316" stop-color="#00c7ae"/><stop offset="0.359" stop-color="#00c7a7"/><stop offset="0.365" stop-color="#21c7a6"/><stop offset="0.380" stop-color="#42c7a6"/><stop offset="0.429" stop-color="#79c7a3"/><stop offset="0.538" stop-color="#c7c69c"/><stop offset="0.647" stop-color="#c7926c"/><stop offset="0.857" stop-color="#c75b2c"/><stop offset="0.918" stop-color="#c74f0f"/><stop offset="0.930" stop-color="#c74d00"/><stop offset="1.000" stop-color="#c74800"/></linearGradient><linearGradient id="o87" gradientUnits="userSpaceOnUse" x1="568.1" y1="0" x2="1561.2" y2="0"><stop offset="0.000" stop-color="#00c7be"/><stop offset="0.322" stop-color="#00c7af"/><stop offset="0.352" stop-color="#00c7aa"/><stop offset="0.355" stop-color="#16c7aa"/><stop offset="0.364" stop-color="#33c7a9"/><stop offset="0.392" stop-color="#5cc7a8"/><stop offset="0.467" stop-color="#9ec7a4"/><stop offset="0.530" stop-color="#c7c49e"/><stop offset="0.630" stop-color="#c79471"/><stop offset="0.819" stop-color="#c75f38"/><stop offset="0.913" stop-color="#c74c15"/><stop offset="0.925" stop-color="#c7490a"/><stop offset="0.928" stop-color="#c74900"/><stop offset="1.000" stop-color="#c74400"/></linearGradient><linearGradient id="o88" gradientUnits="userSpaceOnUse" x1="569.8" y1="0" x2="1570.1" y2="0"><stop offset="0.000" stop-color="#00c7bf"/><stop offset="0.320" stop-color="#00c7b1"/><stop offset="0.344" stop-color="#00c7ad"/><stop offset="0.353" stop-color="#28c7ad"/><stop offset="0.371" stop-color="#4bc7ac"/><stop offset="0.422" stop-color="#82c7aa"/><stop offset="0.518" stop-color="#c7c5a3"/><stop offset="0.614" stop-color="#c79576"/><stop offset="0.784" stop-color="#c76342"/><stop offset="0.907" stop-color="#c7491a"/><stop offset="0.928" stop-color="#c74509"/><stop offset="0.931" stop-color="#c74400"/><stop offset="1.000" stop-color="#c74000"/></linearGradient><linearGradient id="o89" gradientUnits="userSpaceOnUse" x1="571.5" y1="0" x2="1579.0" y2="0"><stop offset="0.000" stop-color="#00c7c0"/><stop offset="0.327" stop-color="#00c7b2"/><stop offset="0.339" stop-color="#00c7b0"/><stop offset="0.342" stop-color="#18c7b0"/><stop offset="0.354" stop-color="#3bc7b0"/><stop offset="0.393" stop-color="#6ec7ae"/><stop offset="0.494" stop-color="#c0c7aa"/><stop offset="0.521" stop-color="#c7bc9f"/><stop offset="0.622" stop-color="#c78d72"/><stop offset="0.815" stop-color="#c7583a"/><stop offset="0.920" stop-color="#c74214"/><stop offset="0.938" stop-color="#c73f00"/><stop offset="1.000" stop-color="#c73b00"/></linearGradient><linearGradient id="o90" gradientUnits="userSpaceOnUse" x1="573.2" y1="0" x2="1588.0" y2="0"><stop offset="0.000" stop-color="#00c7c1"/><stop offset="0.330" stop-color="#00c7b4"/><stop offset="0.333" stop-color="#00c7b3"/><stop offset="0.336" stop-color="#1bc7b3"/><stop offset="0.348" stop-color="#3cc7b3"/><stop offset="0.381" stop-color="#69c7b2"/><stop offset="0.466" stop-color="#b3c7af"/><stop offset="0.499" stop-color="#c7c3aa"/><stop offset="0.602" stop-color="#c78f79"/><stop offset="0.796" stop-color="#c7583f"/><stop offset="0.917" stop-color="#c73e17"/><stop offset="0.935" stop-color="#c73a04"/><stop offset="1.000" stop-color="#c73700"/></linearGradient><linearGradient id="o91" gradientUnits="userSpaceOnUse" x1="574.9" y1="0" x2="1596.9" y2="0"><stop offset="0.000" stop-color="#00c7c2"/><stop offset="0.326" stop-color="#00c7b7"/><stop offset="0.331" stop-color="#22c7b6"/><stop offset="0.349" stop-color="#4ac7b6"/><stop offset="0.396" stop-color="#81c7b5"/><stop offset="0.487" stop-color="#c7c4af"/><stop offset="0.584" stop-color="#c7917f"/><stop offset="0.774" stop-color="#c75945"/><stop offset="0.918" stop-color="#c73918"/><stop offset="0.935" stop-color="#c73509"/><stop offset="0.938" stop-color="#c73400"/><stop offset="1.000" stop-color="#c73200"/></linearGradient><linearGradient id="o92" gradientUnits="userSpaceOnUse" x1="576.6" y1="0" x2="1605.8" y2="0"><stop offset="0.000" stop-color="#00c7c3"/><stop offset="0.320" stop-color="#00c7ba"/><stop offset="0.323" stop-color="#17c7ba"/><stop offset="0.334" stop-color="#3bc7ba"/><stop offset="0.366" stop-color="#6ac7b9"/><stop offset="0.451" stop-color="#b6c7b7"/><stop offset="0.477" stop-color="#c7c4b4"/><stop offset="0.567" stop-color="#c79384"/><stop offset="0.733" stop-color="#c75f50"/><stop offset="0.910" stop-color="#c7361d"/><stop offset="0.939" stop-color="#c72f08"/><stop offset="0.942" stop-color="#c72e00"/><stop offset="1.000" stop-color="#c72c00"/></linearGradient><linearGradient id="o93" gradientUnits="userSpaceOnUse" x1="578.3" y1="0" x2="1614.7" y2="0"><stop offset="0.000" stop-color="#00c7c4"/><stop offset="0.312" stop-color="#00c7bd"/><stop offset="0.315" stop-color="#09c7bd"/><stop offset="0.318" stop-color="#1fc7bd"/><stop offset="0.332" stop-color="#45c7bd"/><stop offset="0.376" stop-color="#7cc7bc"/><stop offset="0.465" stop-color="#c7c5b9"/><stop offset="0.552" stop-color="#c79489"/><stop offset="0.708" stop-color="#c76157"/><stop offset="0.916" stop-color="#c72f1b"/><stop offset="0.939" stop-color="#c7290b"/><stop offset="0.948" stop-color="#c72700"/><stop offset="1.000" stop-color="#c72500"/></linearGradient><linearGradient id="o94" gradientUnits="userSpaceOnUse" x1="580.0" y1="0" x2="1623.7" y2="0"><stop offset="0.000" stop-color="#00c7c5"/><stop offset="0.307" stop-color="#00c7c1"/><stop offset="0.310" stop-color="#18c7c1"/><stop offset="0.319" stop-color="#36c7c1"/><stop offset="0.345" stop-color="#62c7c0"/><stop offset="0.420" stop-color="#acc7c0"/><stop offset="0.457" stop-color="#c7c4bc"/><stop offset="0.537" stop-color="#c7958e"/><stop offset="0.695" stop-color="#c7605a"/><stop offset="0.914" stop-color="#c72a1d"/><stop offset="0.943" stop-color="#c7200a"/><stop offset="0.951" stop-color="#c71f00"/><stop offset="1.000" stop-color="#c71e00"/></linearGradient><linearGradient id="o95" gradientUnits="userSpaceOnUse" x1="581.7" y1="0" x2="1632.6" y2="0"><stop offset="0.000" stop-color="#00c7c6"/><stop offset="0.302" stop-color="#00c7c4"/><stop offset="0.305" stop-color="#1bc7c4"/><stop offset="0.313" stop-color="#38c7c4"/><stop offset="0.342" stop-color="#67c7c4"/><stop offset="0.413" stop-color="#aec7c4"/><stop offset="0.447" stop-color="#c7c3c0"/><stop offset="0.533" stop-color="#c7928f"/><stop offset="0.687" stop-color="#c75e5c"/><stop offset="0.920" stop-color="#c7201b"/><stop offset="0.946" stop-color="#c71509"/><stop offset="0.949" stop-color="#c71300"/><stop offset="1.000" stop-color="#c71200"/></linearGradient><linearGradient id="o96" gradientUnits="userSpaceOnUse" x1="583.9" y1="0" x2="1641.5" y2="0"><stop offset="0.000" stop-color="#00c7c7"/><stop offset="0.295" stop-color="#00c6c7"/><stop offset="0.300" stop-color="#24c6c7"/><stop offset="0.314" stop-color="#48c6c7"/><stop offset="0.354" stop-color="#7dc6c7"/><stop offset="0.436" stop-color="#c7c4c5"/><stop offset="0.516" stop-color="#c79495"/><stop offset="0.669" stop-color="#c75f60"/><stop offset="0.909" stop-color="#c71c20"/><stop offset="0.938" stop-color="#c70613"/><stop offset="0.946" stop-color="#c70012"/><stop offset="1.000" stop-color="#c70011"/></linearGradient><linearGradient id="o97" gradientUnits="userSpaceOnUse" x1="586.1" y1="0" x2="1650.3" y2="0"><stop offset="0.000" stop-color="#00c6c7"/><stop offset="0.287" stop-color="#00c3c7"/><stop offset="0.290" stop-color="#07c3c7"/><stop offset="0.293" stop-color="#1fc2c7"/><stop offset="0.304" stop-color="#40c2c7"/><stop offset="0.341" stop-color="#75c2c7"/><stop offset="0.431" stop-color="#c7c0c6"/><stop offset="0.513" stop-color="#c79095"/><stop offset="0.665" stop-color="#c75b61"/><stop offset="0.885" stop-color="#c71d29"/><stop offset="0.913" stop-color="#c70a20"/><stop offset="0.918" stop-color="#c7001e"/><stop offset="1.000" stop-color="#c7001d"/></linearGradient><linearGradient id="o98" gradientUnits="userSpaceOnUse" x1="588.4" y1="0" x2="1659.0" y2="0"><stop offset="0.000" stop-color="#00c4c7"/><stop offset="0.283" stop-color="#00bfc7"/><stop offset="0.286" stop-color="#19bfc7"/><stop offset="0.294" stop-color="#36bfc7"/><stop offset="0.319" stop-color="#61bfc7"/><stop offset="0.384" stop-color="#a4bdc7"/><stop offset="0.429" stop-color="#c7bac5"/><stop offset="0.510" stop-color="#c78c95"/><stop offset="0.667" stop-color="#c75660"/><stop offset="0.863" stop-color="#c71d30"/><stop offset="0.891" stop-color="#c70928"/><stop offset="0.894" stop-color="#c70027"/><stop offset="1.000" stop-color="#c70024"/></linearGradient><linearGradient id="o99" gradientUnits="userSpaceOnUse" x1="590.7" y1="0" x2="1667.7" y2="0"><stop offset="0.000" stop-color="#00c3c7"/><stop offset="0.278" stop-color="#00bcc7"/><stop offset="0.281" stop-color="#1ebcc7"/><stop offset="0.294" stop-color="#44bbc7"/><stop offset="0.333" stop-color="#78bac7"/><stop offset="0.422" stop-color="#c7b8c6"/><stop offset="0.506" stop-color="#c78895"/><stop offset="0.672" stop-color="#c7505e"/><stop offset="0.842" stop-color="#c71c35"/><stop offset="0.869" stop-color="#c7072e"/><stop offset="0.875" stop-color="#c7002e"/><stop offset="1.000" stop-color="#c70029"/></linearGradient><linearGradient id="o100" gradientUnits="userSpaceOnUse" x1="592.9" y1="0" x2="1676.4" y2="0"><stop offset="0.000" stop-color="#00c2c7"/><stop offset="0.271" stop-color="#00b8c7"/><stop offset="0.273" stop-color="#18b8c7"/><stop offset="0.285" stop-color="#3cb8c7"/><stop offset="0.318" stop-color="#6db7c7"/><stop offset="0.403" stop-color="#bcb4c7"/><stop offset="0.423" stop-color="#c7b0c3"/><stop offset="0.508" stop-color="#c78193"/><stop offset="0.660" stop-color="#c74f61"/><stop offset="0.826" stop-color="#c71a39"/><stop offset="0.845" stop-color="#c70b35"/><stop offset="0.854" stop-color="#c70034"/><stop offset="1.000" stop-color="#c7002e"/></linearGradient><linearGradient id="o101" gradientUnits="userSpaceOnUse" x1="595.2" y1="0" x2="1685.1" y2="0"><stop offset="0.000" stop-color="#00c1c7"/><stop offset="0.264" stop-color="#00b5c7"/><stop offset="0.269" stop-color="#20b5c7"/><stop offset="0.283" stop-color="#44b4c7"/><stop offset="0.321" stop-color="#77b3c7"/><stop offset="0.412" stop-color="#c6b0c7"/><stop offset="0.503" stop-color="#c77f94"/><stop offset="0.662" stop-color="#c74a60"/><stop offset="0.805" stop-color="#c71a3f"/><stop offset="0.824" stop-color="#c70a3a"/><stop offset="0.827" stop-color="#c70039"/><stop offset="1.000" stop-color="#c70032"/></linearGradient><linearGradient id="o102" gradientUnits="userSpaceOnUse" x1="597.6" y1="0" x2="1693.8" y2="0"><stop offset="0.000" stop-color="#00c0c7"/><stop offset="0.260" stop-color="#00b2c7"/><stop offset="0.262" stop-color="#1bb2c7"/><stop offset="0.273" stop-color="#3cb1c7"/><stop offset="0.306" stop-color="#6cb0c7"/><stop offset="0.393" stop-color="#bbacc7"/><stop offset="0.415" stop-color="#c7a7c2"/><stop offset="0.511" stop-color="#c7768f"/><stop offset="0.694" stop-color="#c73b58"/><stop offset="0.790" stop-color="#c71642"/><stop offset="0.803" stop-color="#c7093f"/><stop offset="0.806" stop-color="#c7003f"/><stop offset="1.000" stop-color="#c70035"/></linearGradient><linearGradient id="o103" gradientUnits="userSpaceOnUse" x1="600.0" y1="0" x2="1704.3" y2="0"><stop offset="0.000" stop-color="#00bec7"/><stop offset="0.238" stop-color="#00b1c7"/><stop offset="0.252" stop-color="#00afc7"/><stop offset="0.257" stop-color="#22aec7"/><stop offset="0.271" stop-color="#44aec7"/><stop offset="0.314" stop-color="#7bacc7"/><stop offset="0.407" stop-color="#c7a5c5"/><stop offset="0.496" stop-color="#c77694"/><stop offset="0.667" stop-color="#c73e5e"/><stop offset="0.767" stop-color="#c71747"/><stop offset="0.780" stop-color="#c70944"/><stop offset="0.783" stop-color="#c70044"/><stop offset="1.000" stop-color="#c70038"/></linearGradient><linearGradient id="o104" gradientUnits="userSpaceOnUse" x1="602.4" y1="0" x2="1715.0" y2="0"><stop offset="0.000" stop-color="#00bdc7"/><stop offset="0.235" stop-color="#00aec7"/><stop offset="0.245" stop-color="#00acc7"/><stop offset="0.251" stop-color="#20abc7"/><stop offset="0.264" stop-color="#42aac7"/><stop offset="0.302" stop-color="#74a9c7"/><stop offset="0.399" stop-color="#c7a3c7"/><stop offset="0.493" stop-color="#c77293"/><stop offset="0.668" stop-color="#c7375d"/><stop offset="0.747" stop-color="#c7154b"/><stop offset="0.765" stop-color="#c70048"/><stop offset="1.000" stop-color="#c7003b"/></linearGradient><linearGradient id="o105" gradientUnits="userSpaceOnUse" x1="604.9" y1="0" x2="1720.4" y2="0"><stop offset="0.000" stop-color="#00bcc7"/><stop offset="0.223" stop-color="#00acc7"/><stop offset="0.242" stop-color="#00a8c7"/><stop offset="0.245" stop-color="#1ba8c7"/><stop offset="0.255" stop-color="#3ba7c7"/><stop offset="0.288" stop-color="#69a6c7"/><stop offset="0.363" stop-color="#ada1c7"/><stop offset="0.401" stop-color="#c79cc4"/><stop offset="0.492" stop-color="#c76e93"/><stop offset="0.669" stop-color="#c7315d"/><stop offset="0.734" stop-color="#c7114f"/><stop offset="0.739" stop-color="#c70a4d"/><stop offset="0.742" stop-color="#c7004d"/><stop offset="1.000" stop-color="#c7003d"/></linearGradient><linearGradient id="o106" gradientUnits="userSpaceOnUse" x1="607.3" y1="0" x2="1719.1" y2="0"><stop offset="0.000" stop-color="#00bac7"/><stop offset="0.216" stop-color="#00aac7"/><stop offset="0.237" stop-color="#00a5c7"/><stop offset="0.243" stop-color="#21a5c7"/><stop offset="0.256" stop-color="#42a4c7"/><stop offset="0.296" stop-color="#76a2c7"/><stop offset="0.396" stop-color="#c79ac7"/><stop offset="0.488" stop-color="#c76c95"/><stop offset="0.663" stop-color="#c72f60"/><stop offset="0.720" stop-color="#c71153"/><stop offset="0.725" stop-color="#c70a52"/><stop offset="0.728" stop-color="#c70051"/><stop offset="1.000" stop-color="#c70040"/></linearGradient><linearGradient id="o107" gradientUnits="userSpaceOnUse" x1="609.8" y1="0" x2="1700.1" y2="0"><stop offset="0.000" stop-color="#00b9c7"/><stop offset="0.212" stop-color="#00a8c7"/><stop offset="0.236" stop-color="#00a3c7"/><stop offset="0.239" stop-color="#06a2c7"/><stop offset="0.242" stop-color="#1ca2c7"/><stop offset="0.255" stop-color="#40a1c7"/><stop offset="0.294" stop-color="#719ec7"/><stop offset="0.396" stop-color="#c296c7"/><stop offset="0.437" stop-color="#c782b1"/><stop offset="0.560" stop-color="#c7517f"/><stop offset="0.706" stop-color="#c71a5a"/><stop offset="0.723" stop-color="#c70a56"/><stop offset="0.725" stop-color="#c70056"/><stop offset="1.000" stop-color="#c70043"/></linearGradient><linearGradient id="o108" gradientUnits="userSpaceOnUse" x1="612.2" y1="0" x2="1681.1" y2="0"><stop offset="0.000" stop-color="#00b8c7"/><stop offset="0.207" stop-color="#00a6c7"/><stop offset="0.238" stop-color="#009fc7"/><stop offset="0.241" stop-color="#169fc7"/><stop offset="0.249" stop-color="#329ec7"/><stop offset="0.277" stop-color="#5d9cc7"/><stop offset="0.353" stop-color="#a097c7"/><stop offset="0.412" stop-color="#c78fc4"/><stop offset="0.521" stop-color="#c75e90"/><stop offset="0.697" stop-color="#c71d60"/><stop offset="0.720" stop-color="#c70a5b"/><stop offset="0.723" stop-color="#c7005a"/><stop offset="1.000" stop-color="#c70047"/></linearGradient><linearGradient id="o109" gradientUnits="userSpaceOnUse" x1="614.6" y1="0" x2="1662.0" y2="0"><stop offset="0.000" stop-color="#00b6c7"/><stop offset="0.206" stop-color="#00a4c7"/><stop offset="0.237" stop-color="#009cc7"/><stop offset="0.246" stop-color="#289bc7"/><stop offset="0.266" stop-color="#4d9ac7"/><stop offset="0.326" stop-color="#8896c7"/><stop offset="0.417" stop-color="#c78cc5"/><stop offset="0.529" stop-color="#c75b91"/><stop offset="0.697" stop-color="#c71c63"/><stop offset="0.717" stop-color="#c70a5f"/><stop offset="0.720" stop-color="#c7005f"/><stop offset="1.000" stop-color="#c7004a"/></linearGradient><linearGradient id="o110" gradientUnits="userSpaceOnUse" x1="617.1" y1="0" x2="1643.0" y2="0"><stop offset="0.000" stop-color="#00b5c7"/><stop offset="0.208" stop-color="#00a1c7"/><stop offset="0.237" stop-color="#009ac7"/><stop offset="0.240" stop-color="#0799c7"/><stop offset="0.243" stop-color="#1c99c7"/><stop offset="0.257" stop-color="#3f98c7"/><stop offset="0.304" stop-color="#7494c7"/><stop offset="0.424" stop-color="#c787c5"/><stop offset="0.532" stop-color="#c75994"/><stop offset="0.696" stop-color="#c71b67"/><stop offset="0.713" stop-color="#c70b64"/><stop offset="0.719" stop-color="#c70063"/><stop offset="1.000" stop-color="#c7004d"/></linearGradient><linearGradient id="o111" gradientUnits="userSpaceOnUse" x1="619.5" y1="0" x2="1624.0" y2="0"><stop offset="0.000" stop-color="#00b3c7"/><stop offset="0.200" stop-color="#00a0c7"/><stop offset="0.239" stop-color="#0096c7"/><stop offset="0.242" stop-color="#1696c7"/><stop offset="0.254" stop-color="#3795c7"/><stop offset="0.293" stop-color="#6792c7"/><stop offset="0.397" stop-color="#b488c7"/><stop offset="0.436" stop-color="#c781c2"/><stop offset="0.552" stop-color="#c75191"/><stop offset="0.693" stop-color="#c71b6c"/><stop offset="0.710" stop-color="#c70b68"/><stop offset="0.713" stop-color="#c70067"/><stop offset="1.000" stop-color="#c70050"/></linearGradient><linearGradient id="o112" gradientUnits="userSpaceOnUse" x1="622.0" y1="0" x2="1604.9" y2="0"><stop offset="0.000" stop-color="#00b2c7"/><stop offset="0.201" stop-color="#009dc7"/><stop offset="0.238" stop-color="#0094c7"/><stop offset="0.244" stop-color="#1e93c7"/><stop offset="0.262" stop-color="#4391c7"/><stop offset="0.317" stop-color="#7a8dc7"/><stop offset="0.439" stop-color="#c77ec5"/><stop offset="0.552" stop-color="#c75195"/><stop offset="0.689" stop-color="#c71b70"/><stop offset="0.707" stop-color="#c70b6c"/><stop offset="0.710" stop-color="#c7006c"/><stop offset="1.000" stop-color="#c70053"/></linearGradient><linearGradient id="o113" gradientUnits="userSpaceOnUse" x1="624.5" y1="0" x2="1585.9" y2="0"><stop offset="0.000" stop-color="#00b0c7"/><stop offset="0.193" stop-color="#009cc7"/><stop offset="0.240" stop-color="#0090c7"/><stop offset="0.243" stop-color="#1990c7"/><stop offset="0.255" stop-color="#378fc7"/><stop offset="0.296" stop-color="#668cc7"/><stop offset="0.405" stop-color="#b181c7"/><stop offset="0.449" stop-color="#c779c4"/><stop offset="0.564" stop-color="#c74c95"/><stop offset="0.688" stop-color="#c71a74"/><stop offset="0.704" stop-color="#c70b71"/><stop offset="0.707" stop-color="#c70070"/><stop offset="1.000" stop-color="#c70056"/></linearGradient><linearGradient id="o114" gradientUnits="userSpaceOnUse" x1="627.1" y1="0" x2="1566.9" y2="0"><stop offset="0.000" stop-color="#00afc7"/><stop offset="0.197" stop-color="#0099c7"/><stop offset="0.239" stop-color="#008dc7"/><stop offset="0.245" stop-color="#208dc7"/><stop offset="0.264" stop-color="#438bc7"/><stop offset="0.318" stop-color="#7686c7"/><stop offset="0.452" stop-color="#c777c6"/><stop offset="0.573" stop-color="#c74896"/><stop offset="0.688" stop-color="#c71878"/><stop offset="0.701" stop-color="#c70a75"/><stop offset="0.704" stop-color="#c70075"/><stop offset="1.000" stop-color="#c70059"/></linearGradient><linearGradient id="o115" gradientUnits="userSpaceOnUse" x1="629.6" y1="0" x2="1547.8" y2="0"><stop offset="0.000" stop-color="#00adc7"/><stop offset="0.189" stop-color="#0098c7"/><stop offset="0.238" stop-color="#008bc7"/><stop offset="0.241" stop-color="#098ac7"/><stop offset="0.244" stop-color="#1c8ac7"/><stop offset="0.264" stop-color="#4188c7"/><stop offset="0.316" stop-color="#7284c7"/><stop offset="0.459" stop-color="#c773c7"/><stop offset="0.580" stop-color="#c74497"/><stop offset="0.684" stop-color="#c7187d"/><stop offset="0.697" stop-color="#c70a7a"/><stop offset="0.700" stop-color="#c70079"/><stop offset="1.000" stop-color="#c7005c"/></linearGradient><linearGradient id="o116" gradientUnits="userSpaceOnUse" x1="632.1" y1="0" x2="1528.8" y2="0"><stop offset="0.000" stop-color="#00acc7"/><stop offset="0.191" stop-color="#0095c7"/><stop offset="0.241" stop-color="#0087c7"/><stop offset="0.244" stop-color="#1a87c7"/><stop offset="0.261" stop-color="#3c85c7"/><stop offset="0.311" stop-color="#6c81c7"/><stop offset="0.452" stop-color="#bf70c7"/><stop offset="0.482" stop-color="#c768c0"/><stop offset="0.622" stop-color="#c7348f"/><stop offset="0.686" stop-color="#c71480"/><stop offset="0.692" stop-color="#c70c7f"/><stop offset="0.696" stop-color="#c7007e"/><stop offset="0.993" stop-color="#c70060"/><stop offset="1.000" stop-color="#c7005f"/></linearGradient><linearGradient id="o117" gradientUnits="userSpaceOnUse" x1="634.6" y1="0" x2="1509.8" y2="0"><stop offset="0.000" stop-color="#00aac7"/><stop offset="0.188" stop-color="#0093c7"/><stop offset="0.240" stop-color="#0085c7"/><stop offset="0.247" stop-color="#2084c7"/><stop offset="0.267" stop-color="#4282c7"/><stop offset="0.325" stop-color="#747dc7"/><stop offset="0.476" stop-color="#c669c7"/><stop offset="0.620" stop-color="#c73394"/><stop offset="0.682" stop-color="#c71485"/><stop offset="0.688" stop-color="#c70c83"/><stop offset="0.692" stop-color="#c70083"/><stop offset="0.966" stop-color="#c70065"/><stop offset="1.000" stop-color="#c70062"/></linearGradient><linearGradient id="o118" gradientUnits="userSpaceOnUse" x1="637.2" y1="0" x2="1490.7" y2="0"><stop offset="0.000" stop-color="#00a8c7"/><stop offset="0.182" stop-color="#0092c7"/><stop offset="0.239" stop-color="#0082c7"/><stop offset="0.249" stop-color="#2581c7"/><stop offset="0.277" stop-color="#4b7ec7"/><stop offset="0.354" stop-color="#8477c7"/><stop offset="0.491" stop-color="#c762c5"/><stop offset="0.639" stop-color="#c72a93"/><stop offset="0.681" stop-color="#c71089"/><stop offset="0.688" stop-color="#c70087"/><stop offset="0.982" stop-color="#c70067"/><stop offset="1.000" stop-color="#c70066"/></linearGradient><linearGradient id="o119" gradientUnits="userSpaceOnUse" x1="639.7" y1="0" x2="1471.7" y2="0"><stop offset="0.000" stop-color="#00a7c7"/><stop offset="0.194" stop-color="#008dc7"/><stop offset="0.241" stop-color="#007fc7"/><stop offset="0.245" stop-color="#177ec7"/><stop offset="0.263" stop-color="#3a7dc7"/><stop offset="0.320" stop-color="#6c77c7"/><stop offset="0.468" stop-color="#ba64c7"/><stop offset="0.507" stop-color="#c75bc2"/><stop offset="0.662" stop-color="#c71c91"/><stop offset="0.680" stop-color="#c70b8d"/><stop offset="0.683" stop-color="#c7008c"/><stop offset="0.971" stop-color="#c7006b"/><stop offset="1.000" stop-color="#c70069"/></linearGradient><linearGradient id="o120" gradientUnits="userSpaceOnUse" x1="642.2" y1="0" x2="1452.7" y2="0"><stop offset="0.000" stop-color="#00a5c7"/><stop offset="0.192" stop-color="#008bc7"/><stop offset="0.240" stop-color="#007cc7"/><stop offset="0.247" stop-color="#1e7bc7"/><stop offset="0.269" stop-color="#4079c7"/><stop offset="0.332" stop-color="#7173c7"/><stop offset="0.502" stop-color="#c55bc7"/><stop offset="0.653" stop-color="#c71f98"/><stop offset="0.675" stop-color="#c70b92"/><stop offset="0.679" stop-color="#c70091"/><stop offset="0.959" stop-color="#c7006f"/><stop offset="1.000" stop-color="#c7006c"/></linearGradient><linearGradient id="o121" gradientUnits="userSpaceOnUse" x1="645.1" y1="0" x2="1433.6" y2="0"><stop offset="0.000" stop-color="#00a3c7"/><stop offset="0.194" stop-color="#0088c7"/><stop offset="0.240" stop-color="#007ac7"/><stop offset="0.251" stop-color="#2678c7"/><stop offset="0.285" stop-color="#4e75c7"/><stop offset="0.376" stop-color="#876bc7"/><stop offset="0.525" stop-color="#c752c4"/><stop offset="0.654" stop-color="#c71b9c"/><stop offset="0.669" stop-color="#c70d98"/><stop offset="0.673" stop-color="#c70097"/><stop offset="0.920" stop-color="#c70076"/><stop offset="1.000" stop-color="#c7006f"/></linearGradient><linearGradient id="o122" gradientUnits="userSpaceOnUse" x1="647.9" y1="0" x2="1414.6" y2="0"><stop offset="0.000" stop-color="#00a1c7"/><stop offset="0.188" stop-color="#0087c7"/><stop offset="0.238" stop-color="#0077c7"/><stop offset="0.242" stop-color="#0676c7"/><stop offset="0.246" stop-color="#1a75c7"/><stop offset="0.270" stop-color="#3e73c7"/><stop offset="0.336" stop-color="#6f6cc7"/><stop offset="0.520" stop-color="#c351c7"/><stop offset="0.645" stop-color="#c71ea2"/><stop offset="0.664" stop-color="#c70c9d"/><stop offset="0.668" stop-color="#c7009c"/><stop offset="0.934" stop-color="#c70078"/><stop offset="1.000" stop-color="#c70073"/></linearGradient><linearGradient id="o123" gradientUnits="userSpaceOnUse" x1="650.7" y1="0" x2="1395.6" y2="0"><stop offset="0.000" stop-color="#009fc7"/><stop offset="0.189" stop-color="#0084c7"/><stop offset="0.241" stop-color="#0073c7"/><stop offset="0.245" stop-color="#1672c7"/><stop offset="0.261" stop-color="#3371c7"/><stop offset="0.309" stop-color="#5c6cc7"/><stop offset="0.446" stop-color="#a15bc7"/><stop offset="0.550" stop-color="#c745c4"/><stop offset="0.647" stop-color="#c719a6"/><stop offset="0.659" stop-color="#c70ca3"/><stop offset="0.663" stop-color="#c700a2"/><stop offset="0.900" stop-color="#c7007f"/><stop offset="1.000" stop-color="#c70076"/></linearGradient><linearGradient id="o124" gradientUnits="userSpaceOnUse" x1="653.6" y1="0" x2="1376.5" y2="0"><stop offset="0.000" stop-color="#009dc7"/><stop offset="0.187" stop-color="#0082c7"/><stop offset="0.241" stop-color="#0070c7"/><stop offset="0.245" stop-color="#1570c7"/><stop offset="0.261" stop-color="#336ec7"/><stop offset="0.320" stop-color="#6168c7"/><stop offset="0.477" stop-color="#aa52c7"/><stop offset="0.564" stop-color="#c73ec4"/><stop offset="0.643" stop-color="#c717ac"/><stop offset="0.651" stop-color="#c70ea9"/><stop offset="0.656" stop-color="#c700a8"/><stop offset="0.892" stop-color="#c70083"/><stop offset="1.000" stop-color="#c70079"/></linearGradient><linearGradient id="o125" gradientUnits="userSpaceOnUse" x1="656.7" y1="0" x2="1357.5" y2="0"><stop offset="0.000" stop-color="#009bc7"/><stop offset="0.184" stop-color="#0080c7"/><stop offset="0.239" stop-color="#006ec7"/><stop offset="0.248" stop-color="#1d6cc7"/><stop offset="0.274" stop-color="#3e6ac7"/><stop offset="0.350" stop-color="#7062c7"/><stop offset="0.560" stop-color="#c43dc7"/><stop offset="0.637" stop-color="#c717b2"/><stop offset="0.645" stop-color="#c70db0"/><stop offset="0.650" stop-color="#c700ae"/><stop offset="0.876" stop-color="#c70089"/><stop offset="1.000" stop-color="#c7007d"/></linearGradient><linearGradient id="o126" gradientUnits="userSpaceOnUse" x1="659.9" y1="0" x2="1338.5" y2="0"><stop offset="0.000" stop-color="#0099c7"/><stop offset="0.181" stop-color="#007dc7"/><stop offset="0.238" stop-color="#006bc7"/><stop offset="0.251" stop-color="#2469c7"/><stop offset="0.286" stop-color="#4866c7"/><stop offset="0.388" stop-color="#7f5ac7"/><stop offset="0.564" stop-color="#c038c7"/><stop offset="0.612" stop-color="#c723be"/><stop offset="0.639" stop-color="#c70cb6"/><stop offset="0.643" stop-color="#c700b5"/><stop offset="0.850" stop-color="#c70090"/><stop offset="1.000" stop-color="#c70081"/></linearGradient><linearGradient id="o127" gradientUnits="userSpaceOnUse" x1="663.2" y1="0" x2="1319.4" y2="0"><stop offset="0.000" stop-color="#0097c7"/><stop offset="0.192" stop-color="#0078c7"/><stop offset="0.237" stop-color="#0068c7"/><stop offset="0.251" stop-color="#2466c7"/><stop offset="0.292" stop-color="#4b62c7"/><stop offset="0.406" stop-color="#8454c7"/><stop offset="0.571" stop-color="#be32c7"/><stop offset="0.616" stop-color="#c71bc1"/><stop offset="0.630" stop-color="#c70ebd"/><stop offset="0.635" stop-color="#c700bc"/><stop offset="0.840" stop-color="#c70095"/><stop offset="1.000" stop-color="#c70084"/></linearGradient><linearGradient id="o128" gradientUnits="userSpaceOnUse" x1="666.4" y1="0" x2="1300.4" y2="0"><stop offset="0.000" stop-color="#0094c7"/><stop offset="0.184" stop-color="#0077c7"/><stop offset="0.236" stop-color="#0066c7"/><stop offset="0.241" stop-color="#0764c7"/><stop offset="0.245" stop-color="#1963c7"/><stop offset="0.269" stop-color="#3861c7"/><stop offset="0.349" stop-color="#6958c7"/><stop offset="0.538" stop-color="#af37c7"/><stop offset="0.608" stop-color="#c51bc7"/><stop offset="0.623" stop-color="#c70dc5"/><stop offset="0.627" stop-color="#c700c3"/><stop offset="0.835" stop-color="#c7009a"/><stop offset="1.000" stop-color="#c70088"/></linearGradient><linearGradient id="o129" gradientUnits="userSpaceOnUse" x1="669.7" y1="0" x2="1281.4" y2="0"><stop offset="0.000" stop-color="#0092c7"/><stop offset="0.176" stop-color="#0076c7"/><stop offset="0.235" stop-color="#0063c7"/><stop offset="0.250" stop-color="#2260c7"/><stop offset="0.289" stop-color="#465cc7"/><stop offset="0.397" stop-color="#7b4fc7"/><stop offset="0.559" stop-color="#b12dc7"/><stop offset="0.608" stop-color="#bf14c7"/><stop offset="0.613" stop-color="#c10fc7"/><stop offset="0.618" stop-color="#c200c7"/><stop offset="0.691" stop-color="#c700b8"/><stop offset="0.946" stop-color="#c70091"/><stop offset="1.000" stop-color="#c7008c"/></linearGradient><linearGradient id="o130" gradientUnits="userSpaceOnUse" x1="672.9" y1="0" x2="1262.3" y2="0"><stop offset="0.000" stop-color="#008fc7"/><stop offset="0.173" stop-color="#0074c7"/><stop offset="0.239" stop-color="#005ec7"/><stop offset="0.244" stop-color="#175dc7"/><stop offset="0.274" stop-color="#3b5ac7"/><stop offset="0.371" stop-color="#6e4fc7"/><stop offset="0.543" stop-color="#a82ec7"/><stop offset="0.599" stop-color="#b813c7"/><stop offset="0.609" stop-color="#bb00c7"/><stop offset="0.675" stop-color="#c700c1"/><stop offset="0.904" stop-color="#c7009a"/><stop offset="1.000" stop-color="#c70090"/></linearGradient><linearGradient id="o131" gradientUnits="userSpaceOnUse" x1="676.2" y1="0" x2="1243.3" y2="0"><stop offset="0.000" stop-color="#008dc7"/><stop offset="0.179" stop-color="#006fc7"/><stop offset="0.237" stop-color="#005bc7"/><stop offset="0.242" stop-color="#155ac7"/><stop offset="0.263" stop-color="#3158c7"/><stop offset="0.347" stop-color="#624fc7"/><stop offset="0.532" stop-color="#a02dc7"/><stop offset="0.589" stop-color="#b012c7"/><stop offset="0.600" stop-color="#b300c7"/><stop offset="0.689" stop-color="#c700c3"/><stop offset="0.932" stop-color="#c7009b"/><stop offset="1.000" stop-color="#c70094"/></linearGradient><linearGradient id="o132" gradientUnits="userSpaceOnUse" x1="679.4" y1="0" x2="1224.3" y2="0"><stop offset="0.000" stop-color="#008ac7"/><stop offset="0.181" stop-color="#006bc7"/><stop offset="0.236" stop-color="#0058c7"/><stop offset="0.242" stop-color="#1557c7"/><stop offset="0.264" stop-color="#3155c7"/><stop offset="0.346" stop-color="#5f4bc7"/><stop offset="0.516" stop-color="#982dc7"/><stop offset="0.577" stop-color="#a813c7"/><stop offset="0.588" stop-color="#ab00c7"/><stop offset="0.709" stop-color="#c700c4"/><stop offset="0.956" stop-color="#c7009d"/><stop offset="1.000" stop-color="#c70099"/></linearGradient><linearGradient id="o133" gradientUnits="userSpaceOnUse" x1="682.7" y1="0" x2="1205.2" y2="0"><stop offset="0.000" stop-color="#0088c7"/><stop offset="0.183" stop-color="#0067c7"/><stop offset="0.234" stop-color="#0055c7"/><stop offset="0.246" stop-color="#1d53c7"/><stop offset="0.286" stop-color="#404fc7"/><stop offset="0.411" stop-color="#753ec7"/><stop offset="0.537" stop-color="#9921c7"/><stop offset="0.571" stop-color="#a20cc7"/><stop offset="0.577" stop-color="#a400c7"/><stop offset="0.731" stop-color="#c700c4"/><stop offset="1.000" stop-color="#c7009d"/></linearGradient><linearGradient id="o134" gradientUnits="userSpaceOnUse" x1="685.9" y1="0" x2="1186.2" y2="0"><stop offset="0.000" stop-color="#0085c7"/><stop offset="0.186" stop-color="#0063c7"/><stop offset="0.234" stop-color="#0052c7"/><stop offset="0.240" stop-color="#1350c7"/><stop offset="0.263" stop-color="#304ec7"/><stop offset="0.353" stop-color="#5e43c7"/><stop offset="0.509" stop-color="#8e25c7"/><stop offset="0.557" stop-color="#9a0dc7"/><stop offset="0.563" stop-color="#9c00c7"/><stop offset="0.760" stop-color="#c700c4"/><stop offset="1.000" stop-color="#c700a2"/></linearGradient><linearGradient id="o135" gradientUnits="userSpaceOnUse" x1="689.4" y1="0" x2="1167.2" y2="0"><stop offset="0.000" stop-color="#0082c7"/><stop offset="0.175" stop-color="#0062c7"/><stop offset="0.231" stop-color="#004ec7"/><stop offset="0.244" stop-color="#1c4cc7"/><stop offset="0.287" stop-color="#3f47c7"/><stop offset="0.419" stop-color="#7135c7"/><stop offset="0.525" stop-color="#8e19c7"/><stop offset="0.544" stop-color="#930bc7"/><stop offset="0.550" stop-color="#9400c7"/><stop offset="0.781" stop-color="#c700c6"/><stop offset="1.000" stop-color="#c700a7"/></linearGradient><linearGradient id="o136" gradientUnits="userSpaceOnUse" x1="693.0" y1="0" x2="1148.1" y2="0"><stop offset="0.000" stop-color="#007ec7"/><stop offset="0.171" stop-color="#005fc7"/><stop offset="0.230" stop-color="#004bc7"/><stop offset="0.243" stop-color="#1d48c7"/><stop offset="0.289" stop-color="#3f43c7"/><stop offset="0.428" stop-color="#712fc7"/><stop offset="0.520" stop-color="#8912c7"/><stop offset="0.533" stop-color="#8c00c7"/><stop offset="0.809" stop-color="#c700c6"/><stop offset="1.000" stop-color="#c700ac"/></linearGradient><linearGradient id="o137" gradientUnits="userSpaceOnUse" x1="696.6" y1="0" x2="1129.1" y2="0"><stop offset="0.000" stop-color="#007bc7"/><stop offset="0.179" stop-color="#0059c7"/><stop offset="0.228" stop-color="#0047c7"/><stop offset="0.241" stop-color="#1c44c7"/><stop offset="0.290" stop-color="#3e3fc7"/><stop offset="0.434" stop-color="#7028c7"/><stop offset="0.503" stop-color="#8111c7"/><stop offset="0.517" stop-color="#8500c7"/><stop offset="0.834" stop-color="#c600c7"/><stop offset="1.000" stop-color="#c700b1"/></linearGradient><linearGradient id="o138" gradientUnits="userSpaceOnUse" x1="700.2" y1="0" x2="1110.1" y2="0"><stop offset="0.000" stop-color="#0077c7"/><stop offset="0.175" stop-color="#0056c7"/><stop offset="0.226" stop-color="#0043c7"/><stop offset="0.241" stop-color="#1d40c7"/><stop offset="0.292" stop-color="#3e3bc7"/><stop offset="0.445" stop-color="#7020c7"/><stop offset="0.489" stop-color="#7a0cc7"/><stop offset="0.496" stop-color="#7c00c7"/><stop offset="0.781" stop-color="#b700c7"/><stop offset="0.912" stop-color="#c700c2"/><stop offset="1.000" stop-color="#c700b7"/></linearGradient><linearGradient id="o139" gradientUnits="userSpaceOnUse" x1="703.9" y1="0" x2="1091.0" y2="0"><stop offset="0.000" stop-color="#0074c7"/><stop offset="0.177" stop-color="#0051c7"/><stop offset="0.223" stop-color="#003fc7"/><stop offset="0.238" stop-color="#1c3cc7"/><stop offset="0.292" stop-color="#3e36c7"/><stop offset="0.438" stop-color="#6b1ac7"/><stop offset="0.469" stop-color="#7209c7"/><stop offset="0.477" stop-color="#7400c7"/><stop offset="0.746" stop-color="#ac00c7"/><stop offset="0.954" stop-color="#c700c3"/><stop offset="1.000" stop-color="#c700bd"/></linearGradient><linearGradient id="o140" gradientUnits="userSpaceOnUse" x1="707.6" y1="0" x2="1072.0" y2="0"><stop offset="0.000" stop-color="#0070c7"/><stop offset="0.180" stop-color="#004bc7"/><stop offset="0.221" stop-color="#003ac7"/><stop offset="0.230" stop-color="#1338c7"/><stop offset="0.262" stop-color="#2e35c7"/><stop offset="0.377" stop-color="#5923c7"/><stop offset="0.443" stop-color="#690bc7"/><stop offset="0.451" stop-color="#6b00c7"/><stop offset="0.730" stop-color="#a400c7"/><stop offset="1.000" stop-color="#c700c3"/></linearGradient><linearGradient id="o141" gradientUnits="userSpaceOnUse" x1="711.4" y1="0" x2="1053.0" y2="0"><stop offset="0.000" stop-color="#006bc7"/><stop offset="0.167" stop-color="#004ac7"/><stop offset="0.219" stop-color="#0035c7"/><stop offset="0.228" stop-color="#1533c7"/><stop offset="0.272" stop-color="#332ec7"/><stop offset="0.395" stop-color="#5b15c7"/><stop offset="0.412" stop-color="#5f0cc7"/><stop offset="0.421" stop-color="#6100c7"/><stop offset="0.667" stop-color="#9500c7"/><stop offset="1.000" stop-color="#c400c7"/></linearGradient><linearGradient id="o142" gradientUnits="userSpaceOnUse" x1="715.1" y1="0" x2="1033.9" y2="0"><stop offset="0.000" stop-color="#0067c7"/><stop offset="0.168" stop-color="#0043c7"/><stop offset="0.215" stop-color="#0030c7"/><stop offset="0.224" stop-color="#142ec7"/><stop offset="0.271" stop-color="#3328c7"/><stop offset="0.374" stop-color="#530fc7"/><stop offset="0.393" stop-color="#5800c7"/><stop offset="0.645" stop-color="#8d00c7"/><stop offset="1.000" stop-color="#bd00c7"/></linearGradient><linearGradient id="o143" gradientUnits="userSpaceOnUse" x1="718.9" y1="0" x2="1014.9" y2="0"><stop offset="0.000" stop-color="#0062c7"/><stop offset="0.162" stop-color="#003fc7"/><stop offset="0.212" stop-color="#002ac7"/><stop offset="0.222" stop-color="#1628c7"/><stop offset="0.283" stop-color="#371ec7"/><stop offset="0.343" stop-color="#490bc7"/><stop offset="0.354" stop-color="#4c00c7"/><stop offset="0.566" stop-color="#7c00c7"/><stop offset="1.000" stop-color="#b600c7"/></linearGradient><linearGradient id="o144" gradientUnits="userSpaceOnUse" x1="722.6" y1="0" x2="995.9" y2="0"><stop offset="0.000" stop-color="#005cc7"/><stop offset="0.152" stop-color="#003cc7"/><stop offset="0.207" stop-color="#0023c7"/><stop offset="0.217" stop-color="#1521c7"/><stop offset="0.272" stop-color="#3316c7"/><stop offset="0.315" stop-color="#4100c7"/><stop offset="0.533" stop-color="#7300c7"/><stop offset="0.978" stop-color="#ad00c7"/><stop offset="1.000" stop-color="#af00c7"/></linearGradient><linearGradient id="o145" gradientUnits="userSpaceOnUse" x1="726.4" y1="0" x2="976.8" y2="0"><stop offset="0.000" stop-color="#0056c7"/><stop offset="0.155" stop-color="#0033c7"/><stop offset="0.202" stop-color="#0419c7"/><stop offset="0.214" stop-color="#1716c7"/><stop offset="0.250" stop-color="#2a0ac7"/><stop offset="0.262" stop-color="#2f00c7"/><stop offset="0.405" stop-color="#5900c7"/><stop offset="0.750" stop-color="#8e00c7"/><stop offset="1.000" stop-color="#a800c7"/></linearGradient><linearGradient id="o146" gradientUnits="userSpaceOnUse" x1="730.8" y1="0" x2="957.8" y2="0"><stop offset="0.000" stop-color="#004fc7"/><stop offset="0.132" stop-color="#0031c7"/><stop offset="0.184" stop-color="#0014c7"/><stop offset="0.197" stop-color="#1000c7"/><stop offset="0.237" stop-color="#2b00c7"/><stop offset="0.368" stop-color="#5100c7"/><stop offset="0.724" stop-color="#8600c7"/><stop offset="1.000" stop-color="#a200c7"/></linearGradient><linearGradient id="o147" gradientUnits="userSpaceOnUse" x1="735.5" y1="0" x2="938.8" y2="0"><stop offset="0.000" stop-color="#0047c7"/><stop offset="0.132" stop-color="#0024c7"/><stop offset="0.162" stop-color="#000ec7"/><stop offset="0.176" stop-color="#1500c7"/><stop offset="0.235" stop-color="#3200c7"/><stop offset="0.456" stop-color="#6000c7"/><stop offset="0.971" stop-color="#9800c7"/><stop offset="1.000" stop-color="#9b00c7"/></linearGradient><linearGradient id="o148" gradientUnits="userSpaceOnUse" x1="740.1" y1="0" x2="919.7" y2="0"><stop offset="0.000" stop-color="#003dc7"/><stop offset="0.100" stop-color="#0021c7"/><stop offset="0.117" stop-color="#0018c7"/><stop offset="0.133" stop-color="#0600c7"/><stop offset="0.150" stop-color="#1900c7"/><stop offset="0.233" stop-color="#3700c7"/><stop offset="0.483" stop-color="#6200c7"/><stop offset="1.000" stop-color="#9400c7"/></linearGradient><linearGradient id="o149" gradientUnits="userSpaceOnUse" x1="744.7" y1="0" x2="900.7" y2="0"><stop offset="0.000" stop-color="#0030c7"/><stop offset="0.075" stop-color="#0015c7"/><stop offset="0.094" stop-color="#0e00c7"/><stop offset="0.151" stop-color="#2900c7"/><stop offset="0.340" stop-color="#4e00c7"/><stop offset="0.830" stop-color="#8000c7"/><stop offset="1.000" stop-color="#8c00c7"/></linearGradient><linearGradient id="o150" gradientUnits="userSpaceOnUse" x1="749.3" y1="0" x2="881.7" y2="0"><stop offset="0.000" stop-color="#001bc7"/><stop offset="0.022" stop-color="#000ec7"/><stop offset="0.044" stop-color="#1400c7"/><stop offset="0.156" stop-color="#3500c7"/><stop offset="0.511" stop-color="#6100c7"/><stop offset="1.000" stop-color="#8500c7"/></linearGradient><linearGradient id="o151" gradientUnits="userSpaceOnUse" x1="755.0" y1="0" x2="862.7" y2="0"><stop offset="0.000" stop-color="#2300c7"/><stop offset="0.250" stop-color="#4800c7"/><stop offset="0.972" stop-color="#7c00c7"/><stop offset="1.000" stop-color="#7d00c7"/></linearGradient><linearGradient id="o152" gradientUnits="userSpaceOnUse" x1="762.2" y1="0" x2="843.6" y2="0"><stop offset="0.000" stop-color="#3800c7"/><stop offset="0.643" stop-color="#6400c7"/><stop offset="1.000" stop-color="#7500c7"/></linearGradient><linearGradient id="o153" gradientUnits="userSpaceOnUse" x1="769.7" y1="0" x2="824.6" y2="0"><stop offset="0.000" stop-color="#4500c7"/><stop offset="1.000" stop-color="#6d00c7"/></linearGradient><linearGradient id="o154" gradientUnits="userSpaceOnUse" x1="779.0" y1="0" x2="808.0" y2="0"><stop offset="0.000" stop-color="#5200c7"/><stop offset="1.000" stop-color="#6500c7"/></linearGradient><linearGradient id="i0" gradientUnits="userSpaceOnUse" x1="1012.6" y1="0" x2="1020.8" y2="0"><stop offset="0.000" stop-color="#00ff00"/><stop offset="1.000" stop-color="#00ff00"/></linearGradient><linearGradient id="i1" gradientUnits="userSpaceOnUse" x1="1010.2" y1="0" x2="1031.7" y2="0"><stop offset="0.000" stop-color="#00ff08"/><stop offset="0.125" stop-color="#00ff00"/><stop offset="0.625" stop-color="#00ff00"/><stop offset="0.750" stop-color="#15ff00"/><stop offset="1.000" stop-color="#29ff00"/></linearGradient><linearGradient id="i2" gradientUnits="userSpaceOnUse" x1="1007.8" y1="0" x2="1042.5" y2="0"><stop offset="0.000" stop-color="#00ff20"/><stop offset="0.333" stop-color="#00ff0f"/><stop offset="0.417" stop-color="#00ff00"/><stop offset="0.500" stop-color="#1cff00"/><stop offset="0.917" stop-color="#40ff00"/><stop offset="1.000" stop-color="#44ff00"/></linearGradient><linearGradient id="i3" gradientUnits="userSpaceOnUse" x1="1005.4" y1="0" x2="1053.4" y2="0"><stop offset="0.000" stop-color="#00ff2b"/><stop offset="0.250" stop-color="#00ff21"/><stop offset="0.437" stop-color="#29ff17"/><stop offset="0.625" stop-color="#3dff00"/><stop offset="1.000" stop-color="#57ff00"/></linearGradient><linearGradient id="i4" gradientUnits="userSpaceOnUse" x1="1003.1" y1="0" x2="1064.3" y2="0"><stop offset="0.000" stop-color="#00ff34"/><stop offset="0.190" stop-color="#00ff2d"/><stop offset="0.238" stop-color="#07ff2b"/><stop offset="0.286" stop-color="#1dff29"/><stop offset="0.524" stop-color="#41ff1a"/><stop offset="0.619" stop-color="#4aff11"/><stop offset="0.714" stop-color="#52ff00"/><stop offset="1.000" stop-color="#66ff00"/></linearGradient><linearGradient id="i5" gradientUnits="userSpaceOnUse" x1="1000.7" y1="0" x2="1075.1" y2="0"><stop offset="0.000" stop-color="#00ff3b"/><stop offset="0.160" stop-color="#00ff35"/><stop offset="0.280" stop-color="#29ff30"/><stop offset="0.560" stop-color="#50ff1f"/><stop offset="0.720" stop-color="#5eff0a"/><stop offset="0.760" stop-color="#62ff00"/><stop offset="1.000" stop-color="#73ff00"/></linearGradient><linearGradient id="i6" gradientUnits="userSpaceOnUse" x1="998.3" y1="0" x2="1086.0" y2="0"><stop offset="0.000" stop-color="#00ff42"/><stop offset="0.133" stop-color="#00ff3d"/><stop offset="0.233" stop-color="#28ff38"/><stop offset="0.433" stop-color="#4bff2e"/><stop offset="0.733" stop-color="#6aff12"/><stop offset="0.800" stop-color="#70ff00"/><stop offset="1.000" stop-color="#80ff00"/></linearGradient><linearGradient id="i7" gradientUnits="userSpaceOnUse" x1="995.9" y1="0" x2="1096.8" y2="0"><stop offset="0.000" stop-color="#00ff48"/><stop offset="0.118" stop-color="#00ff43"/><stop offset="0.206" stop-color="#2aff3f"/><stop offset="0.441" stop-color="#55ff33"/><stop offset="0.735" stop-color="#75ff19"/><stop offset="0.824" stop-color="#7cff00"/><stop offset="1.000" stop-color="#8bff00"/></linearGradient><linearGradient id="i8" gradientUnits="userSpaceOnUse" x1="993.5" y1="0" x2="1107.7" y2="0"><stop offset="0.000" stop-color="#00ff4d"/><stop offset="0.103" stop-color="#00ff49"/><stop offset="0.179" stop-color="#29ff46"/><stop offset="0.333" stop-color="#4cff3e"/><stop offset="0.744" stop-color="#7fff1d"/><stop offset="0.821" stop-color="#86ff0c"/><stop offset="0.846" stop-color="#88ff00"/><stop offset="1.000" stop-color="#96ff00"/></linearGradient><linearGradient id="i9" gradientUnits="userSpaceOnUse" x1="991.1" y1="0" x2="1118.6" y2="0"><stop offset="0.000" stop-color="#00ff52"/><stop offset="0.093" stop-color="#00ff4f"/><stop offset="0.163" stop-color="#2aff4b"/><stop offset="0.302" stop-color="#4dff45"/><stop offset="0.698" stop-color="#83ff27"/><stop offset="0.837" stop-color="#91ff0e"/><stop offset="0.860" stop-color="#93ff00"/><stop offset="1.000" stop-color="#a0ff00"/></linearGradient><linearGradient id="i10" gradientUnits="userSpaceOnUse" x1="988.7" y1="0" x2="1129.4" y2="0"><stop offset="0.000" stop-color="#00ff57"/><stop offset="0.085" stop-color="#00ff54"/><stop offset="0.128" stop-color="#22ff52"/><stop offset="0.255" stop-color="#4aff4c"/><stop offset="0.617" stop-color="#82ff33"/><stop offset="0.809" stop-color="#97ff1b"/><stop offset="0.851" stop-color="#9cff10"/><stop offset="0.872" stop-color="#9eff00"/><stop offset="1.000" stop-color="#aaff00"/></linearGradient><linearGradient id="i11" gradientUnits="userSpaceOnUse" x1="986.3" y1="0" x2="1140.3" y2="0"><stop offset="0.000" stop-color="#01ff5c"/><stop offset="0.077" stop-color="#01ff59"/><stop offset="0.115" stop-color="#22ff57"/><stop offset="0.212" stop-color="#45ff52"/><stop offset="0.500" stop-color="#7aff41"/><stop offset="0.788" stop-color="#9eff23"/><stop offset="0.865" stop-color="#a6ff10"/><stop offset="0.885" stop-color="#a8ff01"/><stop offset="1.000" stop-color="#b4ff00"/></linearGradient><linearGradient id="i12" gradientUnits="userSpaceOnUse" x1="984.0" y1="0" x2="1151.1" y2="0"><stop offset="0.000" stop-color="#01ff61"/><stop offset="0.071" stop-color="#01ff5d"/><stop offset="0.107" stop-color="#23ff5c"/><stop offset="0.196" stop-color="#47ff58"/><stop offset="0.446" stop-color="#78ff4a"/><stop offset="0.786" stop-color="#a6ff28"/><stop offset="0.875" stop-color="#b0ff12"/><stop offset="0.893" stop-color="#b2ff01"/><stop offset="1.000" stop-color="#beff01"/></linearGradient><linearGradient id="i13" gradientUnits="userSpaceOnUse" x1="981.6" y1="0" x2="1162.0" y2="0"><stop offset="0.000" stop-color="#01ff66"/><stop offset="0.066" stop-color="#01ff63"/><stop offset="0.098" stop-color="#23ff61"/><stop offset="0.180" stop-color="#47ff5d"/><stop offset="0.426" stop-color="#7cff4f"/><stop offset="0.787" stop-color="#aeff2b"/><stop offset="0.885" stop-color="#baff13"/><stop offset="0.902" stop-color="#bcff04"/><stop offset="1.000" stop-color="#c8ff01"/></linearGradient><linearGradient id="i14" gradientUnits="userSpaceOnUse" x1="979.2" y1="0" x2="1172.9" y2="0"><stop offset="0.000" stop-color="#01ff6a"/><stop offset="0.062" stop-color="#01ff67"/><stop offset="0.092" stop-color="#24ff66"/><stop offset="0.169" stop-color="#48ff62"/><stop offset="0.385" stop-color="#7aff55"/><stop offset="0.754" stop-color="#b2ff33"/><stop offset="0.877" stop-color="#c2ff1a"/><stop offset="0.923" stop-color="#c8ff01"/><stop offset="1.000" stop-color="#d1ff01"/></linearGradient><linearGradient id="i15" gradientUnits="userSpaceOnUse" x1="976.8" y1="0" x2="1183.7" y2="0"><stop offset="0.000" stop-color="#01ff6e"/><stop offset="0.058" stop-color="#02ff6c"/><stop offset="0.087" stop-color="#25ff6a"/><stop offset="0.174" stop-color="#4dff66"/><stop offset="0.377" stop-color="#7fff5a"/><stop offset="0.768" stop-color="#bcff34"/><stop offset="0.884" stop-color="#ccff1b"/><stop offset="0.928" stop-color="#d1ff01"/><stop offset="1.000" stop-color="#dbff01"/></linearGradient><linearGradient id="i16" gradientUnits="userSpaceOnUse" x1="974.4" y1="0" x2="1194.6" y2="0"><stop offset="0.000" stop-color="#02ff73"/><stop offset="0.054" stop-color="#02ff70"/><stop offset="0.081" stop-color="#26ff6f"/><stop offset="0.149" stop-color="#48ff6b"/><stop offset="0.324" stop-color="#79ff61"/><stop offset="0.703" stop-color="#baff40"/><stop offset="0.878" stop-color="#d4ff20"/><stop offset="0.919" stop-color="#d9ff0c"/><stop offset="0.932" stop-color="#dbff01"/><stop offset="1.000" stop-color="#e4ff01"/></linearGradient><linearGradient id="i17" gradientUnits="userSpaceOnUse" x1="972.0" y1="0" x2="1205.4" y2="0"><stop offset="0.000" stop-color="#02ff76"/><stop offset="0.051" stop-color="#02ff74"/><stop offset="0.077" stop-color="#27ff73"/><stop offset="0.154" stop-color="#4fff6f"/><stop offset="0.333" stop-color="#80ff65"/><stop offset="0.718" stop-color="#c4ff42"/><stop offset="0.885" stop-color="#ddff21"/><stop offset="0.923" stop-color="#e3ff0e"/><stop offset="0.936" stop-color="#e5ff01"/><stop offset="1.000" stop-color="#eeff01"/></linearGradient><linearGradient id="i18" gradientUnits="userSpaceOnUse" x1="969.6" y1="0" x2="1216.3" y2="0"><stop offset="0.000" stop-color="#03ff7b"/><stop offset="0.048" stop-color="#03ff79"/><stop offset="0.072" stop-color="#28ff78"/><stop offset="0.145" stop-color="#4fff74"/><stop offset="0.337" stop-color="#87ff68"/><stop offset="0.735" stop-color="#cfff43"/><stop offset="0.892" stop-color="#e7ff23"/><stop offset="0.928" stop-color="#edff10"/><stop offset="0.940" stop-color="#eeff02"/><stop offset="1.000" stop-color="#f7ff01"/></linearGradient><linearGradient id="i19" gradientUnits="userSpaceOnUse" x1="967.2" y1="0" x2="1227.2" y2="0"><stop offset="0.000" stop-color="#04ff7f"/><stop offset="0.046" stop-color="#04ff7d"/><stop offset="0.057" stop-color="#1aff7c"/><stop offset="0.092" stop-color="#3aff7b"/><stop offset="0.195" stop-color="#66ff75"/><stop offset="0.448" stop-color="#a3ff64"/><stop offset="0.793" stop-color="#e0ff3d"/><stop offset="0.908" stop-color="#f3ff1f"/><stop offset="0.931" stop-color="#f6ff11"/><stop offset="0.943" stop-color="#f8ff02"/><stop offset="1.000" stop-color="#fffd02"/></linearGradient><linearGradient id="i20" gradientUnits="userSpaceOnUse" x1="964.9" y1="0" x2="1238.3" y2="0"><stop offset="0.000" stop-color="#04ff83"/><stop offset="0.043" stop-color="#05ff81"/><stop offset="0.065" stop-color="#2aff80"/><stop offset="0.120" stop-color="#4cff7e"/><stop offset="0.261" stop-color="#7eff76"/><stop offset="0.598" stop-color="#c6ff5b"/><stop offset="0.848" stop-color="#f2ff34"/><stop offset="0.924" stop-color="#ffff19"/><stop offset="0.946" stop-color="#fffc02"/><stop offset="1.000" stop-color="#fff302"/></linearGradient><linearGradient id="i21" gradientUnits="userSpaceOnUse" x1="962.5" y1="0" x2="1249.6" y2="0"><stop offset="0.000" stop-color="#05ff88"/><stop offset="0.042" stop-color="#06ff86"/><stop offset="0.052" stop-color="#1dff85"/><stop offset="0.083" stop-color="#3dff84"/><stop offset="0.198" stop-color="#70ff7d"/><stop offset="0.469" stop-color="#b4ff6a"/><stop offset="0.781" stop-color="#efff45"/><stop offset="0.896" stop-color="#fffb28"/><stop offset="0.938" stop-color="#fff410"/><stop offset="0.948" stop-color="#fff202"/><stop offset="1.000" stop-color="#ffea02"/></linearGradient><linearGradient id="i22" gradientUnits="userSpaceOnUse" x1="960.1" y1="0" x2="1260.9" y2="0"><stop offset="0.000" stop-color="#06ff8c"/><stop offset="0.040" stop-color="#07ff8a"/><stop offset="0.050" stop-color="#1eff89"/><stop offset="0.069" stop-color="#36ff88"/><stop offset="0.149" stop-color="#62ff85"/><stop offset="0.327" stop-color="#99ff79"/><stop offset="0.713" stop-color="#eaff53"/><stop offset="0.842" stop-color="#fffb3a"/><stop offset="0.921" stop-color="#ffee1e"/><stop offset="0.950" stop-color="#ffe902"/><stop offset="1.000" stop-color="#ffe202"/></linearGradient><linearGradient id="i23" gradientUnits="userSpaceOnUse" x1="957.7" y1="0" x2="1272.1" y2="0"><stop offset="0.000" stop-color="#08ff8f"/><stop offset="0.038" stop-color="#08ff8e"/><stop offset="0.048" stop-color="#20ff8e"/><stop offset="0.076" stop-color="#40ff8c"/><stop offset="0.162" stop-color="#6bff88"/><stop offset="0.343" stop-color="#a2ff7d"/><stop offset="0.705" stop-color="#f0ff58"/><stop offset="0.800" stop-color="#fffb46"/><stop offset="0.924" stop-color="#ffe51e"/><stop offset="0.943" stop-color="#ffe210"/><stop offset="0.952" stop-color="#ffe103"/><stop offset="1.000" stop-color="#ffd902"/></linearGradient><linearGradient id="i24" gradientUnits="userSpaceOnUse" x1="955.3" y1="0" x2="1283.4" y2="0"><stop offset="0.000" stop-color="#09ff94"/><stop offset="0.036" stop-color="#0aff92"/><stop offset="0.045" stop-color="#23ff92"/><stop offset="0.082" stop-color="#48ff91"/><stop offset="0.173" stop-color="#74ff8c"/><stop offset="0.373" stop-color="#b0ff7f"/><stop offset="0.736" stop-color="#ffff56"/><stop offset="0.918" stop-color="#ffde22"/><stop offset="0.945" stop-color="#ffda0e"/><stop offset="0.955" stop-color="#ffd803"/><stop offset="1.000" stop-color="#ffd202"/></linearGradient><linearGradient id="i25" gradientUnits="userSpaceOnUse" x1="952.9" y1="0" x2="1294.7" y2="0"><stop offset="0.000" stop-color="#0bff98"/><stop offset="0.035" stop-color="#0bff97"/><stop offset="0.044" stop-color="#25ff96"/><stop offset="0.079" stop-color="#4aff95"/><stop offset="0.167" stop-color="#76ff91"/><stop offset="0.386" stop-color="#b9ff83"/><stop offset="0.711" stop-color="#fffc5d"/><stop offset="0.904" stop-color="#ffda28"/><stop offset="0.947" stop-color="#ffd30e"/><stop offset="0.956" stop-color="#ffd203"/><stop offset="1.000" stop-color="#ffca02"/></linearGradient><linearGradient id="i26" gradientUnits="userSpaceOnUse" x1="950.5" y1="0" x2="1305.9" y2="0"><stop offset="0.000" stop-color="#0dff9c"/><stop offset="0.034" stop-color="#0dff9b"/><stop offset="0.042" stop-color="#27ff9b"/><stop offset="0.076" stop-color="#4cff99"/><stop offset="0.168" stop-color="#7bff95"/><stop offset="0.361" stop-color="#b8ff89"/><stop offset="0.672" stop-color="#fffd66"/><stop offset="0.891" stop-color="#ffd42d"/><stop offset="0.941" stop-color="#ffcd16"/><stop offset="0.958" stop-color="#ffca03"/><stop offset="1.000" stop-color="#ffc402"/></linearGradient><linearGradient id="i27" gradientUnits="userSpaceOnUse" x1="948.2" y1="0" x2="1317.2" y2="0"><stop offset="0.000" stop-color="#0fffa1"/><stop offset="0.032" stop-color="#10ff9f"/><stop offset="0.040" stop-color="#29ff9f"/><stop offset="0.065" stop-color="#48ff9f"/><stop offset="0.137" stop-color="#73ff9b"/><stop offset="0.306" stop-color="#aeff92"/><stop offset="0.637" stop-color="#fffd6f"/><stop offset="0.895" stop-color="#ffcc2c"/><stop offset="0.944" stop-color="#ffc515"/><stop offset="0.960" stop-color="#ffc303"/><stop offset="1.000" stop-color="#ffbd02"/></linearGradient><linearGradient id="i28" gradientUnits="userSpaceOnUse" x1="945.8" y1="0" x2="1328.4" y2="0"><stop offset="0.000" stop-color="#11ffa4"/><stop offset="0.031" stop-color="#12ffa4"/><stop offset="0.039" stop-color="#2cffa3"/><stop offset="0.062" stop-color="#4bffa2"/><stop offset="0.148" stop-color="#7dffa0"/><stop offset="0.320" stop-color="#b8ff95"/><stop offset="0.609" stop-color="#fffd76"/><stop offset="0.898" stop-color="#ffc52c"/><stop offset="0.945" stop-color="#ffbe15"/><stop offset="0.961" stop-color="#ffbc03"/><stop offset="1.000" stop-color="#ffb702"/></linearGradient><linearGradient id="i29" gradientUnits="userSpaceOnUse" x1="943.4" y1="0" x2="1339.7" y2="0"><stop offset="0.000" stop-color="#14ffa9"/><stop offset="0.030" stop-color="#15ffa9"/><stop offset="0.038" stop-color="#2fffa8"/><stop offset="0.068" stop-color="#53ffa7"/><stop offset="0.143" stop-color="#80ffa5"/><stop offset="0.331" stop-color="#c0ff99"/><stop offset="0.579" stop-color="#fffd7f"/><stop offset="0.887" stop-color="#ffc031"/><stop offset="0.947" stop-color="#ffb714"/><stop offset="0.962" stop-color="#ffb503"/><stop offset="1.000" stop-color="#ffb002"/></linearGradient><linearGradient id="i30" gradientUnits="userSpaceOnUse" x1="941.0" y1="0" x2="1351.0" y2="0"><stop offset="0.000" stop-color="#16ffae"/><stop offset="0.029" stop-color="#18ffac"/><stop offset="0.036" stop-color="#32ffad"/><stop offset="0.058" stop-color="#50ffac"/><stop offset="0.124" stop-color="#7bffa9"/><stop offset="0.277" stop-color="#b6ffa2"/><stop offset="0.555" stop-color="#fffc86"/><stop offset="0.898" stop-color="#ffb82d"/><stop offset="0.949" stop-color="#ffb114"/><stop offset="0.964" stop-color="#ffaf03"/><stop offset="1.000" stop-color="#ffaa02"/></linearGradient><linearGradient id="i31" gradientUnits="userSpaceOnUse" x1="938.6" y1="0" x2="1362.2" y2="0"><stop offset="0.000" stop-color="#19ffb2"/><stop offset="0.028" stop-color="#1bffb1"/><stop offset="0.035" stop-color="#36ffb1"/><stop offset="0.063" stop-color="#59ffb0"/><stop offset="0.134" stop-color="#85ffae"/><stop offset="0.296" stop-color="#c1ffa6"/><stop offset="0.528" stop-color="#fffd8e"/><stop offset="0.817" stop-color="#ffc045"/><stop offset="0.937" stop-color="#ffad1d"/><stop offset="0.951" stop-color="#ffab13"/><stop offset="0.965" stop-color="#ffa903"/><stop offset="1.000" stop-color="#ffa402"/></linearGradient><linearGradient id="i32" gradientUnits="userSpaceOnUse" x1="936.2" y1="0" x2="1373.5" y2="0"><stop offset="0.000" stop-color="#1dffb6"/><stop offset="0.027" stop-color="#1fffb6"/><stop offset="0.034" stop-color="#39ffb5"/><stop offset="0.062" stop-color="#5dffb5"/><stop offset="0.137" stop-color="#8cffb3"/><stop offset="0.322" stop-color="#ceffa9"/><stop offset="0.514" stop-color="#fffb94"/><stop offset="0.801" stop-color="#ffbc4a"/><stop offset="0.932" stop-color="#ffa720"/><stop offset="0.952" stop-color="#ffa413"/><stop offset="0.966" stop-color="#ffa203"/><stop offset="1.000" stop-color="#ff9e02"/></linearGradient><linearGradient id="i33" gradientUnits="userSpaceOnUse" x1="933.8" y1="0" x2="1384.8" y2="0"><stop offset="0.000" stop-color="#20ffbb"/><stop offset="0.026" stop-color="#22ffba"/><stop offset="0.033" stop-color="#3effba"/><stop offset="0.060" stop-color="#60ffba"/><stop offset="0.132" stop-color="#8fffb8"/><stop offset="0.298" stop-color="#ccffb0"/><stop offset="0.483" stop-color="#fffd9d"/><stop offset="0.781" stop-color="#ffba4f"/><stop offset="0.927" stop-color="#ffa222"/><stop offset="0.954" stop-color="#ff9e11"/><stop offset="0.960" stop-color="#ff9d02"/><stop offset="1.000" stop-color="#ff9802"/></linearGradient><linearGradient id="i34" gradientUnits="userSpaceOnUse" x1="931.4" y1="0" x2="1396.0" y2="0"><stop offset="0.000" stop-color="#24ffbe"/><stop offset="0.026" stop-color="#26ffbe"/><stop offset="0.032" stop-color="#42ffbf"/><stop offset="0.058" stop-color="#64ffbe"/><stop offset="0.123" stop-color="#8fffbd"/><stop offset="0.258" stop-color="#c5ffb8"/><stop offset="0.465" stop-color="#fffca4"/><stop offset="0.781" stop-color="#ffb54f"/><stop offset="0.929" stop-color="#ff9c22"/><stop offset="0.955" stop-color="#ff9810"/><stop offset="0.961" stop-color="#ff9702"/><stop offset="1.000" stop-color="#ff9202"/></linearGradient><linearGradient id="i35" gradientUnits="userSpaceOnUse" x1="929.1" y1="0" x2="1407.3" y2="0"><stop offset="0.000" stop-color="#27ffc3"/><stop offset="0.025" stop-color="#2affc3"/><stop offset="0.031" stop-color="#46ffc2"/><stop offset="0.056" stop-color="#68ffc2"/><stop offset="0.125" stop-color="#96ffc2"/><stop offset="0.263" stop-color="#ccffbd"/><stop offset="0.450" stop-color="#fffbaa"/><stop offset="0.762" stop-color="#ffb254"/><stop offset="0.925" stop-color="#ff9723"/><stop offset="0.956" stop-color="#ff9210"/><stop offset="0.963" stop-color="#ff9202"/><stop offset="1.000" stop-color="#ff8d01"/></linearGradient><linearGradient id="i36" gradientUnits="userSpaceOnUse" x1="926.7" y1="0" x2="1418.5" y2="0"><stop offset="0.000" stop-color="#2bffc7"/><stop offset="0.024" stop-color="#2fffc7"/><stop offset="0.030" stop-color="#4affc7"/><stop offset="0.061" stop-color="#72ffc7"/><stop offset="0.140" stop-color="#a3ffc6"/><stop offset="0.305" stop-color="#deffbf"/><stop offset="0.433" stop-color="#fffbb1"/><stop offset="0.726" stop-color="#ffb45e"/><stop offset="0.921" stop-color="#ff9225"/><stop offset="0.957" stop-color="#ff8d0f"/><stop offset="0.963" stop-color="#ff8c02"/><stop offset="1.000" stop-color="#ff8701"/></linearGradient><linearGradient id="i37" gradientUnits="userSpaceOnUse" x1="924.3" y1="0" x2="1429.8" y2="0"><stop offset="0.000" stop-color="#2fffcb"/><stop offset="0.024" stop-color="#33ffcb"/><stop offset="0.030" stop-color="#4effcb"/><stop offset="0.053" stop-color="#70ffcb"/><stop offset="0.124" stop-color="#a0ffcb"/><stop offset="0.266" stop-color="#d7ffc7"/><stop offset="0.414" stop-color="#fffbb8"/><stop offset="0.734" stop-color="#ffad5c"/><stop offset="0.929" stop-color="#ff8b22"/><stop offset="0.959" stop-color="#ff870f"/><stop offset="0.964" stop-color="#ff8602"/><stop offset="1.000" stop-color="#ff8101"/></linearGradient><linearGradient id="i38" gradientUnits="userSpaceOnUse" x1="921.9" y1="0" x2="1441.1" y2="0"><stop offset="0.000" stop-color="#33ffcf"/><stop offset="0.023" stop-color="#37ffcf"/><stop offset="0.029" stop-color="#53ffcf"/><stop offset="0.057" stop-color="#79ffd0"/><stop offset="0.126" stop-color="#a7ffcf"/><stop offset="0.276" stop-color="#dfffcb"/><stop offset="0.397" stop-color="#fffbbf"/><stop offset="0.736" stop-color="#ffa75c"/><stop offset="0.931" stop-color="#ff8521"/><stop offset="0.960" stop-color="#ff810d"/><stop offset="0.966" stop-color="#ff8101"/><stop offset="1.000" stop-color="#ff7b01"/></linearGradient><linearGradient id="i39" gradientUnits="userSpaceOnUse" x1="919.5" y1="0" x2="1452.3" y2="0"><stop offset="0.000" stop-color="#37ffd3"/><stop offset="0.022" stop-color="#3cffd3"/><stop offset="0.028" stop-color="#57ffd4"/><stop offset="0.045" stop-color="#71ffd4"/><stop offset="0.101" stop-color="#9effd4"/><stop offset="0.208" stop-color="#ceffd3"/><stop offset="0.382" stop-color="#fffbc5"/><stop offset="0.719" stop-color="#ffa660"/><stop offset="0.933" stop-color="#ff8021"/><stop offset="0.961" stop-color="#ff7c0d"/><stop offset="0.966" stop-color="#ff7b01"/><stop offset="1.000" stop-color="#ff7501"/></linearGradient><linearGradient id="i40" gradientUnits="userSpaceOnUse" x1="917.1" y1="0" x2="1463.6" y2="0"><stop offset="0.000" stop-color="#3bffd7"/><stop offset="0.022" stop-color="#40ffd7"/><stop offset="0.027" stop-color="#5bffd7"/><stop offset="0.049" stop-color="#7cffd8"/><stop offset="0.115" stop-color="#acffd8"/><stop offset="0.246" stop-color="#dfffd6"/><stop offset="0.366" stop-color="#fffccb"/><stop offset="0.721" stop-color="#ffa05f"/><stop offset="0.929" stop-color="#ff7b22"/><stop offset="0.962" stop-color="#ff760c"/><stop offset="0.967" stop-color="#ff7501"/><stop offset="1.000" stop-color="#ff7001"/></linearGradient><linearGradient id="i41" gradientUnits="userSpaceOnUse" x1="914.7" y1="0" x2="1474.9" y2="0"><stop offset="0.000" stop-color="#3fffda"/><stop offset="0.021" stop-color="#48ffdb"/><stop offset="0.027" stop-color="#60ffdb"/><stop offset="0.053" stop-color="#85ffdb"/><stop offset="0.118" stop-color="#b2ffdc"/><stop offset="0.251" stop-color="#e5ffda"/><stop offset="0.353" stop-color="#fffcd1"/><stop offset="0.701" stop-color="#ffa064"/><stop offset="0.925" stop-color="#ff7623"/><stop offset="0.963" stop-color="#ff700c"/><stop offset="0.968" stop-color="#ff6f01"/><stop offset="1.000" stop-color="#ff6a01"/></linearGradient><linearGradient id="i42" gradientUnits="userSpaceOnUse" x1="912.3" y1="0" x2="1486.1" y2="0"><stop offset="0.000" stop-color="#42ffde"/><stop offset="0.016" stop-color="#46ffde"/><stop offset="0.021" stop-color="#4dffde"/><stop offset="0.026" stop-color="#63ffde"/><stop offset="0.047" stop-color="#83ffdf"/><stop offset="0.099" stop-color="#acffe0"/><stop offset="0.198" stop-color="#d8ffe0"/><stop offset="0.339" stop-color="#fffcd7"/><stop offset="0.724" stop-color="#ff955d"/><stop offset="0.932" stop-color="#ff6f21"/><stop offset="0.964" stop-color="#ff6a0b"/><stop offset="0.969" stop-color="#ff6901"/><stop offset="1.000" stop-color="#ff6400"/></linearGradient><linearGradient id="i43" gradientUnits="userSpaceOnUse" x1="910.0" y1="0" x2="1497.4" y2="0"><stop offset="0.000" stop-color="#45ffe1"/><stop offset="0.015" stop-color="#4affe2"/><stop offset="0.020" stop-color="#53ffe1"/><stop offset="0.026" stop-color="#67ffe2"/><stop offset="0.056" stop-color="#91ffe2"/><stop offset="0.133" stop-color="#c3ffe4"/><stop offset="0.281" stop-color="#f5ffe2"/><stop offset="0.337" stop-color="#fff9d9"/><stop offset="0.724" stop-color="#ff905d"/><stop offset="0.929" stop-color="#ff6a22"/><stop offset="0.964" stop-color="#ff640b"/><stop offset="0.969" stop-color="#ff6301"/><stop offset="1.000" stop-color="#ff5e00"/></linearGradient><linearGradient id="i44" gradientUnits="userSpaceOnUse" x1="907.6" y1="0" x2="1508.6" y2="0"><stop offset="0.000" stop-color="#48ffe4"/><stop offset="0.015" stop-color="#4dffe5"/><stop offset="0.020" stop-color="#56ffe5"/><stop offset="0.025" stop-color="#6affe5"/><stop offset="0.045" stop-color="#89ffe6"/><stop offset="0.095" stop-color="#b2ffe7"/><stop offset="0.189" stop-color="#deffe8"/><stop offset="0.313" stop-color="#fffce1"/><stop offset="0.736" stop-color="#ff875a"/><stop offset="0.935" stop-color="#ff6220"/><stop offset="0.960" stop-color="#ff5f11"/><stop offset="0.970" stop-color="#ff5d00"/><stop offset="1.000" stop-color="#ff5800"/></linearGradient><linearGradient id="i45" gradientUnits="userSpaceOnUse" x1="905.2" y1="0" x2="1519.9" y2="0"><stop offset="0.000" stop-color="#4bffe8"/><stop offset="0.015" stop-color="#50ffe8"/><stop offset="0.020" stop-color="#5affe9"/><stop offset="0.024" stop-color="#6effe8"/><stop offset="0.049" stop-color="#91ffe9"/><stop offset="0.107" stop-color="#bfffea"/><stop offset="0.220" stop-color="#ebffeb"/><stop offset="0.307" stop-color="#fffbe4"/><stop offset="0.717" stop-color="#ff875f"/><stop offset="0.937" stop-color="#ff5c1f"/><stop offset="0.966" stop-color="#ff5809"/><stop offset="0.971" stop-color="#ff5700"/><stop offset="1.000" stop-color="#ff5200"/></linearGradient><linearGradient id="i46" gradientUnits="userSpaceOnUse" x1="902.8" y1="0" x2="1531.2" y2="0"><stop offset="0.000" stop-color="#4dffeb"/><stop offset="0.014" stop-color="#52ffeb"/><stop offset="0.029" stop-color="#7affeb"/><stop offset="0.067" stop-color="#a6ffec"/><stop offset="0.138" stop-color="#d2ffee"/><stop offset="0.286" stop-color="#fffdeb"/><stop offset="0.543" stop-color="#ffb195"/><stop offset="0.767" stop-color="#ff7651"/><stop offset="0.938" stop-color="#ff561e"/><stop offset="0.967" stop-color="#ff5108"/><stop offset="0.976" stop-color="#ff5000"/><stop offset="1.000" stop-color="#ff4c00"/></linearGradient><linearGradient id="i47" gradientUnits="userSpaceOnUse" x1="900.4" y1="0" x2="1542.4" y2="0"><stop offset="0.000" stop-color="#4effee"/><stop offset="0.014" stop-color="#54ffee"/><stop offset="0.028" stop-color="#7cffef"/><stop offset="0.060" stop-color="#a5ffef"/><stop offset="0.135" stop-color="#d4fff1"/><stop offset="0.274" stop-color="#fffeee"/><stop offset="0.474" stop-color="#ffc3ae"/><stop offset="0.721" stop-color="#ff7b5c"/><stop offset="0.926" stop-color="#ff5223"/><stop offset="0.963" stop-color="#ff4c0e"/><stop offset="0.972" stop-color="#ff4a00"/><stop offset="1.000" stop-color="#ff4500"/></linearGradient><linearGradient id="i48" gradientUnits="userSpaceOnUse" x1="898.0" y1="0" x2="1553.7" y2="0"><stop offset="0.000" stop-color="#4ffff1"/><stop offset="0.014" stop-color="#55fff1"/><stop offset="0.027" stop-color="#7efff1"/><stop offset="0.064" stop-color="#aafff2"/><stop offset="0.137" stop-color="#d8fff4"/><stop offset="0.265" stop-color="#fffef1"/><stop offset="0.452" stop-color="#ffc7b7"/><stop offset="0.685" stop-color="#ff7e66"/><stop offset="0.932" stop-color="#ff4a21"/><stop offset="0.963" stop-color="#ff440e"/><stop offset="0.973" stop-color="#ff4300"/><stop offset="1.000" stop-color="#ff3d00"/></linearGradient><linearGradient id="i49" gradientUnits="userSpaceOnUse" x1="895.6" y1="0" x2="1565.0" y2="0"><stop offset="0.000" stop-color="#50fff4"/><stop offset="0.013" stop-color="#56fff4"/><stop offset="0.027" stop-color="#7efff4"/><stop offset="0.058" stop-color="#a8fff5"/><stop offset="0.121" stop-color="#d3fff6"/><stop offset="0.250" stop-color="#fffff6"/><stop offset="0.442" stop-color="#ffc7ba"/><stop offset="0.674" stop-color="#ff7b68"/><stop offset="0.924" stop-color="#ff4524"/><stop offset="0.964" stop-color="#ff3d0e"/><stop offset="0.973" stop-color="#ff3b00"/><stop offset="1.000" stop-color="#ff3500"/></linearGradient><linearGradient id="i50" gradientUnits="userSpaceOnUse" x1="893.3" y1="0" x2="1576.2" y2="0"><stop offset="0.000" stop-color="#50fff7"/><stop offset="0.013" stop-color="#56fff7"/><stop offset="0.026" stop-color="#7ffff7"/><stop offset="0.053" stop-color="#a4fff7"/><stop offset="0.114" stop-color="#d2fff8"/><stop offset="0.228" stop-color="#fcfff9"/><stop offset="0.395" stop-color="#ffd3cc"/><stop offset="0.649" stop-color="#ff7c6f"/><stop offset="0.930" stop-color="#ff3c22"/><stop offset="0.965" stop-color="#ff340d"/><stop offset="0.974" stop-color="#ff3200"/><stop offset="1.000" stop-color="#ff2b00"/></linearGradient><linearGradient id="i51" gradientUnits="userSpaceOnUse" x1="890.9" y1="0" x2="1587.5" y2="0"><stop offset="0.000" stop-color="#50fff9"/><stop offset="0.013" stop-color="#56fffa"/><stop offset="0.026" stop-color="#80fffa"/><stop offset="0.056" stop-color="#a9fffa"/><stop offset="0.116" stop-color="#d5fffb"/><stop offset="0.227" stop-color="#fefffb"/><stop offset="0.395" stop-color="#ffd0cb"/><stop offset="0.665" stop-color="#ff7269"/><stop offset="0.936" stop-color="#ff3220"/><stop offset="0.966" stop-color="#ff2a0d"/><stop offset="0.974" stop-color="#ff2700"/><stop offset="1.000" stop-color="#ff1d00"/></linearGradient><linearGradient id="i52" gradientUnits="userSpaceOnUse" x1="888.5" y1="0" x2="1589.5" y2="0"><stop offset="0.000" stop-color="#4ffffd"/><stop offset="0.013" stop-color="#55fffd"/><stop offset="0.026" stop-color="#80fffd"/><stop offset="0.056" stop-color="#a9fffd"/><stop offset="0.115" stop-color="#d6fffd"/><stop offset="0.222" stop-color="#fefffd"/><stop offset="0.393" stop-color="#ffcfcd"/><stop offset="0.641" stop-color="#ff7673"/><stop offset="0.949" stop-color="#ff2720"/><stop offset="0.979" stop-color="#ff1b0d"/><stop offset="0.987" stop-color="#ff1700"/><stop offset="1.000" stop-color="#ff0c00"/></linearGradient><linearGradient id="i53" gradientUnits="userSpaceOnUse" x1="886.1" y1="0" x2="1573.1" y2="0"><stop offset="0.000" stop-color="#4dfeff"/><stop offset="0.013" stop-color="#53feff"/><stop offset="0.022" stop-color="#74feff"/><stop offset="0.043" stop-color="#9afeff"/><stop offset="0.096" stop-color="#c9feff"/><stop offset="0.178" stop-color="#f0feff"/><stop offset="0.248" stop-color="#fff9fa"/><stop offset="0.426" stop-color="#ffc5c6"/><stop offset="0.670" stop-color="#ff6f71"/><stop offset="0.970" stop-color="#ff2026"/><stop offset="1.000" stop-color="#ff0d1a"/></linearGradient><linearGradient id="i54" gradientUnits="userSpaceOnUse" x1="883.8" y1="0" x2="1556.7" y2="0"><stop offset="0.000" stop-color="#4bfbff"/><stop offset="0.013" stop-color="#51fbff"/><stop offset="0.022" stop-color="#73fbff"/><stop offset="0.044" stop-color="#98fbff"/><stop offset="0.102" stop-color="#cbfcff"/><stop offset="0.196" stop-color="#f3fcff"/><stop offset="0.262" stop-color="#fff6f9"/><stop offset="0.440" stop-color="#ffc2c6"/><stop offset="0.684" stop-color="#ff6c73"/><stop offset="0.964" stop-color="#ff2233"/><stop offset="1.000" stop-color="#ff0e29"/></linearGradient><linearGradient id="i55" gradientUnits="userSpaceOnUse" x1="881.5" y1="0" x2="1540.4" y2="0"><stop offset="0.000" stop-color="#49f8ff"/><stop offset="0.014" stop-color="#4ff8ff"/><stop offset="0.023" stop-color="#71f8ff"/><stop offset="0.050" stop-color="#9cf9ff"/><stop offset="0.109" stop-color="#cbf9ff"/><stop offset="0.200" stop-color="#f2faff"/><stop offset="0.264" stop-color="#fff6fb"/><stop offset="0.464" stop-color="#ffbcc3"/><stop offset="0.682" stop-color="#ff6f7a"/><stop offset="0.968" stop-color="#ff213b"/><stop offset="1.000" stop-color="#ff0e33"/></linearGradient><linearGradient id="i56" gradientUnits="userSpaceOnUse" x1="879.3" y1="0" x2="1524.0" y2="0"><stop offset="0.000" stop-color="#46f5ff"/><stop offset="0.014" stop-color="#4cf5ff"/><stop offset="0.023" stop-color="#6ff5ff"/><stop offset="0.047" stop-color="#94f5ff"/><stop offset="0.102" stop-color="#c4f6ff"/><stop offset="0.195" stop-color="#eef7ff"/><stop offset="0.274" stop-color="#fff3fb"/><stop offset="0.460" stop-color="#ffbfc9"/><stop offset="0.716" stop-color="#ff6678"/><stop offset="0.967" stop-color="#ff2143"/><stop offset="1.000" stop-color="#ff0f3c"/></linearGradient><linearGradient id="i57" gradientUnits="userSpaceOnUse" x1="877.0" y1="0" x2="1507.6" y2="0"><stop offset="0.000" stop-color="#43f1ff"/><stop offset="0.014" stop-color="#49f1ff"/><stop offset="0.024" stop-color="#6df2ff"/><stop offset="0.052" stop-color="#97f3ff"/><stop offset="0.118" stop-color="#caf3ff"/><stop offset="0.218" stop-color="#f2f5ff"/><stop offset="0.284" stop-color="#fff0fb"/><stop offset="0.483" stop-color="#ffb8c6"/><stop offset="0.749" stop-color="#ff5f76"/><stop offset="0.972" stop-color="#ff2149"/><stop offset="1.000" stop-color="#ff1044"/></linearGradient><linearGradient id="i58" gradientUnits="userSpaceOnUse" x1="874.8" y1="0" x2="1491.2" y2="0"><stop offset="0.000" stop-color="#40eeff"/><stop offset="0.015" stop-color="#45eeff"/><stop offset="0.019" stop-color="#5deeff"/><stop offset="0.039" stop-color="#83eeff"/><stop offset="0.087" stop-color="#b2f0ff"/><stop offset="0.170" stop-color="#def1ff"/><stop offset="0.286" stop-color="#ffeffd"/><stop offset="0.485" stop-color="#ffb9ca"/><stop offset="0.752" stop-color="#ff5f7c"/><stop offset="0.976" stop-color="#ff1f50"/><stop offset="1.000" stop-color="#ff114b"/></linearGradient><linearGradient id="i59" gradientUnits="userSpaceOnUse" x1="872.5" y1="0" x2="1474.8" y2="0"><stop offset="0.000" stop-color="#3ceaff"/><stop offset="0.015" stop-color="#41ebff"/><stop offset="0.020" stop-color="#5aebff"/><stop offset="0.040" stop-color="#80ebff"/><stop offset="0.095" stop-color="#b3edff"/><stop offset="0.184" stop-color="#e0eeff"/><stop offset="0.299" stop-color="#ffecfc"/><stop offset="0.512" stop-color="#ffb1c7"/><stop offset="0.791" stop-color="#ff567a"/><stop offset="0.980" stop-color="#ff1e56"/><stop offset="1.000" stop-color="#ff1253"/></linearGradient><linearGradient id="i60" gradientUnits="userSpaceOnUse" x1="870.3" y1="0" x2="1458.4" y2="0"><stop offset="0.000" stop-color="#38e7ff"/><stop offset="0.015" stop-color="#3de7ff"/><stop offset="0.020" stop-color="#57e8ff"/><stop offset="0.041" stop-color="#7ce8ff"/><stop offset="0.086" stop-color="#a8e9ff"/><stop offset="0.173" stop-color="#d8ebff"/><stop offset="0.305" stop-color="#ffe9fe"/><stop offset="0.518" stop-color="#ffb0c9"/><stop offset="0.802" stop-color="#ff557d"/><stop offset="0.985" stop-color="#ff1c5c"/><stop offset="1.000" stop-color="#ff1359"/></linearGradient><linearGradient id="i61" gradientUnits="userSpaceOnUse" x1="868.1" y1="0" x2="1442.0" y2="0"><stop offset="0.000" stop-color="#35e3ff"/><stop offset="0.016" stop-color="#39e4ff"/><stop offset="0.021" stop-color="#54e3ff"/><stop offset="0.036" stop-color="#73e4ff"/><stop offset="0.089" stop-color="#a5e5ff"/><stop offset="0.188" stop-color="#dae7ff"/><stop offset="0.318" stop-color="#ffe6fd"/><stop offset="0.547" stop-color="#ffa7c6"/><stop offset="0.833" stop-color="#ff4d7d"/><stop offset="0.979" stop-color="#ff2062"/><stop offset="1.000" stop-color="#ff135f"/></linearGradient><linearGradient id="i62" gradientUnits="userSpaceOnUse" x1="865.8" y1="0" x2="1425.6" y2="0"><stop offset="0.000" stop-color="#31dfff"/><stop offset="0.016" stop-color="#35dfff"/><stop offset="0.021" stop-color="#51e0ff"/><stop offset="0.043" stop-color="#76e1ff"/><stop offset="0.102" stop-color="#a9e2ff"/><stop offset="0.209" stop-color="#dde3ff"/><stop offset="0.337" stop-color="#ffdffc"/><stop offset="0.567" stop-color="#ffa2c5"/><stop offset="0.877" stop-color="#ff437a"/><stop offset="0.989" stop-color="#ff1b67"/><stop offset="1.000" stop-color="#ff1565"/></linearGradient><linearGradient id="i63" gradientUnits="userSpaceOnUse" x1="863.6" y1="0" x2="1409.2" y2="0"><stop offset="0.000" stop-color="#2ddcff"/><stop offset="0.016" stop-color="#31dbff"/><stop offset="0.022" stop-color="#4edcff"/><stop offset="0.038" stop-color="#6cdcff"/><stop offset="0.088" stop-color="#9addff"/><stop offset="0.181" stop-color="#cedfff"/><stop offset="0.341" stop-color="#ffddfe"/><stop offset="0.599" stop-color="#ff98c1"/><stop offset="0.901" stop-color="#ff3d7c"/><stop offset="1.000" stop-color="#ff166c"/></linearGradient><linearGradient id="i64" gradientUnits="userSpaceOnUse" x1="861.3" y1="0" x2="1392.8" y2="0"><stop offset="0.000" stop-color="#29d8ff"/><stop offset="0.017" stop-color="#31d8ff"/><stop offset="0.022" stop-color="#4bd8ff"/><stop offset="0.045" stop-color="#6fd9ff"/><stop offset="0.096" stop-color="#9ad9ff"/><stop offset="0.185" stop-color="#cbdbff"/><stop offset="0.354" stop-color="#ffd9fe"/><stop offset="0.663" stop-color="#ff86b6"/><stop offset="0.961" stop-color="#ff2a78"/><stop offset="1.000" stop-color="#ff1772"/></linearGradient><linearGradient id="i65" gradientUnits="userSpaceOnUse" x1="859.1" y1="0" x2="1376.4" y2="0"><stop offset="0.000" stop-color="#25d3ff"/><stop offset="0.012" stop-color="#27d4ff"/><stop offset="0.017" stop-color="#33d4ff"/><stop offset="0.023" stop-color="#49d3ff"/><stop offset="0.046" stop-color="#6cd4ff"/><stop offset="0.116" stop-color="#a3d5ff"/><stop offset="0.254" stop-color="#dfd6ff"/><stop offset="0.376" stop-color="#ffd2fc"/><stop offset="0.682" stop-color="#ff81b7"/><stop offset="0.977" stop-color="#ff257c"/><stop offset="1.000" stop-color="#ff1978"/></linearGradient><linearGradient id="i66" gradientUnits="userSpaceOnUse" x1="856.8" y1="0" x2="1360.0" y2="0"><stop offset="0.000" stop-color="#21cfff"/><stop offset="0.012" stop-color="#23d0ff"/><stop offset="0.024" stop-color="#46cfff"/><stop offset="0.048" stop-color="#69d0ff"/><stop offset="0.107" stop-color="#98d0ff"/><stop offset="0.214" stop-color="#ccd1ff"/><stop offset="0.387" stop-color="#ffcdfe"/><stop offset="0.702" stop-color="#ff7cb7"/><stop offset="0.982" stop-color="#ff2581"/><stop offset="1.000" stop-color="#ff1b7e"/></linearGradient><linearGradient id="i67" gradientUnits="userSpaceOnUse" x1="854.6" y1="0" x2="1343.6" y2="0"><stop offset="0.000" stop-color="#1eccff"/><stop offset="0.012" stop-color="#20cbff"/><stop offset="0.024" stop-color="#43ccff"/><stop offset="0.055" stop-color="#6bcbff"/><stop offset="0.122" stop-color="#9cccff"/><stop offset="0.256" stop-color="#d6cdff"/><stop offset="0.409" stop-color="#ffc6fc"/><stop offset="0.762" stop-color="#ff6baf"/><stop offset="0.976" stop-color="#ff2988"/><stop offset="1.000" stop-color="#ff1c84"/></linearGradient><linearGradient id="i68" gradientUnits="userSpaceOnUse" x1="852.4" y1="0" x2="1327.2" y2="0"><stop offset="0.000" stop-color="#1bc7ff"/><stop offset="0.013" stop-color="#1cc7ff"/><stop offset="0.031" stop-color="#4cc7ff"/><stop offset="0.069" stop-color="#73c7ff"/><stop offset="0.157" stop-color="#a9c8ff"/><stop offset="0.321" stop-color="#e5c6ff"/><stop offset="0.428" stop-color="#ffbffc"/><stop offset="0.805" stop-color="#ff60ad"/><stop offset="0.987" stop-color="#ff258c"/><stop offset="1.000" stop-color="#ff1e8b"/></linearGradient><linearGradient id="i69" gradientUnits="userSpaceOnUse" x1="850.1" y1="0" x2="1310.8" y2="0"><stop offset="0.000" stop-color="#17c3ff"/><stop offset="0.013" stop-color="#19c3ff"/><stop offset="0.026" stop-color="#3ec3ff"/><stop offset="0.052" stop-color="#60c3ff"/><stop offset="0.123" stop-color="#92c2ff"/><stop offset="0.266" stop-color="#cfc2ff"/><stop offset="0.442" stop-color="#ffbafd"/><stop offset="0.825" stop-color="#ff5caf"/><stop offset="0.987" stop-color="#ff2792"/><stop offset="1.000" stop-color="#ff2091"/></linearGradient><linearGradient id="i70" gradientUnits="userSpaceOnUse" x1="847.9" y1="0" x2="1294.4" y2="0"><stop offset="0.000" stop-color="#15bfff"/><stop offset="0.013" stop-color="#16bfff"/><stop offset="0.027" stop-color="#3dbfff"/><stop offset="0.060" stop-color="#63bfff"/><stop offset="0.141" stop-color="#96beff"/><stop offset="0.295" stop-color="#d3bcff"/><stop offset="0.463" stop-color="#ffb3fd"/><stop offset="0.859" stop-color="#ff53ae"/><stop offset="0.993" stop-color="#ff2698"/><stop offset="1.000" stop-color="#ff2296"/></linearGradient><linearGradient id="i71" gradientUnits="userSpaceOnUse" x1="845.6" y1="0" x2="1278.0" y2="0"><stop offset="0.000" stop-color="#12baff"/><stop offset="0.014" stop-color="#13bbff"/><stop offset="0.021" stop-color="#2bbbff"/><stop offset="0.041" stop-color="#4dbaff"/><stop offset="0.103" stop-color="#7db9ff"/><stop offset="0.234" stop-color="#b9b8ff"/><stop offset="0.462" stop-color="#fcafff"/><stop offset="0.828" stop-color="#ff5cb9"/><stop offset="0.993" stop-color="#ff289e"/><stop offset="1.000" stop-color="#ff239d"/></linearGradient><linearGradient id="i72" gradientUnits="userSpaceOnUse" x1="843.4" y1="0" x2="1261.6" y2="0"><stop offset="0.000" stop-color="#10b7ff"/><stop offset="0.014" stop-color="#11b6ff"/><stop offset="0.029" stop-color="#39b5ff"/><stop offset="0.071" stop-color="#64b5ff"/><stop offset="0.164" stop-color="#97b4ff"/><stop offset="0.336" stop-color="#d5afff"/><stop offset="0.507" stop-color="#ffa4fd"/><stop offset="0.843" stop-color="#ff59bc"/><stop offset="0.993" stop-color="#ff29a4"/><stop offset="1.000" stop-color="#ff25a3"/></linearGradient><linearGradient id="i73" gradientUnits="userSpaceOnUse" x1="841.2" y1="0" x2="1245.2" y2="0"><stop offset="0.000" stop-color="#0db2ff"/><stop offset="0.015" stop-color="#0eb2ff"/><stop offset="0.022" stop-color="#29b2ff"/><stop offset="0.044" stop-color="#49b1ff"/><stop offset="0.111" stop-color="#79b0ff"/><stop offset="0.252" stop-color="#b4adff"/><stop offset="0.504" stop-color="#fba0ff"/><stop offset="0.874" stop-color="#ff51bc"/><stop offset="1.000" stop-color="#ff27aa"/></linearGradient><linearGradient id="i74" gradientUnits="userSpaceOnUse" x1="838.9" y1="0" x2="1228.9" y2="0"><stop offset="0.000" stop-color="#0baeff"/><stop offset="0.015" stop-color="#0caeff"/><stop offset="0.023" stop-color="#28adff"/><stop offset="0.046" stop-color="#48adff"/><stop offset="0.115" stop-color="#76abff"/><stop offset="0.262" stop-color="#b2a7ff"/><stop offset="0.546" stop-color="#ff98ff"/><stop offset="0.892" stop-color="#ff4cc0"/><stop offset="1.000" stop-color="#ff28b0"/></linearGradient><linearGradient id="i75" gradientUnits="userSpaceOnUse" x1="836.7" y1="0" x2="1212.5" y2="0"><stop offset="0.000" stop-color="#0aaaff"/><stop offset="0.016" stop-color="#0aaaff"/><stop offset="0.024" stop-color="#27a9ff"/><stop offset="0.056" stop-color="#4da8ff"/><stop offset="0.143" stop-color="#80a6ff"/><stop offset="0.325" stop-color="#c0a0ff"/><stop offset="0.579" stop-color="#ff8ffe"/><stop offset="0.929" stop-color="#ff42c0"/><stop offset="1.000" stop-color="#ff2ab6"/></linearGradient><linearGradient id="i76" gradientUnits="userSpaceOnUse" x1="834.4" y1="0" x2="1196.1" y2="0"><stop offset="0.000" stop-color="#08a6ff"/><stop offset="0.017" stop-color="#09a5ff"/><stop offset="0.025" stop-color="#27a5ff"/><stop offset="0.058" stop-color="#4ca4ff"/><stop offset="0.140" stop-color="#7ba1ff"/><stop offset="0.355" stop-color="#c399ff"/><stop offset="0.612" stop-color="#ff86fd"/><stop offset="0.950" stop-color="#ff3dc3"/><stop offset="1.000" stop-color="#ff2bbc"/></linearGradient><linearGradient id="i77" gradientUnits="userSpaceOnUse" x1="832.2" y1="0" x2="1179.7" y2="0"><stop offset="0.000" stop-color="#07a2ff"/><stop offset="0.017" stop-color="#07a1ff"/><stop offset="0.026" stop-color="#27a1ff"/><stop offset="0.060" stop-color="#4a9fff"/><stop offset="0.155" stop-color="#7c9cff"/><stop offset="0.362" stop-color="#bf94ff"/><stop offset="0.647" stop-color="#ff7efd"/><stop offset="0.957" stop-color="#ff3ac9"/><stop offset="1.000" stop-color="#ff2bc3"/></linearGradient><linearGradient id="i78" gradientUnits="userSpaceOnUse" x1="829.9" y1="0" x2="1163.3" y2="0"><stop offset="0.000" stop-color="#069dff"/><stop offset="0.018" stop-color="#079dff"/><stop offset="0.027" stop-color="#279dff"/><stop offset="0.063" stop-color="#499bff"/><stop offset="0.170" stop-color="#7e97ff"/><stop offset="0.402" stop-color="#c38cff"/><stop offset="0.679" stop-color="#ff77fd"/><stop offset="0.964" stop-color="#ff38ce"/><stop offset="1.000" stop-color="#ff2cc9"/></linearGradient><linearGradient id="i79" gradientUnits="userSpaceOnUse" x1="827.7" y1="0" x2="1146.9" y2="0"><stop offset="0.000" stop-color="#059aff"/><stop offset="0.009" stop-color="#0599ff"/><stop offset="0.019" stop-color="#0f99ff"/><stop offset="0.028" stop-color="#2798ff"/><stop offset="0.075" stop-color="#4e97ff"/><stop offset="0.215" stop-color="#8a91ff"/><stop offset="0.514" stop-color="#d780ff"/><stop offset="0.729" stop-color="#ff6cfb"/><stop offset="0.981" stop-color="#ff32d3"/><stop offset="1.000" stop-color="#ff2cd0"/></linearGradient><linearGradient id="i80" gradientUnits="userSpaceOnUse" x1="825.5" y1="0" x2="1130.5" y2="0"><stop offset="0.000" stop-color="#0496ff"/><stop offset="0.010" stop-color="#0495ff"/><stop offset="0.039" stop-color="#3294ff"/><stop offset="0.108" stop-color="#5d91ff"/><stop offset="0.265" stop-color="#948aff"/><stop offset="0.608" stop-color="#e474ff"/><stop offset="0.765" stop-color="#ff63fc"/><stop offset="0.990" stop-color="#ff2fd9"/><stop offset="1.000" stop-color="#ff2cd8"/></linearGradient><linearGradient id="i81" gradientUnits="userSpaceOnUse" x1="823.2" y1="0" x2="1114.1" y2="0"><stop offset="0.000" stop-color="#0391ff"/><stop offset="0.010" stop-color="#0391ff"/><stop offset="0.031" stop-color="#2691ff"/><stop offset="0.072" stop-color="#478fff"/><stop offset="0.196" stop-color="#7b89ff"/><stop offset="0.474" stop-color="#c27aff"/><stop offset="0.794" stop-color="#fe5cff"/><stop offset="0.990" stop-color="#ff30e1"/><stop offset="1.000" stop-color="#ff2cdf"/></linearGradient><linearGradient id="i82" gradientUnits="userSpaceOnUse" x1="821.0" y1="0" x2="1097.7" y2="0"><stop offset="0.000" stop-color="#038dff"/><stop offset="0.011" stop-color="#038dff"/><stop offset="0.032" stop-color="#268cff"/><stop offset="0.086" stop-color="#4c8aff"/><stop offset="0.237" stop-color="#8384ff"/><stop offset="0.581" stop-color="#d06eff"/><stop offset="0.860" stop-color="#ff4efd"/><stop offset="1.000" stop-color="#ff2ce8"/></linearGradient><linearGradient id="i83" gradientUnits="userSpaceOnUse" x1="818.7" y1="0" x2="1081.3" y2="0"><stop offset="0.000" stop-color="#0289ff"/><stop offset="0.011" stop-color="#0289ff"/><stop offset="0.034" stop-color="#2688ff"/><stop offset="0.091" stop-color="#4c85ff"/><stop offset="0.250" stop-color="#827eff"/><stop offset="0.602" stop-color="#cd68ff"/><stop offset="0.898" stop-color="#fe46ff"/><stop offset="1.000" stop-color="#ff2df0"/></linearGradient><linearGradient id="i84" gradientUnits="userSpaceOnUse" x1="816.5" y1="0" x2="1064.9" y2="0"><stop offset="0.000" stop-color="#0286ff"/><stop offset="0.012" stop-color="#0285ff"/><stop offset="0.036" stop-color="#2784ff"/><stop offset="0.108" stop-color="#5181ff"/><stop offset="0.289" stop-color="#8778ff"/><stop offset="0.651" stop-color="#cd60ff"/><stop offset="0.928" stop-color="#f93eff"/><stop offset="1.000" stop-color="#ff2dfa"/></linearGradient><linearGradient id="i85" gradientUnits="userSpaceOnUse" x1="814.2" y1="0" x2="1048.5" y2="0"><stop offset="0.000" stop-color="#0182ff"/><stop offset="0.013" stop-color="#0181ff"/><stop offset="0.025" stop-color="#1881ff"/><stop offset="0.063" stop-color="#387fff"/><stop offset="0.165" stop-color="#617aff"/><stop offset="0.430" stop-color="#9f6cff"/><stop offset="0.848" stop-color="#e448ff"/><stop offset="1.000" stop-color="#fa2dff"/></linearGradient><linearGradient id="i86" gradientUnits="userSpaceOnUse" x1="812.0" y1="0" x2="1032.2" y2="0"><stop offset="0.000" stop-color="#017eff"/><stop offset="0.014" stop-color="#017dff"/><stop offset="0.027" stop-color="#197dff"/><stop offset="0.068" stop-color="#397bff"/><stop offset="0.189" stop-color="#6575ff"/><stop offset="0.500" stop-color="#a664ff"/><stop offset="0.865" stop-color="#de43ff"/><stop offset="1.000" stop-color="#f02cff"/></linearGradient><linearGradient id="i87" gradientUnits="userSpaceOnUse" x1="809.8" y1="0" x2="1015.8" y2="0"><stop offset="0.000" stop-color="#0179ff"/><stop offset="0.014" stop-color="#0178ff"/><stop offset="0.029" stop-color="#1a78ff"/><stop offset="0.072" stop-color="#3977ff"/><stop offset="0.203" stop-color="#6571ff"/><stop offset="0.536" stop-color="#a55eff"/><stop offset="0.928" stop-color="#dc38ff"/><stop offset="1.000" stop-color="#e52aff"/></linearGradient><linearGradient id="i88" gradientUnits="userSpaceOnUse" x1="807.5" y1="0" x2="999.5" y2="0"><stop offset="0.000" stop-color="#0175ff"/><stop offset="0.016" stop-color="#0174ff"/><stop offset="0.031" stop-color="#1c73ff"/><stop offset="0.078" stop-color="#3971ff"/><stop offset="0.219" stop-color="#656cff"/><stop offset="0.594" stop-color="#a756ff"/><stop offset="0.922" stop-color="#d237ff"/><stop offset="1.000" stop-color="#db29ff"/></linearGradient><linearGradient id="i89" gradientUnits="userSpaceOnUse" x1="805.3" y1="0" x2="983.1" y2="0"><stop offset="0.000" stop-color="#0070ff"/><stop offset="0.017" stop-color="#0170ff"/><stop offset="0.033" stop-color="#1b6fff"/><stop offset="0.083" stop-color="#386dff"/><stop offset="0.267" stop-color="#6b66ff"/><stop offset="0.717" stop-color="#b04aff"/><stop offset="1.000" stop-color="#d129ff"/></linearGradient><linearGradient id="i90" gradientUnits="userSpaceOnUse" x1="803.0" y1="0" x2="966.7" y2="0"><stop offset="0.000" stop-color="#006cff"/><stop offset="0.018" stop-color="#006cff"/><stop offset="0.036" stop-color="#1c6bff"/><stop offset="0.109" stop-color="#3f68ff"/><stop offset="0.327" stop-color="#705eff"/><stop offset="0.836" stop-color="#b53dff"/><stop offset="1.000" stop-color="#c728ff"/></linearGradient><linearGradient id="i91" gradientUnits="userSpaceOnUse" x1="800.8" y1="0" x2="950.4" y2="0"><stop offset="0.000" stop-color="#0068ff"/><stop offset="0.020" stop-color="#0067ff"/><stop offset="0.040" stop-color="#1d66ff"/><stop offset="0.100" stop-color="#3964ff"/><stop offset="0.300" stop-color="#665cff"/><stop offset="0.800" stop-color="#a83eff"/><stop offset="1.000" stop-color="#bd28ff"/></linearGradient><linearGradient id="i92" gradientUnits="userSpaceOnUse" x1="798.6" y1="0" x2="934.0" y2="0"><stop offset="0.000" stop-color="#0063ff"/><stop offset="0.022" stop-color="#0063ff"/><stop offset="0.043" stop-color="#1e62ff"/><stop offset="0.152" stop-color="#445eff"/><stop offset="0.457" stop-color="#7850ff"/><stop offset="0.935" stop-color="#ac30ff"/><stop offset="1.000" stop-color="#b228ff"/></linearGradient><linearGradient id="i93" gradientUnits="userSpaceOnUse" x1="796.3" y1="0" x2="917.6" y2="0"><stop offset="0.000" stop-color="#005fff"/><stop offset="0.024" stop-color="#085eff"/><stop offset="0.049" stop-color="#1f5dff"/><stop offset="0.146" stop-color="#3f5aff"/><stop offset="0.463" stop-color="#724cff"/><stop offset="0.951" stop-color="#a32cff"/><stop offset="1.000" stop-color="#a727ff"/></linearGradient><linearGradient id="i94" gradientUnits="userSpaceOnUse" x1="794.1" y1="0" x2="901.3" y2="0"><stop offset="0.000" stop-color="#005aff"/><stop offset="0.056" stop-color="#2058ff"/><stop offset="0.194" stop-color="#4453ff"/><stop offset="0.556" stop-color="#7544ff"/><stop offset="1.000" stop-color="#9c27ff"/></linearGradient><linearGradient id="i95" gradientUnits="userSpaceOnUse" x1="791.8" y1="0" x2="884.9" y2="0"><stop offset="0.000" stop-color="#0055ff"/><stop offset="0.094" stop-color="#2a52ff"/><stop offset="0.313" stop-color="#514bff"/><stop offset="0.875" stop-color="#8830ff"/><stop offset="1.000" stop-color="#9126ff"/></linearGradient><linearGradient id="i96" gradientUnits="userSpaceOnUse" x1="789.6" y1="0" x2="868.5" y2="0"><stop offset="0.000" stop-color="#004fff"/><stop offset="0.074" stop-color="#214dff"/><stop offset="0.296" stop-color="#4947ff"/><stop offset="0.889" stop-color="#7e2eff"/><stop offset="1.000" stop-color="#8526ff"/></linearGradient><linearGradient id="i97" gradientUnits="userSpaceOnUse" x1="787.3" y1="0" x2="852.2" y2="0"><stop offset="0.000" stop-color="#004aff"/><stop offset="0.091" stop-color="#2248ff"/><stop offset="0.364" stop-color="#4940ff"/><stop offset="1.000" stop-color="#7826ff"/></linearGradient><linearGradient id="i98" gradientUnits="userSpaceOnUse" x1="785.1" y1="0" x2="835.8" y2="0"><stop offset="0.000" stop-color="#0044ff"/><stop offset="0.118" stop-color="#2241ff"/><stop offset="0.412" stop-color="#453aff"/><stop offset="1.000" stop-color="#6a26ff"/></linearGradient><linearGradient id="i99" gradientUnits="userSpaceOnUse" x1="782.9" y1="0" x2="819.5" y2="0"><stop offset="0.000" stop-color="#003dff"/><stop offset="0.154" stop-color="#223aff"/><stop offset="0.615" stop-color="#4731ff"/><stop offset="1.000" stop-color="#5a26ff"/></linearGradient><linearGradient id="i100" gradientUnits="userSpaceOnUse" x1="780.6" y1="0" x2="803.1" y2="0"><stop offset="0.000" stop-color="#0035ff"/><stop offset="0.250" stop-color="#2232ff"/><stop offset="1.000" stop-color="#4726ff"/></linearGradient><linearGradient id="i101" gradientUnits="userSpaceOnUse" x1="778.4" y1="0" x2="786.7" y2="0"><stop offset="0.000" stop-color="#002cff"/><stop offset="0.333" stop-color="#162aff"/><stop offset="1.000" stop-color="#2b26ff"/></linearGradient></defs><rect x="402" y="443" width="1488" height="562" fill="#02080b"/><g clip-path="url(#clipL)"><rect x="653.7" y="503" width="41.3" height="3" fill="url(#o0)"/><rect x="629.2" y="506" width="92.7" height="3" fill="url(#o1)"/><rect x="613.0" y="509" width="128.7" height="3" fill="url(#o2)"/><rect x="601.0" y="512" width="155.6" height="3" fill="url(#o3)"/><rect x="592.2" y="515" width="179.3" height="3" fill="url(#o4)"/><rect x="583.7" y="518" width="203.3" height="3" fill="url(#o5)"/><rect x="576.0" y="521" width="227.4" height="3" fill="url(#o6)"/><rect x="569.1" y="524" width="250.7" height="3" fill="url(#o7)"/><rect x="563.7" y="527" width="270.3" height="3" fill="url(#o8)"/><rect x="560.5" y="530" width="285.5" height="3" fill="url(#o9)"/><rect x="557.3" y="533" width="300.7" height="3" fill="url(#o10)"/><rect x="554.1" y="536" width="314.7" height="3" fill="url(#o11)"/><rect x="550.9" y="539" width="328.4" height="3" fill="url(#o12)"/><rect x="547.7" y="542" width="342.2" height="3" fill="url(#o13)"/><rect x="544.8" y="545" width="355.6" height="3" fill="url(#o14)"/><rect x="543.4" y="548" width="367.6" height="3" fill="url(#o15)"/><rect x="542.0" y="551" width="379.5" height="3" fill="url(#o16)"/><rect x="540.6" y="554" width="391.3" height="3" fill="url(#o17)"/><rect x="539.2" y="557" width="402.2" height="3" fill="url(#o18)"/><rect x="537.8" y="560" width="413.1" height="3" fill="url(#o19)"/><rect x="536.6" y="563" width="423.8" height="3" fill="url(#o20)"/><rect x="535.8" y="566" width="434.1" height="3" fill="url(#o21)"/><rect x="534.9" y="569" width="444.4" height="3" fill="url(#o22)"/><rect x="534.1" y="572" width="454.7" height="3" fill="url(#o23)"/><rect x="533.3" y="575" width="465.0" height="3" fill="url(#o24)"/><rect x="532.4" y="578" width="475.0" height="3" fill="url(#o25)"/><rect x="531.6" y="581" width="484.8" height="3" fill="url(#o26)"/><rect x="531.1" y="584" width="494.2" height="3" fill="url(#o27)"/><rect x="530.7" y="587" width="503.6" height="3" fill="url(#o28)"/><rect x="530.2" y="590" width="513.0" height="3" fill="url(#o29)"/><rect x="529.7" y="593" width="522.4" height="3" fill="url(#o30)"/><rect x="529.2" y="596" width="531.8" height="3" fill="url(#o31)"/><rect x="529.0" y="599" width="541.0" height="3" fill="url(#o32)"/><rect x="528.9" y="602" width="550.0" height="3" fill="url(#o33)"/><rect x="528.8" y="605" width="559.0" height="3" fill="url(#o34)"/><rect x="528.8" y="608" width="568.0" height="3" fill="url(#o35)"/><rect x="528.7" y="611" width="577.0" height="3" fill="url(#o36)"/><rect x="528.6" y="614" width="586.0" height="3" fill="url(#o37)"/><rect x="528.5" y="617" width="595.0" height="3" fill="url(#o38)"/><rect x="528.6" y="620" width="603.9" height="3" fill="url(#o39)"/><rect x="528.7" y="623" width="612.7" height="3" fill="url(#o40)"/><rect x="528.8" y="626" width="621.5" height="3" fill="url(#o41)"/><rect x="529.0" y="629" width="630.3" height="3" fill="url(#o42)"/><rect x="529.1" y="632" width="639.1" height="3" fill="url(#o43)"/><rect x="529.2" y="635" width="647.9" height="3" fill="url(#o44)"/><rect x="529.3" y="638" width="656.7" height="3" fill="url(#o45)"/><rect x="529.5" y="641" width="665.5" height="3" fill="url(#o46)"/><rect x="529.8" y="644" width="674.2" height="3" fill="url(#o47)"/><rect x="530.1" y="647" width="682.8" height="3" fill="url(#o48)"/><rect x="530.5" y="650" width="691.3" height="3" fill="url(#o49)"/><rect x="530.8" y="653" width="699.9" height="3" fill="url(#o50)"/><rect x="531.1" y="656" width="708.5" height="3" fill="url(#o51)"/><rect x="531.5" y="659" width="717.1" height="3" fill="url(#o52)"/><rect x="531.9" y="662" width="725.6" height="3" fill="url(#o53)"/><rect x="532.5" y="665" width="734.0" height="3" fill="url(#o54)"/><rect x="533.1" y="668" width="742.3" height="3" fill="url(#o55)"/><rect x="533.6" y="671" width="750.7" height="3" fill="url(#o56)"/><rect x="534.2" y="674" width="759.1" height="3" fill="url(#o57)"/><rect x="534.7" y="677" width="767.4" height="3" fill="url(#o58)"/><rect x="535.3" y="680" width="775.8" height="3" fill="url(#o59)"/><rect x="535.8" y="683" width="784.2" height="3" fill="url(#o60)"/><rect x="536.4" y="686" width="792.6" height="3" fill="url(#o61)"/><rect x="537.0" y="689" width="800.9" height="3" fill="url(#o62)"/><rect x="537.5" y="692" width="809.3" height="3" fill="url(#o63)"/><rect x="538.3" y="695" width="817.4" height="3" fill="url(#o64)"/><rect x="539.4" y="698" width="825.3" height="3" fill="url(#o65)"/><rect x="540.5" y="701" width="833.1" height="3" fill="url(#o66)"/><rect x="541.6" y="704" width="840.9" height="3" fill="url(#o67)"/><rect x="542.7" y="707" width="848.8" height="3" fill="url(#o68)"/><rect x="543.9" y="710" width="856.5" height="3" fill="url(#o69)"/><rect x="545.1" y="713" width="864.2" height="3" fill="url(#o70)"/><rect x="546.3" y="716" width="871.9" height="3" fill="url(#o71)"/><rect x="547.6" y="719" width="879.6" height="3" fill="url(#o72)"/><rect x="548.8" y="722" width="887.3" height="3" fill="url(#o73)"/><rect x="550.0" y="725" width="895.0" height="3" fill="url(#o74)"/><rect x="551.3" y="728" width="902.7" height="3" fill="url(#o75)"/><rect x="552.5" y="731" width="910.4" height="3" fill="url(#o76)"/><rect x="553.8" y="734" width="918.1" height="3" fill="url(#o77)"/><rect x="555.0" y="737" width="925.8" height="3" fill="url(#o78)"/><rect x="556.2" y="740" width="933.5" height="3" fill="url(#o79)"/><rect x="557.5" y="743" width="941.2" height="3" fill="url(#o80)"/><rect x="558.7" y="746" width="948.9" height="3" fill="url(#o81)"/><rect x="559.9" y="749" width="956.6" height="3" fill="url(#o82)"/><rect x="561.3" y="752" width="964.1" height="3" fill="url(#o83)"/><rect x="563.0" y="755" width="971.4" height="3" fill="url(#o84)"/><rect x="564.7" y="758" width="978.6" height="3" fill="url(#o85)"/><rect x="566.4" y="761" width="985.8" height="3" fill="url(#o86)"/><rect x="568.1" y="764" width="993.0" height="3" fill="url(#o87)"/><rect x="569.8" y="767" width="1000.3" height="3" fill="url(#o88)"/><rect x="571.5" y="770" width="1007.5" height="3" fill="url(#o89)"/><rect x="573.2" y="773" width="1014.7" height="3" fill="url(#o90)"/><rect x="574.9" y="776" width="1022.0" height="3" fill="url(#o91)"/><rect x="576.6" y="779" width="1029.2" height="3" fill="url(#o92)"/><rect x="578.3" y="782" width="1036.4" height="3" fill="url(#o93)"/><rect x="580.0" y="785" width="1043.7" height="3" fill="url(#o94)"/><rect x="581.7" y="788" width="1050.9" height="3" fill="url(#o95)"/><rect x="583.9" y="791" width="1057.7" height="3" fill="url(#o96)"/><rect x="586.1" y="794" width="1064.2" height="3" fill="url(#o97)"/><rect x="588.4" y="797" width="1070.6" height="3" fill="url(#o98)"/><rect x="590.7" y="800" width="1077.1" height="3" fill="url(#o99)"/><rect x="592.9" y="803" width="1083.5" height="3" fill="url(#o100)"/><rect x="595.2" y="806" width="1090.0" height="3" fill="url(#o101)"/><rect x="597.6" y="809" width="1096.3" height="3" fill="url(#o102)"/><rect x="600.0" y="812" width="1104.3" height="3" fill="url(#o103)"/><rect x="602.4" y="815" width="1112.6" height="3" fill="url(#o104)"/><rect x="604.9" y="818" width="1115.5" height="3" fill="url(#o105)"/><rect x="607.3" y="821" width="1111.8" height="3" fill="url(#o106)"/><rect x="609.8" y="824" width="1090.3" height="3" fill="url(#o107)"/><rect x="612.2" y="827" width="1068.9" height="3" fill="url(#o108)"/><rect x="614.6" y="830" width="1047.4" height="3" fill="url(#o109)"/><rect x="617.1" y="833" width="1025.9" height="3" fill="url(#o110)"/><rect x="619.5" y="836" width="1004.5" height="3" fill="url(#o111)"/><rect x="622.0" y="839" width="982.9" height="3" fill="url(#o112)"/><rect x="624.5" y="842" width="961.3" height="3" fill="url(#o113)"/><rect x="627.1" y="845" width="939.8" height="3" fill="url(#o114)"/><rect x="629.6" y="848" width="918.2" height="3" fill="url(#o115)"/><rect x="632.1" y="851" width="896.7" height="3" fill="url(#o116)"/><rect x="634.6" y="854" width="875.1" height="3" fill="url(#o117)"/><rect x="637.2" y="857" width="853.6" height="3" fill="url(#o118)"/><rect x="639.7" y="860" width="832.0" height="3" fill="url(#o119)"/><rect x="642.2" y="863" width="810.4" height="3" fill="url(#o120)"/><rect x="645.1" y="866" width="788.6" height="3" fill="url(#o121)"/><rect x="647.9" y="869" width="766.7" height="3" fill="url(#o122)"/><rect x="650.7" y="872" width="744.8" height="3" fill="url(#o123)"/><rect x="653.6" y="875" width="723.0" height="3" fill="url(#o124)"/><rect x="656.7" y="878" width="700.8" height="3" fill="url(#o125)"/><rect x="659.9" y="881" width="678.6" height="3" fill="url(#o126)"/><rect x="663.2" y="884" width="656.3" height="3" fill="url(#o127)"/><rect x="666.4" y="887" width="634.0" height="3" fill="url(#o128)"/><rect x="669.7" y="890" width="611.7" height="3" fill="url(#o129)"/><rect x="672.9" y="893" width="589.4" height="3" fill="url(#o130)"/><rect x="676.2" y="896" width="567.1" height="3" fill="url(#o131)"/><rect x="679.4" y="899" width="544.9" height="3" fill="url(#o132)"/><rect x="682.7" y="902" width="522.6" height="3" fill="url(#o133)"/><rect x="685.9" y="905" width="500.3" height="3" fill="url(#o134)"/><rect x="689.4" y="908" width="477.8" height="3" fill="url(#o135)"/><rect x="693.0" y="911" width="455.1" height="3" fill="url(#o136)"/><rect x="696.6" y="914" width="432.5" height="3" fill="url(#o137)"/><rect x="700.2" y="917" width="409.9" height="3" fill="url(#o138)"/><rect x="703.9" y="920" width="387.2" height="3" fill="url(#o139)"/><rect x="707.6" y="923" width="364.4" height="3" fill="url(#o140)"/><rect x="711.4" y="926" width="341.6" height="3" fill="url(#o141)"/><rect x="715.1" y="929" width="318.8" height="3" fill="url(#o142)"/><rect x="718.9" y="932" width="296.0" height="3" fill="url(#o143)"/><rect x="722.6" y="935" width="273.3" height="3" fill="url(#o144)"/><rect x="726.4" y="938" width="250.5" height="3" fill="url(#o145)"/><rect x="730.8" y="941" width="227.0" height="3" fill="url(#o146)"/><rect x="735.5" y="944" width="203.3" height="3" fill="url(#o147)"/><rect x="740.1" y="947" width="179.7" height="3" fill="url(#o148)"/><rect x="744.7" y="950" width="156.0" height="3" fill="url(#o149)"/><rect x="749.3" y="953" width="132.4" height="3" fill="url(#o150)"/><rect x="755.0" y="956" width="107.7" height="3" fill="url(#o151)"/><rect x="762.2" y="959" width="81.4" height="3" fill="url(#o152)"/><rect x="769.7" y="962" width="54.9" height="3" fill="url(#o153)"/><rect x="779.0" y="965" width="29.0" height="3" fill="url(#o154)"/><ellipse cx="0" cy="0" rx="34" ry="62" fill="url(#glow)" transform="translate(884,766) rotate(38)"/></g><rect x="526" y="443" width="1" height="562" fill="#474747"/><rect x="691" y="443" width="1" height="562" fill="#474747"/><rect x="856" y="443" width="1" height="562" fill="#474747"/><rect x="1022" y="443" width="1" height="562" fill="#474747"/><rect x="1187" y="443" width="1" height="562" fill="#474747"/><rect x="1352" y="443" width="1" height="562" fill="#474747"/><rect x="1518" y="443" width="1" height="562" fill="#474747"/><rect x="1683" y="443" width="1" height="562" fill="#474747"/><rect x="402" y="471" width="1488" height="1" fill="#474747"/><rect x="402" y="527" width="1488" height="1" fill="#474747"/><rect x="402" y="583" width="1488" height="1" fill="#474747"/><rect x="402" y="639" width="1488" height="1" fill="#474747"/><rect x="402" y="695" width="1488" height="1" fill="#474747"/><rect x="402" y="752" width="1488" height="1" fill="#474747"/><rect x="402" y="808" width="1488" height="1" fill="#474747"/><rect x="402" y="864" width="1488" height="1" fill="#474747"/><rect x="402" y="920" width="1488" height="1" fill="#474747"/><text x="404" y="916" font-family="Liberation Serif" font-size="12" fill="#e8ecf8">0.1</text><text x="404" y="860" font-family="Liberation Serif" font-size="12" fill="#e8ecf8">0.2</text><text x="404" y="804" font-family="Liberation Serif" font-size="12" fill="#e8ecf8">0.3</text><text x="404" y="748" font-family="Liberation Serif" font-size="12" fill="#e8ecf8">0.4</text><text x="404" y="691" font-family="Liberation Serif" font-size="12" fill="#e8ecf8">0.5</text><text x="404" y="635" font-family="Liberation Serif" font-size="12" fill="#e8ecf8">0.6</text><text x="404" y="579" font-family="Liberation Serif" font-size="12" fill="#e8ecf8">0.7</text><text x="404" y="523" font-family="Liberation Serif" font-size="12" fill="#e8ecf8">0.8</text><text x="694" y="1000.5" font-family="Liberation Serif" font-size="12" fill="#e8ecf8">0.1</text><text x="859" y="1000.5" font-family="Liberation Serif" font-size="12" fill="#e8ecf8">0.2</text><text x="1025" y="1000.5" font-family="Liberation Serif" font-size="12" fill="#e8ecf8">0.3</text><text x="1190" y="1000.5" font-family="Liberation Serif" font-size="12" fill="#e8ecf8">0.4</text><text x="1355" y="1000.5" font-family="Liberation Serif" font-size="12" fill="#e8ecf8">0.5</text><text x="1521" y="1000.5" font-family="Liberation Serif" font-size="12" fill="#e8ecf8">0.6</text><text x="1686" y="1000.5" font-family="Liberation Serif" font-size="12" fill="#e8ecf8">0.7</text><g clip-path="url(#clipT)"><rect x="1012.6" y="632" width="8.2" height="3" fill="url(#i0)"/><rect x="1010.2" y="635" width="21.5" height="3" fill="url(#i1)"/><rect x="1007.8" y="638" width="34.7" height="3" fill="url(#i2)"/><rect x="1005.4" y="641" width="48.0" height="3" fill="url(#i3)"/><rect x="1003.1" y="644" width="61.2" height="3" fill="url(#i4)"/><rect x="1000.7" y="647" width="74.4" height="3" fill="url(#i5)"/><rect x="998.3" y="650" width="87.7" height="3" fill="url(#i6)"/><rect x="995.9" y="653" width="100.9" height="3" fill="url(#i7)"/><rect x="993.5" y="656" width="114.2" height="3" fill="url(#i8)"/><rect x="991.1" y="659" width="127.4" height="3" fill="url(#i9)"/><rect x="988.7" y="662" width="140.7" height="3" fill="url(#i10)"/><rect x="986.3" y="665" width="153.9" height="3" fill="url(#i11)"/><rect x="984.0" y="668" width="167.2" height="3" fill="url(#i12)"/><rect x="981.6" y="671" width="180.4" height="3" fill="url(#i13)"/><rect x="979.2" y="674" width="193.7" height="3" fill="url(#i14)"/><rect x="976.8" y="677" width="206.9" height="3" fill="url(#i15)"/><rect x="974.4" y="680" width="220.2" height="3" fill="url(#i16)"/><rect x="972.0" y="683" width="233.4" height="3" fill="url(#i17)"/><rect x="969.6" y="686" width="246.7" height="3" fill="url(#i18)"/><rect x="967.2" y="689" width="259.9" height="3" fill="url(#i19)"/><rect x="964.9" y="692" width="273.5" height="3" fill="url(#i20)"/><rect x="962.5" y="695" width="287.1" height="3" fill="url(#i21)"/><rect x="960.1" y="698" width="300.8" height="3" fill="url(#i22)"/><rect x="957.7" y="701" width="314.4" height="3" fill="url(#i23)"/><rect x="955.3" y="704" width="328.1" height="3" fill="url(#i24)"/><rect x="952.9" y="707" width="341.7" height="3" fill="url(#i25)"/><rect x="950.5" y="710" width="355.4" height="3" fill="url(#i26)"/><rect x="948.2" y="713" width="369.0" height="3" fill="url(#i27)"/><rect x="945.8" y="716" width="382.7" height="3" fill="url(#i28)"/><rect x="943.4" y="719" width="396.3" height="3" fill="url(#i29)"/><rect x="941.0" y="722" width="410.0" height="3" fill="url(#i30)"/><rect x="938.6" y="725" width="423.6" height="3" fill="url(#i31)"/><rect x="936.2" y="728" width="437.3" height="3" fill="url(#i32)"/><rect x="933.8" y="731" width="450.9" height="3" fill="url(#i33)"/><rect x="931.4" y="734" width="464.6" height="3" fill="url(#i34)"/><rect x="929.1" y="737" width="478.2" height="3" fill="url(#i35)"/><rect x="926.7" y="740" width="491.9" height="3" fill="url(#i36)"/><rect x="924.3" y="743" width="505.5" height="3" fill="url(#i37)"/><rect x="921.9" y="746" width="519.2" height="3" fill="url(#i38)"/><rect x="919.5" y="749" width="532.8" height="3" fill="url(#i39)"/><rect x="917.1" y="752" width="546.5" height="3" fill="url(#i40)"/><rect x="914.7" y="755" width="560.1" height="3" fill="url(#i41)"/><rect x="912.3" y="758" width="573.8" height="3" fill="url(#i42)"/><rect x="910.0" y="761" width="587.4" height="3" fill="url(#i43)"/><rect x="907.6" y="764" width="601.1" height="3" fill="url(#i44)"/><rect x="905.2" y="767" width="614.7" height="3" fill="url(#i45)"/><rect x="902.8" y="770" width="628.4" height="3" fill="url(#i46)"/><rect x="900.4" y="773" width="642.0" height="3" fill="url(#i47)"/><rect x="898.0" y="776" width="655.7" height="3" fill="url(#i48)"/><rect x="895.6" y="779" width="669.3" height="3" fill="url(#i49)"/><rect x="893.3" y="782" width="683.0" height="3" fill="url(#i50)"/><rect x="890.9" y="785" width="696.6" height="3" fill="url(#i51)"/><rect x="888.5" y="788" width="701.1" height="3" fill="url(#i52)"/><rect x="886.1" y="791" width="687.0" height="3" fill="url(#i53)"/><rect x="883.8" y="794" width="673.0" height="3" fill="url(#i54)"/><rect x="881.5" y="797" width="658.8" height="3" fill="url(#i55)"/><rect x="879.3" y="800" width="644.7" height="3" fill="url(#i56)"/><rect x="877.0" y="803" width="630.5" height="3" fill="url(#i57)"/><rect x="874.8" y="806" width="616.4" height="3" fill="url(#i58)"/><rect x="872.5" y="809" width="602.2" height="3" fill="url(#i59)"/><rect x="870.3" y="812" width="588.1" height="3" fill="url(#i60)"/><rect x="868.1" y="815" width="573.9" height="3" fill="url(#i61)"/><rect x="865.8" y="818" width="559.8" height="3" fill="url(#i62)"/><rect x="863.6" y="821" width="545.6" height="3" fill="url(#i63)"/><rect x="861.3" y="824" width="531.5" height="3" fill="url(#i64)"/><rect x="859.1" y="827" width="517.3" height="3" fill="url(#i65)"/><rect x="856.8" y="830" width="503.2" height="3" fill="url(#i66)"/><rect x="854.6" y="833" width="489.0" height="3" fill="url(#i67)"/><rect x="852.4" y="836" width="474.9" height="3" fill="url(#i68)"/><rect x="850.1" y="839" width="460.7" height="3" fill="url(#i69)"/><rect x="847.9" y="842" width="446.6" height="3" fill="url(#i70)"/><rect x="845.6" y="845" width="432.4" height="3" fill="url(#i71)"/><rect x="843.4" y="848" width="418.2" height="3" fill="url(#i72)"/><rect x="841.2" y="851" width="404.1" height="3" fill="url(#i73)"/><rect x="838.9" y="854" width="389.9" height="3" fill="url(#i74)"/><rect x="836.7" y="857" width="375.8" height="3" fill="url(#i75)"/><rect x="834.4" y="860" width="361.6" height="3" fill="url(#i76)"/><rect x="832.2" y="863" width="347.5" height="3" fill="url(#i77)"/><rect x="829.9" y="866" width="333.3" height="3" fill="url(#i78)"/><rect x="827.7" y="869" width="319.2" height="3" fill="url(#i79)"/><rect x="825.5" y="872" width="305.0" height="3" fill="url(#i80)"/><rect x="823.2" y="875" width="290.9" height="3" fill="url(#i81)"/><rect x="821.0" y="878" width="276.7" height="3" fill="url(#i82)"/><rect x="818.7" y="881" width="262.6" height="3" fill="url(#i83)"/><rect x="816.5" y="884" width="248.4" height="3" fill="url(#i84)"/><rect x="814.2" y="887" width="234.3" height="3" fill="url(#i85)"/><rect x="812.0" y="890" width="220.2" height="3" fill="url(#i86)"/><rect x="809.8" y="893" width="206.1" height="3" fill="url(#i87)"/><rect x="807.5" y="896" width="191.9" height="3" fill="url(#i88)"/><rect x="805.3" y="899" width="177.8" height="3" fill="url(#i89)"/><rect x="803.0" y="902" width="163.7" height="3" fill="url(#i90)"/><rect x="800.8" y="905" width="149.6" height="3" fill="url(#i91)"/><rect x="798.6" y="908" width="135.4" height="3" fill="url(#i92)"/><rect x="796.3" y="911" width="121.3" height="3" fill="url(#i93)"/><rect x="794.1" y="914" width="107.2" height="3" fill="url(#i94)"/><rect x="791.8" y="917" width="93.1" height="3" fill="url(#i95)"/><rect x="789.6" y="920" width="79.0" height="3" fill="url(#i96)"/><rect x="787.3" y="923" width="64.8" height="3" fill="url(#i97)"/><rect x="785.1" y="926" width="50.7" height="3" fill="url(#i98)"/><rect x="782.9" y="929" width="36.6" height="3" fill="url(#i99)"/><rect x="780.6" y="932" width="22.5" height="3" fill="url(#i100)"/><rect x="778.4" y="935" width="8.4" height="3" fill="url(#i101)"/></g><polygon points="790.0,967.5 780.0,966.2 770.0,962.5 755.0,956.2 730.0,940.0 705.0,920.0 690.0,907.5 657.5,877.5 645.0,864.2 622.5,837.5 598.8,808.2 585.0,790.0 563.8,752.5 546.2,710.0 540.8,695.0 534.6,661.7 532.5,643.0 531.5,620.0 532.0,599.0 534.6,582.5 539.8,563.8 548.0,546.0 568.0,527.3 582.5,521.0 603.0,513.8 624.0,508.5 657.5,504.4 690.8,504.4 700.0,505.2 731.2,509.0 778.0,518.4 825.0,527.0 856.2,534.8 928.0,555.2 1000.0,578.0 1643.0,794.0 1692.0,810.9 1712.4,816.6 1721.2,821.7 820.0,963.8 805.0,966.5" fill="none" stroke="#f0a800" stroke-width="1.3"/><path d="M402 791.5H1890" stroke="#c8c8c8" stroke-width="1" stroke-dasharray="4 3"/><path d="M1043.5 443V1005" stroke="#c8c8c8" stroke-width="1" stroke-dasharray="4 3"/><path d="M679 504L711 484" stroke="#c0c4d0" stroke-width="1"/><path d="M928 555L958 534" stroke="#c0c4d0" stroke-width="1"/><path d="M1155 628L1187 606" stroke="#c0c4d0" stroke-width="1"/><path d="M1316 683L1347 661" stroke="#c0c4d0" stroke-width="1"/><path d="M1425 720L1457 699" stroke="#c0c4d0" stroke-width="1"/><path d="M1530 755L1562 734" stroke="#c0c4d0" stroke-width="1"/><path d="M1643 794L1674 772" stroke="#c0c4d0" stroke-width="1"/><path d="M1692 811L1724 790" stroke="#c0c4d0" stroke-width="1"/><path d="M1712 817L1744 796" stroke="#c0c4d0" stroke-width="1"/><path d="M531 645L502 650" stroke="#c0c4d0" stroke-width="1"/><path d="M657 877.5L627 882.5" stroke="#c0c4d0" stroke-width="1"/><path d="M730 940L701 945.5" stroke="#c0c4d0" stroke-width="1"/><path d="M755 956L725 960" stroke="#c0c4d0" stroke-width="1"/><path d="M770 962.5L741 967.5" stroke="#c0c4d0" stroke-width="1"/><text transform="translate(712,486.6) scale(1.867,1)" font-family="Liberation Serif" font-size="11.5" fill="#eef2fa">520 nm</text><text transform="translate(959,537.6) scale(1.867,1)" font-family="Liberation Serif" font-size="11.5" fill="#eef2fa">540 nm</text><text transform="translate(1187,610.6) scale(1.867,1)" font-family="Liberation Serif" font-size="11.5" fill="#eef2fa">560 nm</text><text transform="translate(1347,664.6) scale(1.867,1)" font-family="Liberation Serif" font-size="11.5" fill="#eef2fa">580 nm</text><text transform="translate(1458,702.6) scale(1.867,1)" font-family="Liberation Serif" font-size="11.5" fill="#eef2fa">600 nm</text><text transform="translate(1562,738.6) scale(1.867,1)" font-family="Liberation Serif" font-size="11.5" fill="#eef2fa">620 nm</text><text transform="translate(1674,776.6) scale(1.867,1)" font-family="Liberation Serif" font-size="11.5" fill="#eef2fa">640 nm</text><text transform="translate(1724,794.6) scale(1.867,1)" font-family="Liberation Serif" font-size="11.5" fill="#eef2fa">660 nm</text><text transform="translate(1744,801.6) scale(1.867,1)" font-family="Liberation Serif" font-size="11.5" fill="#eef2fa">680 nm</text><text transform="translate(448,660.6) scale(1.867,1)" font-family="Liberation Serif" font-size="11.5" fill="#eef2fa">500 nm</text><text transform="translate(572.5,893.6) scale(1.867,1)" font-family="Liberation Serif" font-size="11.5" fill="#eef2fa">480 nm</text><text transform="translate(646,957.6) scale(1.867,1)" font-family="Liberation Serif" font-size="11.5" fill="#eef2fa">460 nm</text><text transform="translate(670,971.6) scale(1.867,1)" font-family="Liberation Serif" font-size="11.5" fill="#eef2fa">440 nm</text><text transform="translate(686,978.6) scale(1.867,1)" font-family="Liberation Serif" font-size="11.5" fill="#eef2fa">420 nm</text><path d="M1022.3 641.2L1082.5 657.2" stroke="#008000" stroke-width="2.6"/><path d="M1082.5 657.2L1419.8 747.2" stroke="#808000" stroke-width="2.6"/><path d="M1419.8 747.2L1584.6 791.2" stroke="#800000" stroke-width="2.6"/><path d="M1022.3 639.6L977.0 695.0" stroke="#008000" stroke-width="2.6"/><path d="M977.0 695.0L927.9 755.0" stroke="#008080" stroke-width="2.6"/><path d="M927.9 755.0L882.8 810.1" stroke="#808080" stroke-width="2.6"/><path d="M882.8 810.1L819.1 888.0" stroke="#008080" stroke-width="2.6"/><path d="M819.1 888.0L774.5 942.5" stroke="#000080" stroke-width="2.6"/><path d="M1584.6 791.2L1248.0 854.1" stroke="#800000" stroke-width="2.6"/><path d="M1248.0 854.1L910.0 917.2" stroke="#800080" stroke-width="2.6"/><path d="M910.0 917.2L774.5 942.5" stroke="#000080" stroke-width="2.6"/><polygon points="1016.0,633.0 1226.7,691.2 1592.0,788.5 1063.0,885.3 781.0,937.0 887.5,794.5" fill="none" stroke="#ffffff" stroke-width="3.2" stroke-linejoin="miter"/><path d="M1043 789.5H897" stroke="#303030" stroke-width="1" stroke-dasharray="3 4" fill="none"/><path d="M1043 788.5H1584" stroke="#303030" stroke-width="1" stroke-dasharray="3 4" fill="none"/><path d="M1043 791L977 830.4 908 867.4 841.7 905 773.5 943.5" stroke="#303030" stroke-width="1" stroke-dasharray="3 4" fill="none"/><path d="M1043 791L1037.6 753.5 1032.5 715.8 1027.4 678.1 1022.6 639.6" stroke="#303030" stroke-width="1" stroke-dasharray="3 4" fill="none"/><path d="M1043 791L1086.7 767 1130.4 741.9 1175.6 717.4 1219.3 692.2" stroke="#303030" stroke-width="1" stroke-dasharray="3 4" fill="none"/><path d="M1043 791L1048 815.7 1052 840.4 1055.5 865.7 1058.6 890.3" stroke="#303030" stroke-width="1" stroke-dasharray="3 4" fill="none"/><path d="M937 839.3L968 824 998.8 810.4 1035 797 1058 789 1079.3 781.9 1102 775.8 1130 768 1157.8 761.9 1200 754 1251.2 746.2 1288.1 743.1 1303 742.2" fill="none" stroke="#000" stroke-width="1.6"/><circle cx="998.8" cy="810.4" r="2.6" fill="#fff" stroke="#000" stroke-width="1"/><circle cx="1079.3" cy="781.9" r="2.6" fill="#fff" stroke="#000" stroke-width="1"/><circle cx="1157.8" cy="761.9" r="2.6" fill="#fff" stroke="#000" stroke-width="1"/><circle cx="1251.2" cy="746.2" r="2.6" fill="#fff" stroke="#000" stroke-width="1"/><circle cx="1288.1" cy="743.1" r="2.6" fill="#fff" stroke="#000" stroke-width="1"/><circle cx="1102.2" cy="778.9" r="2.6" fill="#10e010" stroke="#006000" stroke-width="0.6"/><circle cx="1266.2" cy="746.9" r="2.6" fill="#10e010" stroke="#006000" stroke-width="0.6"/><circle cx="1040" cy="798" r="2.6" fill="#10e010" stroke="#006000" stroke-width="0.6"/><text x="969.5" y="805" font-family="Liberation Serif" font-size="13" fill="#101030">9300</text><text x="1011" y="791" font-family="Liberation Serif" font-size="13" fill="#101030">D65</text><text x="1049.5" y="775.5" font-family="Liberation Serif" font-size="13" fill="#101030">5500</text><text x="1128" y="756" font-family="Liberation Serif" font-size="13" fill="#101030">4000</text><text x="1106.5" y="795" font-family="Liberation Serif" font-size="13" fill="#101030">B</text><text x="1224" y="740" font-family="Liberation Serif" font-size="13" fill="#101030">3000</text><text x="1285.5" y="737" font-family="Liberation Serif" font-size="13" fill="#101030">2700</text><text x="1263.5" y="763" font-family="Liberation Serif" font-size="13" fill="#101030">A</text><rect x="890.5" y="786.1" width="13" height="13" fill="none" stroke="#20f0f8" stroke-width="2.4"/><path d="M889.5 800.1V785.1H904.5" fill="none" stroke="#000080" stroke-width="1.2"/><path d="M904.5 785.1V800.1H889.5" fill="none" stroke="#ff0010" stroke-width="1.2"/><rect x="926.8" y="786.1" width="13" height="13" fill="none" stroke="#20f0f8" stroke-width="2.4"/><path d="M925.8 800.1V785.1H940.8" fill="none" stroke="#000080" stroke-width="1.2"/><path d="M940.8 785.1V800.1H925.8" fill="none" stroke="#ff0010" stroke-width="1.2"/><rect x="963.9" y="786.1" width="13" height="13" fill="none" stroke="#20f0f8" stroke-width="2.4"/><path d="M962.9 800.1V785.1H977.9" fill="none" stroke="#000080" stroke-width="1.2"/><path d="M977.9 785.1V800.1H962.9" fill="none" stroke="#ff0010" stroke-width="1.2"/><rect x="999.4" y="786.1" width="13" height="13" fill="none" stroke="#20f0f8" stroke-width="2.4"/><path d="M998.4 800.1V785.1H1013.4" fill="none" stroke="#000080" stroke-width="1.2"/><path d="M1013.4 785.1V800.1H998.4" fill="none" stroke="#ff0010" stroke-width="1.2"/><rect x="1016.1" y="633.1" width="13" height="13" fill="none" stroke="#30ff20" stroke-width="2.4"/><path d="M1015.1 647.1V632.1H1030.1" fill="none" stroke="#000080" stroke-width="1.2"/><path d="M1030.1 632.1V647.1H1015.1" fill="none" stroke="#ff0010" stroke-width="1.2"/><rect x="1020.9000000000001" y="671.6" width="13" height="13" fill="none" stroke="#30ff20" stroke-width="2.4"/><path d="M1019.9000000000001 685.6V670.6H1034.9" fill="none" stroke="#000080" stroke-width="1.2"/><path d="M1034.9 670.6V685.6H1019.9000000000001" fill="none" stroke="#ff0010" stroke-width="1.2"/><rect x="1026.0" y="709.3" width="13" height="13" fill="none" stroke="#30ff20" stroke-width="2.4"/><path d="M1025.0 723.3V708.3H1040.0" fill="none" stroke="#000080" stroke-width="1.2"/><path d="M1040.0 708.3V723.3H1025.0" fill="none" stroke="#ff0010" stroke-width="1.2"/><rect x="1031.1" y="747.0" width="13" height="13" fill="none" stroke="#30ff20" stroke-width="2.4"/><path d="M1030.1 761.0V746.0H1045.1" fill="none" stroke="#000080" stroke-width="1.2"/><path d="M1045.1 746.0V761.0H1030.1" fill="none" stroke="#ff0010" stroke-width="1.2"/><rect x="1080.2" y="760.5" width="13" height="13" fill="none" stroke="#ffe800" stroke-width="2.4"/><path d="M1079.2 774.5V759.5H1094.2" fill="none" stroke="#000080" stroke-width="1.2"/><path d="M1094.2 759.5V774.5H1079.2" fill="none" stroke="#ff0010" stroke-width="1.2"/><rect x="1123.9" y="735.4" width="13" height="13" fill="none" stroke="#ffe800" stroke-width="2.4"/><path d="M1122.9 749.4V734.4H1137.9" fill="none" stroke="#000080" stroke-width="1.2"/><path d="M1137.9 734.4V749.4H1122.9" fill="none" stroke="#ff0010" stroke-width="1.2"/><rect x="1169.1" y="710.9" width="13" height="13" fill="none" stroke="#ffe800" stroke-width="2.4"/><path d="M1168.1 724.9V709.9H1183.1" fill="none" stroke="#000080" stroke-width="1.2"/><path d="M1183.1 709.9V724.9H1168.1" fill="none" stroke="#ff0010" stroke-width="1.2"/><rect x="1212.8" y="685.7" width="13" height="13" fill="none" stroke="#ffe800" stroke-width="2.4"/><path d="M1211.8 699.7V684.7H1226.8" fill="none" stroke="#000080" stroke-width="1.2"/><path d="M1226.8 684.7V699.7H1211.8" fill="none" stroke="#ff0010" stroke-width="1.2"/><rect x="1170.5" y="785.0" width="13" height="13" fill="none" stroke="#ff0000" stroke-width="2.4"/><path d="M1169.5 799.0V784.0H1184.5" fill="none" stroke="#000080" stroke-width="1.2"/><path d="M1184.5 784.0V799.0H1169.5" fill="none" stroke="#ff0010" stroke-width="1.2"/><rect x="1304.1" y="784.75" width="13" height="13" fill="none" stroke="#ff0000" stroke-width="2.4"/><path d="M1303.1 798.75V783.75H1318.1" fill="none" stroke="#000080" stroke-width="1.2"/><path d="M1318.1 783.75V798.75H1303.1" fill="none" stroke="#ff0010" stroke-width="1.2"/><rect x="1441.0" y="784.75" width="13" height="13" fill="none" stroke="#ff0000" stroke-width="2.4"/><path d="M1440.0 798.75V783.75H1455.0" fill="none" stroke="#000080" stroke-width="1.2"/><path d="M1455.0 783.75V798.75H1440.0" fill="none" stroke="#ff0010" stroke-width="1.2"/><rect x="1578.1" y="784.9" width="13" height="13" fill="none" stroke="#ff0000" stroke-width="2.4"/><path d="M1577.1 798.9V783.9H1592.1" fill="none" stroke="#000080" stroke-width="1.2"/><path d="M1592.1 783.9V798.9H1577.1" fill="none" stroke="#ff0010" stroke-width="1.2"/><rect x="970.5" y="823.9" width="13" height="13" fill="none" stroke="#4010ff" stroke-width="2.4"/><path d="M969.5 837.9V822.9H984.5" fill="none" stroke="#000080" stroke-width="1.2"/><path d="M984.5 822.9V837.9H969.5" fill="none" stroke="#ff0010" stroke-width="1.2"/><rect x="901.5" y="860.9" width="13" height="13" fill="none" stroke="#4010ff" stroke-width="2.4"/><path d="M900.5 874.9V859.9H915.5" fill="none" stroke="#000080" stroke-width="1.2"/><path d="M915.5 859.9V874.9H900.5" fill="none" stroke="#ff0010" stroke-width="1.2"/><rect x="835.2" y="898.5" width="13" height="13" fill="none" stroke="#4010ff" stroke-width="2.4"/><path d="M834.2 912.5V897.5H849.2" fill="none" stroke="#000080" stroke-width="1.2"/><path d="M849.2 897.5V912.5H834.2" fill="none" stroke="#ff0010" stroke-width="1.2"/><rect x="767.0" y="937.0" width="13" height="13" fill="none" stroke="#4010ff" stroke-width="2.4"/><path d="M766.0 951.0V936.0H781.0" fill="none" stroke="#000080" stroke-width="1.2"/><path d="M781.0 936.0V951.0H766.0" fill="none" stroke="#ff0010" stroke-width="1.2"/><rect x="1039.8" y="809.2" width="13" height="13" fill="none" stroke="#f000f0" stroke-width="2.4"/><path d="M1038.8 823.2V808.2H1053.8" fill="none" stroke="#000080" stroke-width="1.2"/><path d="M1053.8 808.2V823.2H1038.8" fill="none" stroke="#ff0010" stroke-width="1.2"/><rect x="1043.4" y="833.9" width="13" height="13" fill="none" stroke="#f000f0" stroke-width="2.4"/><path d="M1042.4 847.9V832.9H1057.4" fill="none" stroke="#000080" stroke-width="1.2"/><path d="M1057.4 832.9V847.9H1042.4" fill="none" stroke="#ff0010" stroke-width="1.2"/><rect x="1047.0" y="859.2" width="13" height="13" fill="none" stroke="#f000f0" stroke-width="2.4"/><path d="M1046.0 873.2V858.2H1061.0" fill="none" stroke="#000080" stroke-width="1.2"/><path d="M1061.0 858.2V873.2H1046.0" fill="none" stroke="#ff0010" stroke-width="1.2"/><rect x="1050.1" y="883.8" width="13" height="13" fill="none" stroke="#f000f0" stroke-width="2.4"/><path d="M1049.1 897.8V882.8H1064.1" fill="none" stroke="#000080" stroke-width="1.2"/><path d="M1064.1 882.8V897.8H1049.1" fill="none" stroke="#ff0010" stroke-width="1.2"/><rect x="952.0" y="767.5" width="13" height="13" fill="none" stroke="#d8a050" stroke-width="2"/><rect x="953.5" y="769" width="10" height="10" fill="none" stroke="#507050" stroke-width="1"/><path d="M951.5 767l2 2M965.5 767l-2 2M951.5 781l2 -2M965.5 781l-2 -2" stroke="#fff" stroke-width="0.9"/><rect x="862.5" y="819.1" width="13" height="13" fill="none" stroke="#d8a050" stroke-width="2"/><rect x="864" y="820.6" width="10" height="10" fill="none" stroke="#507050" stroke-width="1"/><path d="M862 818.6l2 2M876 818.6l-2 2M862 832.6l2 -2M876 832.6l-2 -2" stroke="#fff" stroke-width="0.9"/><rect x="930.2" y="823.1" width="13" height="13" fill="none" stroke="#d8a050" stroke-width="2"/><rect x="931.7" y="824.6" width="10" height="10" fill="none" stroke="#507050" stroke-width="1"/><path d="M929.7 822.6l2 2M943.7 822.6l-2 2M929.7 836.6l2 -2M943.7 836.6l-2 -2" stroke="#fff" stroke-width="0.9"/><rect x="964.5" y="826.5" width="13" height="13" fill="none" stroke="#d8a050" stroke-width="2"/><rect x="966" y="828" width="10" height="10" fill="none" stroke="#507050" stroke-width="1"/><path d="M964 826l2 2M978 826l-2 2M964 840l2 -2M978 840l-2 -2" stroke="#fff" stroke-width="0.9"/><rect x="994.5" y="848.5" width="13" height="13" fill="none" stroke="#d8a050" stroke-width="2"/><rect x="996" y="850" width="10" height="10" fill="none" stroke="#507050" stroke-width="1"/><path d="M994 848l2 2M1008 848l-2 2M994 862l2 -2M1008 862l-2 -2" stroke="#fff" stroke-width="0.9"/><rect x="874.2" y="862.5" width="13" height="13" fill="none" stroke="#d8a050" stroke-width="2"/><rect x="875.7" y="864" width="10" height="10" fill="none" stroke="#507050" stroke-width="1"/><path d="M873.7 862l2 2M887.7 862l-2 2M873.7 876l2 -2M887.7 876l-2 -2" stroke="#fff" stroke-width="0.9"/><rect x="831.5" y="896.5" width="13" height="13" fill="none" stroke="#d8a050" stroke-width="2"/><rect x="833" y="898" width="10" height="10" fill="none" stroke="#507050" stroke-width="1"/><path d="M831 896l2 2M845 896l-2 2M831 910l2 -2M845 910l-2 -2" stroke="#fff" stroke-width="0.9"/><rect x="1024.0" y="692.0" width="13" height="13" fill="none" stroke="#d8a050" stroke-width="2"/><rect x="1025.5" y="693.5" width="10" height="10" fill="none" stroke="#507050" stroke-width="1"/><path d="M1023.5 691.5l2 2M1037.5 691.5l-2 2M1023.5 705.5l2 -2M1037.5 705.5l-2 -2" stroke="#fff" stroke-width="0.9"/><rect x="1143.5" y="691.5" width="13" height="13" fill="none" stroke="#d8a050" stroke-width="2"/><rect x="1145" y="693" width="10" height="10" fill="none" stroke="#507050" stroke-width="1"/><path d="M1143 691l2 2M1157 691l-2 2M1143 705l2 -2M1157 705l-2 -2" stroke="#fff" stroke-width="0.9"/><rect x="1083.5" y="727.5" width="13" height="13" fill="none" stroke="#d8a050" stroke-width="2"/><rect x="1085" y="729" width="10" height="10" fill="none" stroke="#507050" stroke-width="1"/><path d="M1083 727l2 2M1097 727l-2 2M1083 741l2 -2M1097 741l-2 -2" stroke="#fff" stroke-width="0.9"/><rect x="1144.5" y="765.5" width="13" height="13" fill="none" stroke="#d8a050" stroke-width="2"/><rect x="1146" y="767" width="10" height="10" fill="none" stroke="#507050" stroke-width="1"/><path d="M1144 765l2 2M1158 765l-2 2M1144 779l2 -2M1158 779l-2 -2" stroke="#fff" stroke-width="0.9"/><rect x="1191.3" y="765.7" width="13" height="13" fill="none" stroke="#d8a050" stroke-width="2"/><rect x="1192.8" y="767.2" width="10" height="10" fill="none" stroke="#507050" stroke-width="1"/><path d="M1190.8 765.2l2 2M1204.8 765.2l-2 2M1190.8 779.2l2 -2M1204.8 779.2l-2 -2" stroke="#fff" stroke-width="0.9"/><rect x="1305.5" y="721.5" width="13" height="13" fill="none" stroke="#d8a050" stroke-width="2"/><rect x="1307" y="723" width="10" height="10" fill="none" stroke="#507050" stroke-width="1"/><path d="M1305 721l2 2M1319 721l-2 2M1305 735l2 -2M1319 735l-2 -2" stroke="#fff" stroke-width="0.9"/><rect x="1261.2" y="702.5" width="13" height="13" fill="none" stroke="#d8a050" stroke-width="2"/><rect x="1262.7" y="704" width="10" height="10" fill="none" stroke="#507050" stroke-width="1"/><path d="M1260.7 702l2 2M1274.7 702l-2 2M1260.7 716l2 -2M1274.7 716l-2 -2" stroke="#fff" stroke-width="0.9"/><rect x="1370.4" y="743.5" width="13" height="13" fill="none" stroke="#d8a050" stroke-width="2"/><rect x="1371.9" y="745" width="10" height="10" fill="none" stroke="#507050" stroke-width="1"/><path d="M1369.9 743l2 2M1383.9 743l-2 2M1369.9 757l2 -2M1383.9 757l-2 -2" stroke="#fff" stroke-width="0.9"/><rect x="1287.25" y="793.5" width="13" height="13" fill="none" stroke="#d8a050" stroke-width="2"/><rect x="1288.75" y="795" width="10" height="10" fill="none" stroke="#507050" stroke-width="1"/><path d="M1286.75 793l2 2M1300.75 793l-2 2M1286.75 807l2 -2M1300.75 807l-2 -2" stroke="#fff" stroke-width="0.9"/><rect x="1424.5" y="791.5" width="13" height="13" fill="none" stroke="#d8a050" stroke-width="2"/><rect x="1426" y="793" width="10" height="10" fill="none" stroke="#507050" stroke-width="1"/><path d="M1424 791l2 2M1438 791l-2 2M1424 805l2 -2M1438 805l-2 -2" stroke="#fff" stroke-width="0.9"/><rect x="1135.5" y="831.5" width="13" height="13" fill="none" stroke="#d8a050" stroke-width="2"/><rect x="1137" y="833" width="10" height="10" fill="none" stroke="#507050" stroke-width="1"/><path d="M1135 831l2 2M1149 831l-2 2M1135 845l2 -2M1149 845l-2 -2" stroke="#fff" stroke-width="0.9"/><circle cx="889.5" cy="791.8" r="6.6" fill="#000" opacity="0.35" filter="url(#blur1)"/><circle cx="888" cy="790" r="5.8" fill="url(#sc)" stroke="#202020" stroke-width="0.8"/><rect x="887.4" y="789.0" width="1.3" height="2" fill="#d00000"/><circle cx="889.6" cy="795.9" r="6.6" fill="#000" opacity="0.35" filter="url(#blur1)"/><circle cx="888.1" cy="794.1" r="5.8" fill="url(#sc)" stroke="#202020" stroke-width="0.8"/><rect x="887.5" y="793.1" width="1.3" height="2" fill="#d00000"/><circle cx="929.6" cy="796.5999999999999" r="6.6" fill="#000" opacity="0.35" filter="url(#blur1)"/><circle cx="928.1" cy="794.8" r="5.8" fill="url(#sc)" stroke="#202020" stroke-width="0.8"/><rect x="927.5" y="793.8" width="1.3" height="2" fill="#d00000"/><circle cx="965.2" cy="796.5999999999999" r="6.6" fill="#000" opacity="0.35" filter="url(#blur1)"/><circle cx="963.7" cy="794.8" r="5.8" fill="url(#sc)" stroke="#202020" stroke-width="0.8"/><rect x="963.1" y="793.8" width="1.3" height="2" fill="#d00000"/><circle cx="999.3" cy="796.5999999999999" r="6.6" fill="#000" opacity="0.35" filter="url(#blur1)"/><circle cx="997.8" cy="794.8" r="5.8" fill="url(#sc)" stroke="#202020" stroke-width="0.8"/><rect x="997.2" y="793.8" width="1.3" height="2" fill="#d00000"/><circle cx="1016.5" cy="632.8" r="6.6" fill="#000" opacity="0.35" filter="url(#blur1)"/><circle cx="1015" cy="631" r="5.8" fill="url(#sg)" stroke="#202020" stroke-width="0.8"/><rect x="1014.4" y="630.0" width="1.3" height="2" fill="#000000"/><circle cx="1017.6" cy="635.0999999999999" r="6.6" fill="#000" opacity="0.35" filter="url(#blur1)"/><circle cx="1016.1" cy="633.3" r="5.8" fill="url(#sg)" stroke="#202020" stroke-width="0.8"/><rect x="1015.5" y="632.3" width="1.3" height="2" fill="#000000"/><circle cx="1016.7" cy="688.0999999999999" r="6.6" fill="#000" opacity="0.35" filter="url(#blur1)"/><circle cx="1015.2" cy="686.3" r="5.8" fill="url(#sg)" stroke="#202020" stroke-width="0.8"/><rect x="1014.6" y="685.3" width="1.3" height="2" fill="#000000"/><circle cx="1020.8" cy="727.8" r="6.6" fill="#000" opacity="0.35" filter="url(#blur1)"/><circle cx="1019.3" cy="726" r="5.8" fill="url(#sg)" stroke="#202020" stroke-width="0.8"/><rect x="1018.7" y="725.0" width="1.3" height="2" fill="#000000"/><circle cx="1030.9" cy="762.5" r="6.6" fill="#000" opacity="0.35" filter="url(#blur1)"/><circle cx="1029.4" cy="760.7" r="5.8" fill="url(#sg)" stroke="#202020" stroke-width="0.8"/><rect x="1028.8" y="759.7" width="1.3" height="2" fill="#000000"/><circle cx="1083.7" cy="773.3" r="6.6" fill="#000" opacity="0.35" filter="url(#blur1)"/><circle cx="1082.2" cy="771.5" r="5.8" fill="url(#sy)" stroke="#202020" stroke-width="0.8"/><rect x="1081.6" y="770.5" width="1.3" height="2" fill="#000060"/><circle cx="1124.5" cy="751.8" r="6.6" fill="#000" opacity="0.35" filter="url(#blur1)"/><circle cx="1123" cy="750" r="5.8" fill="url(#sy)" stroke="#202020" stroke-width="0.8"/><rect x="1122.4" y="749.0" width="1.3" height="2" fill="#000060"/><circle cx="1171.1" cy="726.5999999999999" r="6.6" fill="#000" opacity="0.35" filter="url(#blur1)"/><circle cx="1169.6" cy="724.8" r="5.8" fill="url(#sy)" stroke="#202020" stroke-width="0.8"/><rect x="1169.0" y="723.8" width="1.3" height="2" fill="#000060"/><circle cx="1221.5" cy="689.8" r="6.6" fill="#000" opacity="0.35" filter="url(#blur1)"/><circle cx="1220" cy="688" r="5.8" fill="url(#sy)" stroke="#202020" stroke-width="0.8"/><rect x="1219.4" y="687.0" width="1.3" height="2" fill="#000060"/><circle cx="1228.2" cy="693.3" r="6.6" fill="#000" opacity="0.35" filter="url(#blur1)"/><circle cx="1226.7" cy="691.5" r="5.8" fill="url(#sy)" stroke="#202020" stroke-width="0.8"/><rect x="1226.1" y="690.5" width="1.3" height="2" fill="#000060"/><circle cx="1162.2" cy="794.0" r="6.6" fill="#000" opacity="0.35" filter="url(#blur1)"/><circle cx="1160.7" cy="792.2" r="5.8" fill="url(#sr)" stroke="#202020" stroke-width="0.8"/><circle cx="1292.1" cy="794.3" r="6.6" fill="#000" opacity="0.35" filter="url(#blur1)"/><circle cx="1290.6" cy="792.5" r="5.8" fill="url(#sr)" stroke="#202020" stroke-width="0.8"/><circle cx="1427.1" cy="789.8" r="6.6" fill="#000" opacity="0.35" filter="url(#blur1)"/><circle cx="1425.6" cy="788" r="5.8" fill="url(#sr)" stroke="#202020" stroke-width="0.8"/><circle cx="1595.5" cy="790.0999999999999" r="6.6" fill="#000" opacity="0.35" filter="url(#blur1)"/><circle cx="1594" cy="788.3" r="5.8" fill="url(#sr)" stroke="#202020" stroke-width="0.8"/><circle cx="1587.1" cy="790.6999999999999" r="6.6" fill="#000" opacity="0.35" filter="url(#blur1)"/><circle cx="1585.6" cy="788.9" r="5.8" fill="url(#sr)" stroke="#202020" stroke-width="0.8"/><circle cx="971.9" cy="830.6999999999999" r="6.6" fill="#000" opacity="0.35" filter="url(#blur1)"/><circle cx="970.4" cy="828.9" r="5.8" fill="url(#sb)" stroke="#202020" stroke-width="0.8"/><circle cx="916.3" cy="862.5" r="6.6" fill="#000" opacity="0.35" filter="url(#blur1)"/><circle cx="914.8" cy="860.7" r="5.8" fill="url(#sb)" stroke="#202020" stroke-width="0.8"/><circle cx="843.2" cy="902.0" r="6.6" fill="#000" opacity="0.35" filter="url(#blur1)"/><circle cx="841.7" cy="900.2" r="5.8" fill="url(#sb)" stroke="#202020" stroke-width="0.8"/><circle cx="783.4" cy="938.0999999999999" r="6.6" fill="#000" opacity="0.35" filter="url(#blur1)"/><circle cx="781.9" cy="936.3" r="5.8" fill="url(#sb)" stroke="#202020" stroke-width="0.8"/><circle cx="1044.2" cy="818.0999999999999" r="6.6" fill="#000" opacity="0.35" filter="url(#blur1)"/><circle cx="1042.7" cy="816.3" r="5.8" fill="url(#sm)" stroke="#202020" stroke-width="0.8"/><rect x="1042.1" y="815.3" width="1.3" height="2" fill="#000000"/><circle cx="1045.4" cy="840.4" r="6.6" fill="#000" opacity="0.35" filter="url(#blur1)"/><circle cx="1043.9" cy="838.6" r="5.8" fill="url(#sm)" stroke="#202020" stroke-width="0.8"/><rect x="1043.3" y="837.6" width="1.3" height="2" fill="#000000"/><circle cx="1047.2" cy="862.6999999999999" r="6.6" fill="#000" opacity="0.35" filter="url(#blur1)"/><circle cx="1045.7" cy="860.9" r="5.8" fill="url(#sm)" stroke="#202020" stroke-width="0.8"/><rect x="1045.1" y="859.9" width="1.3" height="2" fill="#000000"/><circle cx="1068.3" cy="886.6999999999999" r="6.6" fill="#000" opacity="0.35" filter="url(#blur1)"/><circle cx="1066.8" cy="884.9" r="5.8" fill="url(#sm)" stroke="#202020" stroke-width="0.8"/><rect x="1066.2" y="883.9" width="1.3" height="2" fill="#000000"/><circle cx="1060.5" cy="887.9" r="6.6" fill="#000" opacity="0.35" filter="url(#blur1)"/><circle cx="1059" cy="886.1" r="5.8" fill="url(#sm)" stroke="#202020" stroke-width="0.8"/><rect x="1058.4" y="885.1" width="1.3" height="2" fill="#000000"/><circle cx="954.1" cy="775.5999999999999" r="6.3999999999999995" fill="#000" opacity="0.35" filter="url(#blur1)"/><circle cx="952.6" cy="773.8" r="5.6" fill="url(#sw)" stroke="#101010" stroke-width="1.3"/><circle cx="864.5" cy="827.4" r="6.3999999999999995" fill="#000" opacity="0.35" filter="url(#blur1)"/><circle cx="863" cy="825.6" r="5.6" fill="url(#sw)" stroke="#101010" stroke-width="1.3"/><circle cx="934.1" cy="829.1999999999999" r="6.3999999999999995" fill="#000" opacity="0.35" filter="url(#blur1)"/><circle cx="932.6" cy="827.4" r="5.6" fill="url(#sw)" stroke="#101010" stroke-width="1.3"/><circle cx="968.9" cy="833.9" r="6.3999999999999995" fill="#000" opacity="0.35" filter="url(#blur1)"/><circle cx="967.4" cy="832.1" r="5.6" fill="url(#sw)" stroke="#101010" stroke-width="1.3"/><circle cx="997.1" cy="854.4" r="6.3999999999999995" fill="#000" opacity="0.35" filter="url(#blur1)"/><circle cx="995.6" cy="852.6" r="5.6" fill="url(#sw)" stroke="#101010" stroke-width="1.3"/><circle cx="882.2" cy="865.9" r="6.3999999999999995" fill="#000" opacity="0.35" filter="url(#blur1)"/><circle cx="880.7" cy="864.1" r="5.6" fill="url(#sw)" stroke="#101010" stroke-width="1.3"/><circle cx="843.2" cy="895.5" r="6.3999999999999995" fill="#000" opacity="0.35" filter="url(#blur1)"/><circle cx="841.7" cy="893.7" r="5.6" fill="url(#sw)" stroke="#101010" stroke-width="1.3"/><circle cx="1020.8" cy="705.4" r="6.3999999999999995" fill="#000" opacity="0.35" filter="url(#blur1)"/><circle cx="1019.3" cy="703.6" r="5.6" fill="url(#sw)" stroke="#101010" stroke-width="1.3"/><circle cx="1150.4" cy="702.1999999999999" r="6.3999999999999995" fill="#000" opacity="0.35" filter="url(#blur1)"/><circle cx="1148.9" cy="700.4" r="5.6" fill="url(#sw)" stroke="#101010" stroke-width="1.3"/><circle cx="1085.9" cy="738.5" r="6.3999999999999995" fill="#000" opacity="0.35" filter="url(#blur1)"/><circle cx="1084.4" cy="736.7" r="5.6" fill="url(#sw)" stroke="#101010" stroke-width="1.3"/><circle cx="1148.9" cy="779.9" r="6.3999999999999995" fill="#000" opacity="0.35" filter="url(#blur1)"/><circle cx="1147.4" cy="778.1" r="5.6" fill="url(#sw)" stroke="#101010" stroke-width="1.3"/><circle cx="1177.8" cy="773.3" r="6.3999999999999995" fill="#000" opacity="0.35" filter="url(#blur1)"/><circle cx="1176.3" cy="771.5" r="5.6" fill="url(#sw)" stroke="#101010" stroke-width="1.3"/><circle cx="1302.1" cy="727.4" r="6.3999999999999995" fill="#000" opacity="0.35" filter="url(#blur1)"/><circle cx="1300.6" cy="725.6" r="5.6" fill="url(#sw)" stroke="#101010" stroke-width="1.3"/><circle cx="1269.2" cy="711.3" r="6.3999999999999995" fill="#000" opacity="0.35" filter="url(#blur1)"/><circle cx="1267.7" cy="709.5" r="5.6" fill="url(#sw)" stroke="#101010" stroke-width="1.3"/><circle cx="1378.4" cy="744.3" r="6.3999999999999995" fill="#000" opacity="0.35" filter="url(#blur1)"/><circle cx="1376.9" cy="742.5" r="5.6" fill="url(#sw)" stroke="#101010" stroke-width="1.3"/><circle cx="1275.25" cy="804.3" r="6.3999999999999995" fill="#000" opacity="0.35" filter="url(#blur1)"/><circle cx="1273.75" cy="802.5" r="5.6" fill="url(#sw)" stroke="#101010" stroke-width="1.3"/><circle cx="1422.1" cy="796.8" r="6.3999999999999995" fill="#000" opacity="0.35" filter="url(#blur1)"/><circle cx="1420.6" cy="795" r="5.6" fill="url(#sw)" stroke="#101010" stroke-width="1.3"/><circle cx="1139.3" cy="838.5999999999999" r="6.3999999999999995" fill="#000" opacity="0.35" filter="url(#blur1)"/><circle cx="1137.8" cy="836.8" r="5.6" fill="url(#sw)" stroke="#101010" stroke-width="1.3"/><circle cx="1083.0" cy="792.5" r="6.3999999999999995" fill="#000" opacity="0.35" filter="url(#blur1)"/><circle cx="1081.5" cy="790.7" r="5.6" fill="url(#sw)" stroke="#101010" stroke-width="1.3"/><circle cx="1034.0" cy="796.5" r="6.6" fill="#000" opacity="0.35" filter="url(#blur1)"/><circle cx="1032.5" cy="794.7" r="5.8" fill="url(#sw)" stroke="#808080" stroke-width="0.8"/><circle cx="1038.8" cy="792.8" r="6.6" fill="#000" opacity="0.35" filter="url(#blur1)"/><circle cx="1037.3" cy="791" r="5.8" fill="url(#sn)" stroke="#202020" stroke-width="0.8"/><circle cx="1041.2" cy="794.0999999999999" r="6.6" fill="#000" opacity="0.35" filter="url(#blur1)"/><circle cx="1039.7" cy="792.3" r="5.8" fill="url(#sm)" stroke="#202020" stroke-width="0.8"/><circle cx="1049.6" cy="789.1999999999999" r="6.8" fill="#000" opacity="0.35" filter="url(#blur1)"/><circle cx="1048.1" cy="787.4" r="6.0" fill="url(#sw)" stroke="#000" stroke-width="1.7"/><text x="1725" y="945" font-family="Liberation Sans" font-weight="bold" font-size="16" fill="#4a4c4e">hcfr.sourceforge.net</text></svg><div style="position:absolute;left:2px;top:1016px;width:1898px;height:2px;background:#f6f6f6"></div><div style="position:absolute;left:0px;top:1017px;width:1900px;height:5px;background:linear-gradient(#6e6e6e 0,#6e6e6e 2px,#b8b8b8 2px)"></div><div style="position:absolute;left:2px;top:1022px;width:1898px;height:17px;background:#efefef"></div><div style="position:absolute;left:19px;top:1030px;width:1826px;height:2px;background:#808080"></div><div style="position:absolute;left:0px;top:1039px;width:1920px;height:3px;background:#fdfdfd"></div><div style="position:absolute;left:0px;top:1042px;width:1920px;height:1px;background:#000"></div><div style="position:absolute;left:0px;top:1043px;width:1920px;height:18px;background:#f0f0f0"></div><div style="position:absolute;left:0px;top:1043px;width:54px;height:18px;background:#000"></div><div style="position:absolute;left:2px;top:1044px;width:15px;height:16px;background:linear-gradient(90deg,#f4f4f4,#e4e4e4);border-right:1px solid #808080;box-sizing:border-box"></div><div style="position:absolute;left:19px;top:1044px;width:15px;height:16px;background:linear-gradient(90deg,#f4f4f4,#e4e4e4);border-right:1px solid #808080;box-sizing:border-box"></div><div style="position:absolute;left:36px;top:1044px;width:16px;height:16px;background:linear-gradient(90deg,#f4f4f4,#e4e4e4);border-right:1px solid #808080;box-sizing:border-box"></div><svg style="position:absolute;left:4px;top:1046px" width="12" height="12" viewBox="0 0 12 12"><path d="M2 2L10 10M10 2L2 10" stroke="#000" stroke-width="1.3"/></svg><svg style="position:absolute;left:22px;top:1047px" width="8" height="10" viewBox="0 0 8 10"><path d="M6 1L2 5L6 9z" fill="#000"/></svg><svg style="position:absolute;left:40px;top:1047px" width="8" height="10" viewBox="0 0 8 10"><path d="M2 1L6 5L2 9z" fill="#000"/></svg><svg style="position:absolute;left:50px;top:1042px" width="280" height="19" viewBox="0 0 280 19"><path d="M5 0 L13 18 H69 L78 0z" fill="#fff"/><path d="M5 0 L13 18 H69 L78 0" fill="none" stroke="#000" stroke-width="1"/><path d="M73 9 L77 18 H137 L141 9 L137 0" fill="none" stroke="#000" stroke-width="0.9"/><path d="M141 9 L144.5 18 H190 L194 9 L190 0" fill="none" stroke="#000" stroke-width="0.9"/><path d="M194 9 L197 18 H263 L271 0" fill="none" stroke="#000" stroke-width="0.9"/><path d="M0 0.5 H280" stroke="#000" stroke-width="1"/></svg><div style="position:absolute;left:67px;top:1045.98px;white-space:nowrap;font-family:'Liberation Sans', sans-serif;font-size:10.5px;font-weight:bold;color:#000;letter-spacing:0.080px;line-height:12.07px;">Measures</div><div style="position:absolute;left:134px;top:1046.08px;white-space:nowrap;font-family:'Liberation Sans', sans-serif;font-size:10px;color:#000;letter-spacing:-0.490px;line-height:11.5px;">Luminance</div><div style="position:absolute;left:200px;top:1046.17px;white-space:nowrap;font-family:'Liberation Sans', sans-serif;font-size:9.5px;color:#000;letter-spacing:-0.446px;line-height:10.92px;">Gamma</div><div style="position:absolute;left:255.5px;top:1046.17px;white-space:nowrap;font-family:'Liberation Sans', sans-serif;font-size:9.5px;color:#000;letter-spacing:-0.187px;line-height:10.92px;">RGB Levels</div><svg style="position:absolute;left:1750px;top:1043px" width="14" height="15" viewBox="0 0 14 15"><path d="M1 1h12v9l-3 4h-2l-1-3h-0l-1 3H4L1 10z" fill="#807010" stroke="#403800" stroke-width="0.8"/><rect x="3" y="3" width="8" height="5" fill="#f04040"/><path d="M8 10l3 0-1.5 3z" fill="#e0e000"/></svg><div style="position:absolute;left:1846px;top:1044px;width:12px;height:12px;background:#fff;border:1px solid #555;border-radius:2px;box-sizing:border-box"></div><div style="position:absolute;left:1863px;top:1045.09px;white-space:nowrap;font-family:'Liberation Sans', sans-serif;font-size:11.5px;color:#000;letter-spacing:-0.445px;line-height:13.22px;">Reference</div><div style="position:absolute;left:0px;top:1061px;width:1920px;height:19px;background:#e6edf7"></div><div style="position:absolute;left:2px;top:1064.99px;white-space:nowrap;font-family:'Liberation Sans', sans-serif;font-size:12px;color:#000;letter-spacing:-0.771px;line-height:13.8px;">Ready</div><div style="position:absolute;left:1742px;top:1062px;width:75px;height:18px;border-left:1px solid #a8b8d0;border-top:1px solid #a8b8d0;box-sizing:border-box;background:#e9eff8"></div><div style="position:absolute;left:1820px;top:1062px;width:26px;height:18px;border-left:1px solid #a8b8d0;border-top:1px solid #a8b8d0;box-sizing:border-box;background:#e9eff8"></div><div style="position:absolute;left:1823px;top:1064.99px;white-space:nowrap;font-family:'Liberation Sans', sans-serif;font-size:12px;color:#000;letter-spacing:-1.338px;line-height:13.8px;">CAP</div><div style="position:absolute;left:1851px;top:1062px;width:31px;height:18px;border-left:1px solid #a8b8d0;border-top:1px solid #a8b8d0;box-sizing:border-box;background:#e9eff8"></div><div style="position:absolute;left:1853.4px;top:1064.99px;white-space:nowrap;font-family:'Liberation Sans', sans-serif;font-size:12px;color:#000;letter-spacing:-0.164px;line-height:13.8px;">NUM</div><div style="position:absolute;left:1886px;top:1062px;width:34px;height:18px;border-left:1px solid #a8b8d0;border-top:1px solid #a8b8d0;box-sizing:border-box;background:#e9eff8"></div>
</body></html>
